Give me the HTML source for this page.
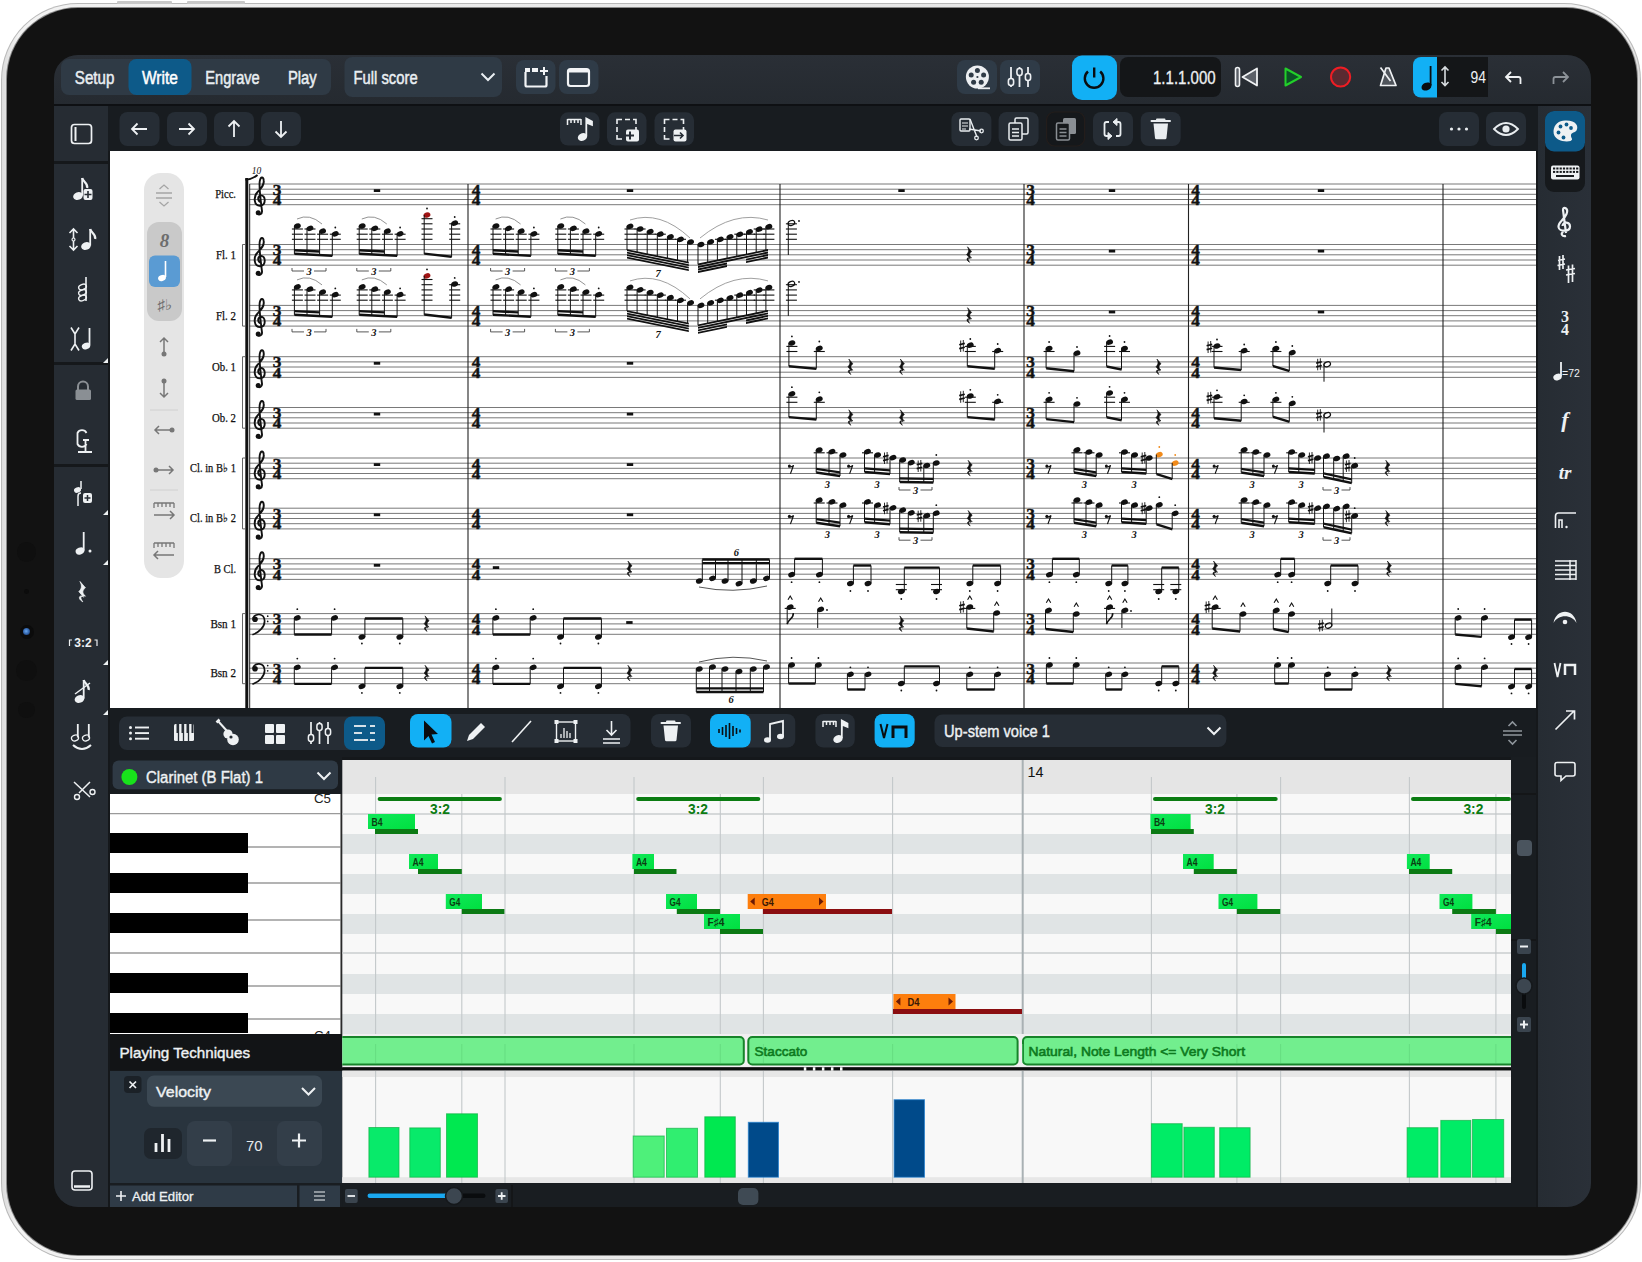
<!DOCTYPE html>
<html><head><meta charset="utf-8">
<style>
*{margin:0;padding:0;box-sizing:border-box}
html,body{width:1642px;height:1262px;overflow:hidden;background:#fff;font-family:"Liberation Sans",sans-serif}
.a{position:absolute}

.frame{left:1px;top:3px;width:1640px;height:1257px;border-radius:77px;background:#b9b9b9;}
.frame2{left:2px;top:4px;width:1638px;height:1255px;border-radius:76px;background:linear-gradient(90deg,#dcdcdc,#f2f2f2 1%,#e6e6e6 50%,#f2f2f2 99%,#dcdcdc);}
.bezel{left:7px;top:8px;width:1630px;height:1247px;border-radius:71px;background:#121212;box-shadow:0 0 0 1px #8a8a8a;}
.screen{left:54px;top:55px;width:1537px;height:1152px;border-radius:24px;background:#15181b;overflow:hidden}
.t{position:absolute;color:#e9eef2;font-family:"Liberation Sans",sans-serif;white-space:nowrap}
.b{position:absolute;border-radius:8px}


</style></head><body>
<div class="a frame"></div><div class="a frame2"></div><div class="a bezel"></div>
<div class="a" style="left:16.7px;top:542.2px;width:19.6px;height:19.6px;background:#0f0f0f;border-radius:10px;"></div>
<div class="a" style="left:24.3px;top:589.2px;width:4.4px;height:4.4px;background:#0c0c0c;border-radius:3px;"></div>
<div class="a" style="left:19.5px;top:624.8px;width:14px;height:14px;background:#0b0b0b;border-radius:7px;"></div>
<div class="a" style="left:23px;top:628.3px;width:7px;height:7px;background:radial-gradient(circle at 45% 45%,#6aa8f0,#2a5aa0 60%,#10203a);border-radius:4px;"></div>
<div class="a" style="left:16px;top:660.2px;width:21px;height:21px;background:#0f0f0f;border-radius:11px;"></div>
<div class="a" style="left:18.2px;top:701.7px;width:16.6px;height:16.6px;background:#0f0f0f;border-radius:9px;"></div>
<div class="a" style="left:117px;top:1px;width:55px;height:3px;background:#c8c8c8;border-radius:1px;"></div>
<div class="a" style="left:187px;top:1px;width:58px;height:3px;background:#c8c8c8;border-radius:1px;"></div>
<div class="a screen">
<div class="a" style="left:0px;top:0px;width:1537px;height:49px;background:linear-gradient(#2a2f36,#252a30);border-radius:0px;"></div>
<div class="a" style="left:0px;top:49px;width:1537px;height:2px;background:#0e1013;border-radius:0px;"></div>
<div class="a" style="left:0px;top:51px;width:1537px;height:45px;background:#181c20;border-radius:0px;"></div>
<div class="a" style="left:0px;top:51px;width:54px;height:55px;background:#262c33;border-radius:0px;"></div>
<div class="a" style="left:0px;top:109px;width:54px;height:198px;background:#262c33;border-radius:0px;"></div>
<div class="a" style="left:0px;top:310px;width:54px;height:99px;background:#262c33;border-radius:0px;"></div>
<div class="a" style="left:0px;top:412px;width:54px;height:740px;background:#262c33;border-radius:0px;"></div>
<div class="a" style="left:1484px;top:51px;width:53px;height:1101px;background:linear-gradient(90deg,#262c33,#2a3038);border-radius:0px;"></div>
<div class="a" style="left:56px;top:653px;width:1426px;height:49px;background:#181c20;border-radius:0px;"></div>
<div class="a" style="left:56px;top:702px;width:232px;height:37px;background:#181c20;border-radius:0px;"></div>
<div class="a" style="left:56px;top:979px;width:232px;height:36px;background:#121416;border-radius:0px;"></div>
<div class="a" style="left:56px;top:1016px;width:232px;height:113px;background:#29343e;border-radius:0px;"></div>
<div class="a" style="left:56px;top:1128px;width:1426px;height:24px;background:#181c20;border-radius:0px;"></div>
<div class="a" style="left:1457px;top:702px;width:25px;height:426px;background:#191d21;border-radius:0px;"></div>
</div>
<svg class="a" style="left:110px;top:151px" width="1426" height="557" viewBox="110 151 1426 557">
<rect x="110" y="151" width="1426" height="557" fill="#fff"/>
<rect x="144" y="173" width="40" height="405" rx="17" fill="#e5e5e5"/>
<rect x="147" y="222" width="35" height="99" rx="12" fill="#c9c9c9"/>
<rect x="149" y="255.5" width="31" height="31.5" rx="6" fill="#5a9bd3"/>
<path d="M156 193 H172 M156 198 H172 M159.5 189 L164 185 L168.5 189 M159.5 202 L164 206 L168.5 202" stroke="#a5a5a5" stroke-width="1.3" fill="none"/>
<text x="164.5" y="247" font-size="19" text-anchor="middle" font-style="italic" font-weight="bold" fill="#6d6d6d" style="font-family:Liberation Serif">8</text>
<ellipse cx="162" cy="278" rx="4" ry="3" transform="rotate(-22 162 278)" fill="#fff"/><path d="M165.5 277 V261" stroke="#fff" stroke-width="1.6"/>
<text x="164.5" y="310" font-size="15" text-anchor="middle" fill="#6d6d6d" style="font-family:Liberation Sans">♯♭</text>
<path d="M164 355 V338 M160 342 L164 338 L168 342" stroke="#777" stroke-width="1.5" fill="none"/><circle cx="164" cy="354" r="2.5" fill="#777"/>
<path d="M164 380 V397 M160 393 L164 397 L168 393" stroke="#777" stroke-width="1.5" fill="none"/><circle cx="164" cy="381" r="2.5" fill="#777"/>
<path d="M150 410 H178" stroke="#d0d0d0" stroke-width="1"/>
<path d="M172 430 H155 M159 426 L155 430 L159 434" stroke="#777" stroke-width="1.5" fill="none"/><circle cx="172" cy="430" r="2.5" fill="#777"/>
<path d="M156 470 H173 M169 466 L173 470 L169 474" stroke="#777" stroke-width="1.5" fill="none"/><circle cx="156" cy="470" r="2.5" fill="#777"/>
<path d="M150 490 H178" stroke="#d0d0d0" stroke-width="1"/>
<path d="M154 503 H174 M154 503 V508 M158 503 V507 M162 503 V507 M166 503 V507 M170 503 V507 M174 503 V508" stroke="#777" stroke-width="1.3" fill="none"/>
<path d="M154 515 H174 M170 511 L174 515 L170 519" stroke="#777" stroke-width="1.5" fill="none"/>
<path d="M154 543 H174 M154 543 V548 M158 543 V547 M162 543 V547 M166 543 V547 M170 543 V547 M174 543 V548" stroke="#777" stroke-width="1.3" fill="none"/>
<path d="M174 555 H154 M158 551 L154 555 L158 559" stroke="#777" stroke-width="1.5" fill="none"/>
<text x="215.2" y="198.1" font-size="12" textLength="20.8" lengthAdjust="spacingAndGlyphs" fill="#111" stroke="#111" stroke-width="0.25" style="font-family:Liberation Serif">Picc.</text>
<text x="216.0" y="258.6" font-size="12" textLength="20" lengthAdjust="spacingAndGlyphs" fill="#111" stroke="#111" stroke-width="0.25" style="font-family:Liberation Serif">Fl. 1</text>
<text x="216.0" y="319.5" font-size="12" textLength="20" lengthAdjust="spacingAndGlyphs" fill="#111" stroke="#111" stroke-width="0.25" style="font-family:Liberation Serif">Fl. 2</text>
<text x="212.0" y="370.8" font-size="12" textLength="24" lengthAdjust="spacingAndGlyphs" fill="#111" stroke="#111" stroke-width="0.25" style="font-family:Liberation Serif">Ob. 1</text>
<text x="212.0" y="421.6" font-size="12" textLength="24" lengthAdjust="spacingAndGlyphs" fill="#111" stroke="#111" stroke-width="0.25" style="font-family:Liberation Serif">Ob. 2</text>
<text x="190.0" y="472.1" font-size="12" textLength="46" lengthAdjust="spacingAndGlyphs" fill="#111" stroke="#111" stroke-width="0.25" style="font-family:Liberation Serif">Cl. in B♭ 1</text>
<text x="190.0" y="522.3" font-size="12" textLength="46" lengthAdjust="spacingAndGlyphs" fill="#111" stroke="#111" stroke-width="0.25" style="font-family:Liberation Serif">Cl. in B♭ 2</text>
<text x="214.0" y="572.8" font-size="12" textLength="22" lengthAdjust="spacingAndGlyphs" fill="#111" stroke="#111" stroke-width="0.25" style="font-family:Liberation Serif">B Cl.</text>
<text x="210.4" y="627.7" font-size="12" textLength="25.6" lengthAdjust="spacingAndGlyphs" fill="#111" stroke="#111" stroke-width="0.25" style="font-family:Liberation Serif">Bsn 1</text>
<text x="210.4" y="677.1" font-size="12" textLength="25.6" lengthAdjust="spacingAndGlyphs" fill="#111" stroke="#111" stroke-width="0.25" style="font-family:Liberation Serif">Bsn 2</text>
<path d="M249.5 184.0 H1536" stroke="#6a6a6a" stroke-width="0.9"/>
<path d="M249.5 189.2 H1536" stroke="#6a6a6a" stroke-width="0.9"/>
<path d="M249.5 194.3 H1536" stroke="#6a6a6a" stroke-width="0.9"/>
<path d="M249.5 199.5 H1536" stroke="#6a6a6a" stroke-width="0.9"/>
<path d="M249.5 204.7 H1536" stroke="#6a6a6a" stroke-width="0.9"/>
<path d="M249.5 244.5 H1536" stroke="#6a6a6a" stroke-width="0.9"/>
<path d="M249.5 249.7 H1536" stroke="#6a6a6a" stroke-width="0.9"/>
<path d="M249.5 254.8 H1536" stroke="#6a6a6a" stroke-width="0.9"/>
<path d="M249.5 260.0 H1536" stroke="#6a6a6a" stroke-width="0.9"/>
<path d="M249.5 265.2 H1536" stroke="#6a6a6a" stroke-width="0.9"/>
<path d="M249.5 305.4 H1536" stroke="#6a6a6a" stroke-width="0.9"/>
<path d="M249.5 310.6 H1536" stroke="#6a6a6a" stroke-width="0.9"/>
<path d="M249.5 315.7 H1536" stroke="#6a6a6a" stroke-width="0.9"/>
<path d="M249.5 320.9 H1536" stroke="#6a6a6a" stroke-width="0.9"/>
<path d="M249.5 326.1 H1536" stroke="#6a6a6a" stroke-width="0.9"/>
<path d="M249.5 356.7 H1536" stroke="#6a6a6a" stroke-width="0.9"/>
<path d="M249.5 361.9 H1536" stroke="#6a6a6a" stroke-width="0.9"/>
<path d="M249.5 367.0 H1536" stroke="#6a6a6a" stroke-width="0.9"/>
<path d="M249.5 372.2 H1536" stroke="#6a6a6a" stroke-width="0.9"/>
<path d="M249.5 377.4 H1536" stroke="#6a6a6a" stroke-width="0.9"/>
<path d="M249.5 407.5 H1536" stroke="#6a6a6a" stroke-width="0.9"/>
<path d="M249.5 412.7 H1536" stroke="#6a6a6a" stroke-width="0.9"/>
<path d="M249.5 417.8 H1536" stroke="#6a6a6a" stroke-width="0.9"/>
<path d="M249.5 423.0 H1536" stroke="#6a6a6a" stroke-width="0.9"/>
<path d="M249.5 428.2 H1536" stroke="#6a6a6a" stroke-width="0.9"/>
<path d="M249.5 458.0 H1536" stroke="#6a6a6a" stroke-width="0.9"/>
<path d="M249.5 463.2 H1536" stroke="#6a6a6a" stroke-width="0.9"/>
<path d="M249.5 468.3 H1536" stroke="#6a6a6a" stroke-width="0.9"/>
<path d="M249.5 473.5 H1536" stroke="#6a6a6a" stroke-width="0.9"/>
<path d="M249.5 478.7 H1536" stroke="#6a6a6a" stroke-width="0.9"/>
<path d="M249.5 508.2 H1536" stroke="#6a6a6a" stroke-width="0.9"/>
<path d="M249.5 513.4 H1536" stroke="#6a6a6a" stroke-width="0.9"/>
<path d="M249.5 518.5 H1536" stroke="#6a6a6a" stroke-width="0.9"/>
<path d="M249.5 523.7 H1536" stroke="#6a6a6a" stroke-width="0.9"/>
<path d="M249.5 528.9 H1536" stroke="#6a6a6a" stroke-width="0.9"/>
<path d="M249.5 558.7 H1536" stroke="#6a6a6a" stroke-width="0.9"/>
<path d="M249.5 563.9 H1536" stroke="#6a6a6a" stroke-width="0.9"/>
<path d="M249.5 569.0 H1536" stroke="#6a6a6a" stroke-width="0.9"/>
<path d="M249.5 574.2 H1536" stroke="#6a6a6a" stroke-width="0.9"/>
<path d="M249.5 579.4 H1536" stroke="#6a6a6a" stroke-width="0.9"/>
<path d="M249.5 613.6 H1536" stroke="#6a6a6a" stroke-width="0.9"/>
<path d="M249.5 618.8 H1536" stroke="#6a6a6a" stroke-width="0.9"/>
<path d="M249.5 623.9 H1536" stroke="#6a6a6a" stroke-width="0.9"/>
<path d="M249.5 629.1 H1536" stroke="#6a6a6a" stroke-width="0.9"/>
<path d="M249.5 634.3 H1536" stroke="#6a6a6a" stroke-width="0.9"/>
<path d="M249.5 663.0 H1536" stroke="#6a6a6a" stroke-width="0.9"/>
<path d="M249.5 668.2 H1536" stroke="#6a6a6a" stroke-width="0.9"/>
<path d="M249.5 673.3 H1536" stroke="#6a6a6a" stroke-width="0.9"/>
<path d="M249.5 678.5 H1536" stroke="#6a6a6a" stroke-width="0.9"/>
<path d="M249.5 683.7 H1536" stroke="#6a6a6a" stroke-width="0.9"/>
<path d="M246.8 178 V708" stroke="#111" stroke-width="3"/>
<path d="M245.3 179.5 Q252 179.5 257.5 175" stroke="#111" stroke-width="2" fill="none"/>
<path d="M249.7 184 V708" stroke="#222" stroke-width="1"/>
<text x="256.5" y="173.5" font-size="9.5" text-anchor="middle" font-style="italic" fill="#111" style="font-family:Liberation Serif">10</text>
<path d="M245 244.5 H242.5 V326.1 H245" stroke="#555" stroke-width="0.9" fill="none"/>
<path d="M245 356.7 H242.5 V428.2 H245" stroke="#555" stroke-width="0.9" fill="none"/>
<path d="M245 458.0 H242.5 V528.9 H245" stroke="#555" stroke-width="0.9" fill="none"/>
<path d="M245 613.6 H242.5 V683.7 H245" stroke="#555" stroke-width="0.9" fill="none"/>
<path d="M468 184 V708" stroke="#222" stroke-width="1.1"/>
<path d="M780 184 V708" stroke="#222" stroke-width="1.1"/>
<path d="M1024 184 V708" stroke="#222" stroke-width="1.1"/>
<path d="M1188.5 184 V708" stroke="#222" stroke-width="1.1"/>
<path d="M1443 184 V708" stroke="#222" stroke-width="1.1"/>
<path d="M261.3 201.8 C257.8 202.4 256.9 196.4 260.7 195.4 C265.7 194.6 266.6 205.2 260.2 205.7 C253.8 206.0 253.0 196.4 257.8 191.8 C261.3 188.1 264.4 185.0 263.7 180.4 C263.3 176.5 260.7 176.5 259.8 180.9 C258.7 186.6 260.7 200.5 262.0 210.9 C262.4 214.0 259.1 215.5 257.4 213.5" stroke="#111" stroke-width="1.9" fill="none"/>
<circle cx="258.2" cy="212.7" r="2.5" fill="#111"/>
<text x="277.0" y="194.5" font-size="15.5" text-anchor="middle" font-weight="bold" fill="#111" stroke="#111" stroke-width="0.45" style="font-family:Liberation Serif" textLength="8.6" lengthAdjust="spacingAndGlyphs">3</text>
<text x="277.0" y="204.9" font-size="15.5" text-anchor="middle" font-weight="bold" fill="#111" stroke="#111" stroke-width="0.45" style="font-family:Liberation Serif" textLength="8.6" lengthAdjust="spacingAndGlyphs">4</text>
<text x="476.0" y="194.5" font-size="15.5" text-anchor="middle" font-weight="bold" fill="#111" stroke="#111" stroke-width="0.45" style="font-family:Liberation Serif" textLength="8.6" lengthAdjust="spacingAndGlyphs">4</text>
<text x="476.0" y="204.9" font-size="15.5" text-anchor="middle" font-weight="bold" fill="#111" stroke="#111" stroke-width="0.45" style="font-family:Liberation Serif" textLength="8.6" lengthAdjust="spacingAndGlyphs">4</text>
<text x="1030.5" y="194.5" font-size="15.5" text-anchor="middle" font-weight="bold" fill="#111" stroke="#111" stroke-width="0.45" style="font-family:Liberation Serif" textLength="8.6" lengthAdjust="spacingAndGlyphs">3</text>
<text x="1030.5" y="204.9" font-size="15.5" text-anchor="middle" font-weight="bold" fill="#111" stroke="#111" stroke-width="0.45" style="font-family:Liberation Serif" textLength="8.6" lengthAdjust="spacingAndGlyphs">4</text>
<text x="1195.5" y="194.5" font-size="15.5" text-anchor="middle" font-weight="bold" fill="#111" stroke="#111" stroke-width="0.45" style="font-family:Liberation Serif" textLength="8.6" lengthAdjust="spacingAndGlyphs">4</text>
<text x="1195.5" y="204.9" font-size="15.5" text-anchor="middle" font-weight="bold" fill="#111" stroke="#111" stroke-width="0.45" style="font-family:Liberation Serif" textLength="8.6" lengthAdjust="spacingAndGlyphs">4</text>
<path d="M261.3 262.3 C257.8 262.9 256.9 256.9 260.7 255.9 C265.7 255.1 266.6 265.7 260.2 266.2 C253.8 266.5 253.0 256.9 257.8 252.3 C261.3 248.6 264.4 245.5 263.7 240.9 C263.3 237.0 260.7 237.0 259.8 241.4 C258.7 247.1 260.7 261.0 262.0 271.4 C262.4 274.5 259.1 276.0 257.4 274.0" stroke="#111" stroke-width="1.9" fill="none"/>
<circle cx="258.2" cy="273.2" r="2.5" fill="#111"/>
<text x="277.0" y="255.0" font-size="15.5" text-anchor="middle" font-weight="bold" fill="#111" stroke="#111" stroke-width="0.45" style="font-family:Liberation Serif" textLength="8.6" lengthAdjust="spacingAndGlyphs">3</text>
<text x="277.0" y="265.4" font-size="15.5" text-anchor="middle" font-weight="bold" fill="#111" stroke="#111" stroke-width="0.45" style="font-family:Liberation Serif" textLength="8.6" lengthAdjust="spacingAndGlyphs">4</text>
<text x="476.0" y="255.0" font-size="15.5" text-anchor="middle" font-weight="bold" fill="#111" stroke="#111" stroke-width="0.45" style="font-family:Liberation Serif" textLength="8.6" lengthAdjust="spacingAndGlyphs">4</text>
<text x="476.0" y="265.4" font-size="15.5" text-anchor="middle" font-weight="bold" fill="#111" stroke="#111" stroke-width="0.45" style="font-family:Liberation Serif" textLength="8.6" lengthAdjust="spacingAndGlyphs">4</text>
<text x="1030.5" y="255.0" font-size="15.5" text-anchor="middle" font-weight="bold" fill="#111" stroke="#111" stroke-width="0.45" style="font-family:Liberation Serif" textLength="8.6" lengthAdjust="spacingAndGlyphs">3</text>
<text x="1030.5" y="265.4" font-size="15.5" text-anchor="middle" font-weight="bold" fill="#111" stroke="#111" stroke-width="0.45" style="font-family:Liberation Serif" textLength="8.6" lengthAdjust="spacingAndGlyphs">4</text>
<text x="1195.5" y="255.0" font-size="15.5" text-anchor="middle" font-weight="bold" fill="#111" stroke="#111" stroke-width="0.45" style="font-family:Liberation Serif" textLength="8.6" lengthAdjust="spacingAndGlyphs">4</text>
<text x="1195.5" y="265.4" font-size="15.5" text-anchor="middle" font-weight="bold" fill="#111" stroke="#111" stroke-width="0.45" style="font-family:Liberation Serif" textLength="8.6" lengthAdjust="spacingAndGlyphs">4</text>
<path d="M261.3 323.2 C257.8 323.8 256.9 317.8 260.7 316.8 C265.7 316.0 266.6 326.6 260.2 327.1 C253.8 327.4 253.0 317.8 257.8 313.2 C261.3 309.5 264.4 306.4 263.7 301.8 C263.3 297.9 260.7 297.9 259.8 302.3 C258.7 308.0 260.7 321.9 262.0 332.3 C262.4 335.4 259.1 336.9 257.4 334.9" stroke="#111" stroke-width="1.9" fill="none"/>
<circle cx="258.2" cy="334.1" r="2.5" fill="#111"/>
<text x="277.0" y="315.9" font-size="15.5" text-anchor="middle" font-weight="bold" fill="#111" stroke="#111" stroke-width="0.45" style="font-family:Liberation Serif" textLength="8.6" lengthAdjust="spacingAndGlyphs">3</text>
<text x="277.0" y="326.3" font-size="15.5" text-anchor="middle" font-weight="bold" fill="#111" stroke="#111" stroke-width="0.45" style="font-family:Liberation Serif" textLength="8.6" lengthAdjust="spacingAndGlyphs">4</text>
<text x="476.0" y="315.9" font-size="15.5" text-anchor="middle" font-weight="bold" fill="#111" stroke="#111" stroke-width="0.45" style="font-family:Liberation Serif" textLength="8.6" lengthAdjust="spacingAndGlyphs">4</text>
<text x="476.0" y="326.3" font-size="15.5" text-anchor="middle" font-weight="bold" fill="#111" stroke="#111" stroke-width="0.45" style="font-family:Liberation Serif" textLength="8.6" lengthAdjust="spacingAndGlyphs">4</text>
<text x="1030.5" y="315.9" font-size="15.5" text-anchor="middle" font-weight="bold" fill="#111" stroke="#111" stroke-width="0.45" style="font-family:Liberation Serif" textLength="8.6" lengthAdjust="spacingAndGlyphs">3</text>
<text x="1030.5" y="326.3" font-size="15.5" text-anchor="middle" font-weight="bold" fill="#111" stroke="#111" stroke-width="0.45" style="font-family:Liberation Serif" textLength="8.6" lengthAdjust="spacingAndGlyphs">4</text>
<text x="1195.5" y="315.9" font-size="15.5" text-anchor="middle" font-weight="bold" fill="#111" stroke="#111" stroke-width="0.45" style="font-family:Liberation Serif" textLength="8.6" lengthAdjust="spacingAndGlyphs">4</text>
<text x="1195.5" y="326.3" font-size="15.5" text-anchor="middle" font-weight="bold" fill="#111" stroke="#111" stroke-width="0.45" style="font-family:Liberation Serif" textLength="8.6" lengthAdjust="spacingAndGlyphs">4</text>
<path d="M261.3 374.5 C257.8 375.1 256.9 369.1 260.7 368.1 C265.7 367.3 266.6 377.9 260.2 378.4 C253.8 378.7 253.0 369.1 257.8 364.5 C261.3 360.8 264.4 357.7 263.7 353.1 C263.3 349.2 260.7 349.2 259.8 353.6 C258.7 359.3 260.7 373.2 262.0 383.6 C262.4 386.7 259.1 388.2 257.4 386.2" stroke="#111" stroke-width="1.9" fill="none"/>
<circle cx="258.2" cy="385.4" r="2.5" fill="#111"/>
<text x="277.0" y="367.2" font-size="15.5" text-anchor="middle" font-weight="bold" fill="#111" stroke="#111" stroke-width="0.45" style="font-family:Liberation Serif" textLength="8.6" lengthAdjust="spacingAndGlyphs">3</text>
<text x="277.0" y="377.6" font-size="15.5" text-anchor="middle" font-weight="bold" fill="#111" stroke="#111" stroke-width="0.45" style="font-family:Liberation Serif" textLength="8.6" lengthAdjust="spacingAndGlyphs">4</text>
<text x="476.0" y="367.2" font-size="15.5" text-anchor="middle" font-weight="bold" fill="#111" stroke="#111" stroke-width="0.45" style="font-family:Liberation Serif" textLength="8.6" lengthAdjust="spacingAndGlyphs">4</text>
<text x="476.0" y="377.6" font-size="15.5" text-anchor="middle" font-weight="bold" fill="#111" stroke="#111" stroke-width="0.45" style="font-family:Liberation Serif" textLength="8.6" lengthAdjust="spacingAndGlyphs">4</text>
<text x="1030.5" y="367.2" font-size="15.5" text-anchor="middle" font-weight="bold" fill="#111" stroke="#111" stroke-width="0.45" style="font-family:Liberation Serif" textLength="8.6" lengthAdjust="spacingAndGlyphs">3</text>
<text x="1030.5" y="377.6" font-size="15.5" text-anchor="middle" font-weight="bold" fill="#111" stroke="#111" stroke-width="0.45" style="font-family:Liberation Serif" textLength="8.6" lengthAdjust="spacingAndGlyphs">4</text>
<text x="1195.5" y="367.2" font-size="15.5" text-anchor="middle" font-weight="bold" fill="#111" stroke="#111" stroke-width="0.45" style="font-family:Liberation Serif" textLength="8.6" lengthAdjust="spacingAndGlyphs">4</text>
<text x="1195.5" y="377.6" font-size="15.5" text-anchor="middle" font-weight="bold" fill="#111" stroke="#111" stroke-width="0.45" style="font-family:Liberation Serif" textLength="8.6" lengthAdjust="spacingAndGlyphs">4</text>
<path d="M261.3 425.3 C257.8 425.9 256.9 419.9 260.7 418.9 C265.7 418.1 266.6 428.7 260.2 429.2 C253.8 429.5 253.0 419.9 257.8 415.3 C261.3 411.6 264.4 408.5 263.7 403.9 C263.3 400.0 260.7 400.0 259.8 404.4 C258.7 410.1 260.7 424.0 262.0 434.4 C262.4 437.5 259.1 439.0 257.4 437.0" stroke="#111" stroke-width="1.9" fill="none"/>
<circle cx="258.2" cy="436.2" r="2.5" fill="#111"/>
<text x="277.0" y="418.0" font-size="15.5" text-anchor="middle" font-weight="bold" fill="#111" stroke="#111" stroke-width="0.45" style="font-family:Liberation Serif" textLength="8.6" lengthAdjust="spacingAndGlyphs">3</text>
<text x="277.0" y="428.4" font-size="15.5" text-anchor="middle" font-weight="bold" fill="#111" stroke="#111" stroke-width="0.45" style="font-family:Liberation Serif" textLength="8.6" lengthAdjust="spacingAndGlyphs">4</text>
<text x="476.0" y="418.0" font-size="15.5" text-anchor="middle" font-weight="bold" fill="#111" stroke="#111" stroke-width="0.45" style="font-family:Liberation Serif" textLength="8.6" lengthAdjust="spacingAndGlyphs">4</text>
<text x="476.0" y="428.4" font-size="15.5" text-anchor="middle" font-weight="bold" fill="#111" stroke="#111" stroke-width="0.45" style="font-family:Liberation Serif" textLength="8.6" lengthAdjust="spacingAndGlyphs">4</text>
<text x="1030.5" y="418.0" font-size="15.5" text-anchor="middle" font-weight="bold" fill="#111" stroke="#111" stroke-width="0.45" style="font-family:Liberation Serif" textLength="8.6" lengthAdjust="spacingAndGlyphs">3</text>
<text x="1030.5" y="428.4" font-size="15.5" text-anchor="middle" font-weight="bold" fill="#111" stroke="#111" stroke-width="0.45" style="font-family:Liberation Serif" textLength="8.6" lengthAdjust="spacingAndGlyphs">4</text>
<text x="1195.5" y="418.0" font-size="15.5" text-anchor="middle" font-weight="bold" fill="#111" stroke="#111" stroke-width="0.45" style="font-family:Liberation Serif" textLength="8.6" lengthAdjust="spacingAndGlyphs">4</text>
<text x="1195.5" y="428.4" font-size="15.5" text-anchor="middle" font-weight="bold" fill="#111" stroke="#111" stroke-width="0.45" style="font-family:Liberation Serif" textLength="8.6" lengthAdjust="spacingAndGlyphs">4</text>
<path d="M261.3 475.8 C257.8 476.4 256.9 470.4 260.7 469.4 C265.7 468.6 266.6 479.2 260.2 479.7 C253.8 480.0 253.0 470.4 257.8 465.8 C261.3 462.1 264.4 459.0 263.7 454.4 C263.3 450.5 260.7 450.5 259.8 454.9 C258.7 460.6 260.7 474.5 262.0 484.9 C262.4 488.0 259.1 489.5 257.4 487.5" stroke="#111" stroke-width="1.9" fill="none"/>
<circle cx="258.2" cy="486.7" r="2.5" fill="#111"/>
<text x="277.0" y="468.5" font-size="15.5" text-anchor="middle" font-weight="bold" fill="#111" stroke="#111" stroke-width="0.45" style="font-family:Liberation Serif" textLength="8.6" lengthAdjust="spacingAndGlyphs">3</text>
<text x="277.0" y="478.9" font-size="15.5" text-anchor="middle" font-weight="bold" fill="#111" stroke="#111" stroke-width="0.45" style="font-family:Liberation Serif" textLength="8.6" lengthAdjust="spacingAndGlyphs">4</text>
<text x="476.0" y="468.5" font-size="15.5" text-anchor="middle" font-weight="bold" fill="#111" stroke="#111" stroke-width="0.45" style="font-family:Liberation Serif" textLength="8.6" lengthAdjust="spacingAndGlyphs">4</text>
<text x="476.0" y="478.9" font-size="15.5" text-anchor="middle" font-weight="bold" fill="#111" stroke="#111" stroke-width="0.45" style="font-family:Liberation Serif" textLength="8.6" lengthAdjust="spacingAndGlyphs">4</text>
<text x="1030.5" y="468.5" font-size="15.5" text-anchor="middle" font-weight="bold" fill="#111" stroke="#111" stroke-width="0.45" style="font-family:Liberation Serif" textLength="8.6" lengthAdjust="spacingAndGlyphs">3</text>
<text x="1030.5" y="478.9" font-size="15.5" text-anchor="middle" font-weight="bold" fill="#111" stroke="#111" stroke-width="0.45" style="font-family:Liberation Serif" textLength="8.6" lengthAdjust="spacingAndGlyphs">4</text>
<text x="1195.5" y="468.5" font-size="15.5" text-anchor="middle" font-weight="bold" fill="#111" stroke="#111" stroke-width="0.45" style="font-family:Liberation Serif" textLength="8.6" lengthAdjust="spacingAndGlyphs">4</text>
<text x="1195.5" y="478.9" font-size="15.5" text-anchor="middle" font-weight="bold" fill="#111" stroke="#111" stroke-width="0.45" style="font-family:Liberation Serif" textLength="8.6" lengthAdjust="spacingAndGlyphs">4</text>
<path d="M261.3 526.0 C257.8 526.6 256.9 520.6 260.7 519.6 C265.7 518.8 266.6 529.4 260.2 529.9 C253.8 530.2 253.0 520.6 257.8 516.0 C261.3 512.3 264.4 509.2 263.7 504.6 C263.3 500.7 260.7 500.7 259.8 505.1 C258.7 510.8 260.7 524.7 262.0 535.1 C262.4 538.2 259.1 539.7 257.4 537.7" stroke="#111" stroke-width="1.9" fill="none"/>
<circle cx="258.2" cy="536.9" r="2.5" fill="#111"/>
<text x="277.0" y="518.7" font-size="15.5" text-anchor="middle" font-weight="bold" fill="#111" stroke="#111" stroke-width="0.45" style="font-family:Liberation Serif" textLength="8.6" lengthAdjust="spacingAndGlyphs">3</text>
<text x="277.0" y="529.1" font-size="15.5" text-anchor="middle" font-weight="bold" fill="#111" stroke="#111" stroke-width="0.45" style="font-family:Liberation Serif" textLength="8.6" lengthAdjust="spacingAndGlyphs">4</text>
<text x="476.0" y="518.7" font-size="15.5" text-anchor="middle" font-weight="bold" fill="#111" stroke="#111" stroke-width="0.45" style="font-family:Liberation Serif" textLength="8.6" lengthAdjust="spacingAndGlyphs">4</text>
<text x="476.0" y="529.1" font-size="15.5" text-anchor="middle" font-weight="bold" fill="#111" stroke="#111" stroke-width="0.45" style="font-family:Liberation Serif" textLength="8.6" lengthAdjust="spacingAndGlyphs">4</text>
<text x="1030.5" y="518.7" font-size="15.5" text-anchor="middle" font-weight="bold" fill="#111" stroke="#111" stroke-width="0.45" style="font-family:Liberation Serif" textLength="8.6" lengthAdjust="spacingAndGlyphs">3</text>
<text x="1030.5" y="529.1" font-size="15.5" text-anchor="middle" font-weight="bold" fill="#111" stroke="#111" stroke-width="0.45" style="font-family:Liberation Serif" textLength="8.6" lengthAdjust="spacingAndGlyphs">4</text>
<text x="1195.5" y="518.7" font-size="15.5" text-anchor="middle" font-weight="bold" fill="#111" stroke="#111" stroke-width="0.45" style="font-family:Liberation Serif" textLength="8.6" lengthAdjust="spacingAndGlyphs">4</text>
<text x="1195.5" y="529.1" font-size="15.5" text-anchor="middle" font-weight="bold" fill="#111" stroke="#111" stroke-width="0.45" style="font-family:Liberation Serif" textLength="8.6" lengthAdjust="spacingAndGlyphs">4</text>
<path d="M261.3 576.5 C257.8 577.1 256.9 571.1 260.7 570.1 C265.7 569.3 266.6 579.9 260.2 580.4 C253.8 580.7 253.0 571.1 257.8 566.5 C261.3 562.8 264.4 559.7 263.7 555.1 C263.3 551.2 260.7 551.2 259.8 555.6 C258.7 561.3 260.7 575.2 262.0 585.6 C262.4 588.7 259.1 590.2 257.4 588.2" stroke="#111" stroke-width="1.9" fill="none"/>
<circle cx="258.2" cy="587.4" r="2.5" fill="#111"/>
<text x="277.0" y="569.2" font-size="15.5" text-anchor="middle" font-weight="bold" fill="#111" stroke="#111" stroke-width="0.45" style="font-family:Liberation Serif" textLength="8.6" lengthAdjust="spacingAndGlyphs">3</text>
<text x="277.0" y="579.6" font-size="15.5" text-anchor="middle" font-weight="bold" fill="#111" stroke="#111" stroke-width="0.45" style="font-family:Liberation Serif" textLength="8.6" lengthAdjust="spacingAndGlyphs">4</text>
<text x="476.0" y="569.2" font-size="15.5" text-anchor="middle" font-weight="bold" fill="#111" stroke="#111" stroke-width="0.45" style="font-family:Liberation Serif" textLength="8.6" lengthAdjust="spacingAndGlyphs">4</text>
<text x="476.0" y="579.6" font-size="15.5" text-anchor="middle" font-weight="bold" fill="#111" stroke="#111" stroke-width="0.45" style="font-family:Liberation Serif" textLength="8.6" lengthAdjust="spacingAndGlyphs">4</text>
<text x="1030.5" y="569.2" font-size="15.5" text-anchor="middle" font-weight="bold" fill="#111" stroke="#111" stroke-width="0.45" style="font-family:Liberation Serif" textLength="8.6" lengthAdjust="spacingAndGlyphs">3</text>
<text x="1030.5" y="579.6" font-size="15.5" text-anchor="middle" font-weight="bold" fill="#111" stroke="#111" stroke-width="0.45" style="font-family:Liberation Serif" textLength="8.6" lengthAdjust="spacingAndGlyphs">4</text>
<text x="1195.5" y="569.2" font-size="15.5" text-anchor="middle" font-weight="bold" fill="#111" stroke="#111" stroke-width="0.45" style="font-family:Liberation Serif" textLength="8.6" lengthAdjust="spacingAndGlyphs">4</text>
<text x="1195.5" y="579.6" font-size="15.5" text-anchor="middle" font-weight="bold" fill="#111" stroke="#111" stroke-width="0.45" style="font-family:Liberation Serif" textLength="8.6" lengthAdjust="spacingAndGlyphs">4</text>
<circle cx="255.0" cy="619.3" r="2.8" fill="#111"/>
<path d="M252.9 618.3 C255.0 613.1 264.1 612.6 264.6 620.8 C264.8 627.0 259.2 632.2 252.4 634.8" stroke="#111" stroke-width="1.7" fill="none"/>
<circle cx="267.7" cy="616.2" r="0.85" fill="#111"/>
<circle cx="267.7" cy="621.4" r="0.85" fill="#111"/>
<text x="277.0" y="624.1" font-size="15.5" text-anchor="middle" font-weight="bold" fill="#111" stroke="#111" stroke-width="0.45" style="font-family:Liberation Serif" textLength="8.6" lengthAdjust="spacingAndGlyphs">3</text>
<text x="277.0" y="634.5" font-size="15.5" text-anchor="middle" font-weight="bold" fill="#111" stroke="#111" stroke-width="0.45" style="font-family:Liberation Serif" textLength="8.6" lengthAdjust="spacingAndGlyphs">4</text>
<text x="476.0" y="624.1" font-size="15.5" text-anchor="middle" font-weight="bold" fill="#111" stroke="#111" stroke-width="0.45" style="font-family:Liberation Serif" textLength="8.6" lengthAdjust="spacingAndGlyphs">4</text>
<text x="476.0" y="634.5" font-size="15.5" text-anchor="middle" font-weight="bold" fill="#111" stroke="#111" stroke-width="0.45" style="font-family:Liberation Serif" textLength="8.6" lengthAdjust="spacingAndGlyphs">4</text>
<text x="1030.5" y="624.1" font-size="15.5" text-anchor="middle" font-weight="bold" fill="#111" stroke="#111" stroke-width="0.45" style="font-family:Liberation Serif" textLength="8.6" lengthAdjust="spacingAndGlyphs">3</text>
<text x="1030.5" y="634.5" font-size="15.5" text-anchor="middle" font-weight="bold" fill="#111" stroke="#111" stroke-width="0.45" style="font-family:Liberation Serif" textLength="8.6" lengthAdjust="spacingAndGlyphs">4</text>
<text x="1195.5" y="624.1" font-size="15.5" text-anchor="middle" font-weight="bold" fill="#111" stroke="#111" stroke-width="0.45" style="font-family:Liberation Serif" textLength="8.6" lengthAdjust="spacingAndGlyphs">4</text>
<text x="1195.5" y="634.5" font-size="15.5" text-anchor="middle" font-weight="bold" fill="#111" stroke="#111" stroke-width="0.45" style="font-family:Liberation Serif" textLength="8.6" lengthAdjust="spacingAndGlyphs">4</text>
<circle cx="255.0" cy="668.7" r="2.8" fill="#111"/>
<path d="M252.9 667.7 C255.0 662.5 264.1 662.0 264.6 670.2 C264.8 676.4 259.2 681.6 252.4 684.2" stroke="#111" stroke-width="1.7" fill="none"/>
<circle cx="267.7" cy="665.6" r="0.85" fill="#111"/>
<circle cx="267.7" cy="670.8" r="0.85" fill="#111"/>
<text x="277.0" y="673.5" font-size="15.5" text-anchor="middle" font-weight="bold" fill="#111" stroke="#111" stroke-width="0.45" style="font-family:Liberation Serif" textLength="8.6" lengthAdjust="spacingAndGlyphs">3</text>
<text x="277.0" y="683.9" font-size="15.5" text-anchor="middle" font-weight="bold" fill="#111" stroke="#111" stroke-width="0.45" style="font-family:Liberation Serif" textLength="8.6" lengthAdjust="spacingAndGlyphs">4</text>
<text x="476.0" y="673.5" font-size="15.5" text-anchor="middle" font-weight="bold" fill="#111" stroke="#111" stroke-width="0.45" style="font-family:Liberation Serif" textLength="8.6" lengthAdjust="spacingAndGlyphs">4</text>
<text x="476.0" y="683.9" font-size="15.5" text-anchor="middle" font-weight="bold" fill="#111" stroke="#111" stroke-width="0.45" style="font-family:Liberation Serif" textLength="8.6" lengthAdjust="spacingAndGlyphs">4</text>
<text x="1030.5" y="673.5" font-size="15.5" text-anchor="middle" font-weight="bold" fill="#111" stroke="#111" stroke-width="0.45" style="font-family:Liberation Serif" textLength="8.6" lengthAdjust="spacingAndGlyphs">3</text>
<text x="1030.5" y="683.9" font-size="15.5" text-anchor="middle" font-weight="bold" fill="#111" stroke="#111" stroke-width="0.45" style="font-family:Liberation Serif" textLength="8.6" lengthAdjust="spacingAndGlyphs">4</text>
<text x="1195.5" y="673.5" font-size="15.5" text-anchor="middle" font-weight="bold" fill="#111" stroke="#111" stroke-width="0.45" style="font-family:Liberation Serif" textLength="8.6" lengthAdjust="spacingAndGlyphs">4</text>
<text x="1195.5" y="683.9" font-size="15.5" text-anchor="middle" font-weight="bold" fill="#111" stroke="#111" stroke-width="0.45" style="font-family:Liberation Serif" textLength="8.6" lengthAdjust="spacingAndGlyphs">4</text>
<rect x="373.8" y="189.2" width="6.4" height="2.8" fill="#111"/>
<rect x="626.8" y="189.2" width="6.4" height="2.8" fill="#111"/>
<rect x="898.3" y="189.2" width="6.4" height="2.8" fill="#111"/>
<rect x="1108.8" y="189.2" width="6.4" height="2.8" fill="#111"/>
<rect x="1317.8" y="189.2" width="6.4" height="2.8" fill="#111"/>
<path d="M291.9 239.3 H302.9" stroke="#111" stroke-width="1.1"/>
<path d="M291.9 234.2 H302.9" stroke="#111" stroke-width="1.1"/>
<path d="M291.9 229.0 H302.9" stroke="#111" stroke-width="1.1"/>
<path d="M304.5 239.3 H315.5" stroke="#111" stroke-width="1.1"/>
<path d="M304.5 234.2 H315.5" stroke="#111" stroke-width="1.1"/>
<path d="M304.5 229.0 H315.5" stroke="#111" stroke-width="1.1"/>
<path d="M317.1 239.3 H328.1" stroke="#111" stroke-width="1.1"/>
<path d="M317.1 234.2 H328.1" stroke="#111" stroke-width="1.1"/>
<path d="M329.8 239.3 H340.8" stroke="#111" stroke-width="1.1"/>
<path d="M329.8 234.2 H340.8" stroke="#111" stroke-width="1.1"/>
<ellipse cx="297.4" cy="226.0" rx="3.5" ry="2.6" transform="rotate(-22 297.4 226.0)" fill="#111"/>
<ellipse cx="310.0" cy="228.3" rx="3.5" ry="2.6" transform="rotate(-22 310.0 228.3)" fill="#111"/>
<ellipse cx="322.6" cy="231.2" rx="3.5" ry="2.6" transform="rotate(-22 322.6 231.2)" fill="#111"/>
<ellipse cx="335.3" cy="233.8" rx="3.5" ry="2.6" transform="rotate(-22 335.3 233.8)" fill="#111"/>
<path d="M294.4 226.0 V254.0" stroke="#111" stroke-width="1"/>
<path d="M307.0 228.3 V254.6" stroke="#111" stroke-width="1"/>
<path d="M319.6 231.2 V255.3" stroke="#111" stroke-width="1"/>
<path d="M332.3 233.8 V255.9" stroke="#111" stroke-width="1"/>
<path d="M294.4 252.6 L332.3 254.6 L332.3 257.0 L294.4 255.0 Z" fill="#111"/>
<path d="M294.4 249.0 L319.6 250.3 L319.6 252.7 L294.4 251.4 Z" fill="#111"/>
<circle cx="335.3" cy="227.5" r="0.9" fill="#111"/>
<path d="M297.0 219.0 Q309.5 213.0 322.0 224.0" stroke="#777" stroke-width="0.8" fill="none"/>
<path d="M292.0 268.0 V271.0 H304.0 M314.0 271.0 H326.0 V268.0" stroke="#444" stroke-width="0.9" fill="none"/>
<text x="309.0" y="275.0" font-size="10.5" text-anchor="middle" font-weight="bold" font-style="italic" fill="#111" style="font-family:Liberation Serif">3</text>
<path d="M356.7 239.3 H367.7" stroke="#111" stroke-width="1.1"/>
<path d="M356.7 234.2 H367.7" stroke="#111" stroke-width="1.1"/>
<path d="M356.7 229.0 H367.7" stroke="#111" stroke-width="1.1"/>
<path d="M369.3 239.3 H380.3" stroke="#111" stroke-width="1.1"/>
<path d="M369.3 234.2 H380.3" stroke="#111" stroke-width="1.1"/>
<path d="M369.3 229.0 H380.3" stroke="#111" stroke-width="1.1"/>
<path d="M381.9 239.3 H392.9" stroke="#111" stroke-width="1.1"/>
<path d="M381.9 234.2 H392.9" stroke="#111" stroke-width="1.1"/>
<path d="M394.6 239.3 H405.6" stroke="#111" stroke-width="1.1"/>
<path d="M394.6 234.2 H405.6" stroke="#111" stroke-width="1.1"/>
<ellipse cx="362.2" cy="226.0" rx="3.5" ry="2.6" transform="rotate(-22 362.2 226.0)" fill="#111"/>
<ellipse cx="374.8" cy="228.3" rx="3.5" ry="2.6" transform="rotate(-22 374.8 228.3)" fill="#111"/>
<ellipse cx="387.4" cy="231.2" rx="3.5" ry="2.6" transform="rotate(-22 387.4 231.2)" fill="#111"/>
<ellipse cx="400.1" cy="233.8" rx="3.5" ry="2.6" transform="rotate(-22 400.1 233.8)" fill="#111"/>
<path d="M359.2 226.0 V254.0" stroke="#111" stroke-width="1"/>
<path d="M371.8 228.3 V254.6" stroke="#111" stroke-width="1"/>
<path d="M384.4 231.2 V255.3" stroke="#111" stroke-width="1"/>
<path d="M397.1 233.8 V255.9" stroke="#111" stroke-width="1"/>
<path d="M359.2 252.6 L397.1 254.6 L397.1 257.0 L359.2 255.0 Z" fill="#111"/>
<path d="M359.2 249.0 L384.4 250.3 L384.4 252.7 L359.2 251.4 Z" fill="#111"/>
<circle cx="400.1" cy="227.5" r="0.9" fill="#111"/>
<path d="M361.8 219.0 Q374.3 213.0 386.8 224.0" stroke="#777" stroke-width="0.8" fill="none"/>
<path d="M356.8 268.0 V271.0 H368.8 M378.8 271.0 H390.8 V268.0" stroke="#444" stroke-width="0.9" fill="none"/>
<text x="373.8" y="275.0" font-size="10.5" text-anchor="middle" font-weight="bold" font-style="italic" fill="#111" style="font-family:Liberation Serif">3</text>
<path d="M490.5 239.3 H501.5" stroke="#111" stroke-width="1.1"/>
<path d="M490.5 234.2 H501.5" stroke="#111" stroke-width="1.1"/>
<path d="M490.5 229.0 H501.5" stroke="#111" stroke-width="1.1"/>
<path d="M503.1 239.3 H514.1" stroke="#111" stroke-width="1.1"/>
<path d="M503.1 234.2 H514.1" stroke="#111" stroke-width="1.1"/>
<path d="M503.1 229.0 H514.1" stroke="#111" stroke-width="1.1"/>
<path d="M515.7 239.3 H526.7" stroke="#111" stroke-width="1.1"/>
<path d="M515.7 234.2 H526.7" stroke="#111" stroke-width="1.1"/>
<path d="M528.4 239.3 H539.4" stroke="#111" stroke-width="1.1"/>
<path d="M528.4 234.2 H539.4" stroke="#111" stroke-width="1.1"/>
<ellipse cx="496.0" cy="226.0" rx="3.5" ry="2.6" transform="rotate(-22 496.0 226.0)" fill="#111"/>
<ellipse cx="508.6" cy="228.3" rx="3.5" ry="2.6" transform="rotate(-22 508.6 228.3)" fill="#111"/>
<ellipse cx="521.2" cy="231.2" rx="3.5" ry="2.6" transform="rotate(-22 521.2 231.2)" fill="#111"/>
<ellipse cx="533.9" cy="233.8" rx="3.5" ry="2.6" transform="rotate(-22 533.9 233.8)" fill="#111"/>
<path d="M493.0 226.0 V254.0" stroke="#111" stroke-width="1"/>
<path d="M505.6 228.3 V254.6" stroke="#111" stroke-width="1"/>
<path d="M518.2 231.2 V255.3" stroke="#111" stroke-width="1"/>
<path d="M530.9 233.8 V255.9" stroke="#111" stroke-width="1"/>
<path d="M493.0 252.6 L530.9 254.6 L530.9 257.0 L493.0 255.0 Z" fill="#111"/>
<path d="M493.0 249.0 L518.2 250.3 L518.2 252.7 L493.0 251.4 Z" fill="#111"/>
<circle cx="533.9" cy="227.5" r="0.9" fill="#111"/>
<path d="M495.6 219.0 Q508.1 213.0 520.6 224.0" stroke="#777" stroke-width="0.8" fill="none"/>
<path d="M490.6 268.0 V271.0 H502.6 M512.6 271.0 H524.6 V268.0" stroke="#444" stroke-width="0.9" fill="none"/>
<text x="507.6" y="275.0" font-size="10.5" text-anchor="middle" font-weight="bold" font-style="italic" fill="#111" style="font-family:Liberation Serif">3</text>
<path d="M555.3 239.3 H566.3" stroke="#111" stroke-width="1.1"/>
<path d="M555.3 234.2 H566.3" stroke="#111" stroke-width="1.1"/>
<path d="M555.3 229.0 H566.3" stroke="#111" stroke-width="1.1"/>
<path d="M567.9 239.3 H578.9" stroke="#111" stroke-width="1.1"/>
<path d="M567.9 234.2 H578.9" stroke="#111" stroke-width="1.1"/>
<path d="M567.9 229.0 H578.9" stroke="#111" stroke-width="1.1"/>
<path d="M580.5 239.3 H591.5" stroke="#111" stroke-width="1.1"/>
<path d="M580.5 234.2 H591.5" stroke="#111" stroke-width="1.1"/>
<path d="M593.2 239.3 H604.2" stroke="#111" stroke-width="1.1"/>
<path d="M593.2 234.2 H604.2" stroke="#111" stroke-width="1.1"/>
<ellipse cx="560.8" cy="226.0" rx="3.5" ry="2.6" transform="rotate(-22 560.8 226.0)" fill="#111"/>
<ellipse cx="573.4" cy="228.3" rx="3.5" ry="2.6" transform="rotate(-22 573.4 228.3)" fill="#111"/>
<ellipse cx="586.0" cy="231.2" rx="3.5" ry="2.6" transform="rotate(-22 586.0 231.2)" fill="#111"/>
<ellipse cx="598.7" cy="233.8" rx="3.5" ry="2.6" transform="rotate(-22 598.7 233.8)" fill="#111"/>
<path d="M557.8 226.0 V254.0" stroke="#111" stroke-width="1"/>
<path d="M570.4 228.3 V254.6" stroke="#111" stroke-width="1"/>
<path d="M583.0 231.2 V255.3" stroke="#111" stroke-width="1"/>
<path d="M595.7 233.8 V255.9" stroke="#111" stroke-width="1"/>
<path d="M557.8 252.6 L595.7 254.6 L595.7 257.0 L557.8 255.0 Z" fill="#111"/>
<path d="M557.8 249.0 L583.0 250.3 L583.0 252.7 L557.8 251.4 Z" fill="#111"/>
<circle cx="598.7" cy="227.5" r="0.9" fill="#111"/>
<path d="M560.4 219.0 Q572.9 213.0 585.4 224.0" stroke="#777" stroke-width="0.8" fill="none"/>
<path d="M555.4 268.0 V271.0 H567.4 M577.4 271.0 H589.4 V268.0" stroke="#444" stroke-width="0.9" fill="none"/>
<text x="572.4" y="275.0" font-size="10.5" text-anchor="middle" font-weight="bold" font-style="italic" fill="#111" style="font-family:Liberation Serif">3</text>
<path d="M421.5 239.3 H432.5" stroke="#111" stroke-width="1.1"/>
<path d="M421.5 234.2 H432.5" stroke="#111" stroke-width="1.1"/>
<path d="M421.5 229.0 H432.5" stroke="#111" stroke-width="1.1"/>
<path d="M421.5 223.8 H432.5" stroke="#111" stroke-width="1.1"/>
<path d="M421.5 218.7 H432.5" stroke="#111" stroke-width="1.1"/>
<path d="M449.2 239.3 H460.2" stroke="#111" stroke-width="1.1"/>
<path d="M449.2 234.2 H460.2" stroke="#111" stroke-width="1.1"/>
<path d="M449.2 229.0 H460.2" stroke="#111" stroke-width="1.1"/>
<path d="M449.2 223.8 H460.2" stroke="#111" stroke-width="1.1"/>
<ellipse cx="427.0" cy="215.0" rx="3.5" ry="2.6" transform="rotate(-22 427.0 215.0)" fill="#a01414"/>
<ellipse cx="454.7" cy="223.1" rx="3.5" ry="2.6" transform="rotate(-22 454.7 223.1)" fill="#111"/>
<path d="M424.2 215.0 V254.0" stroke="#111" stroke-width="1"/>
<path d="M451.6 223.0 V257.0" stroke="#111" stroke-width="1"/>
<path d="M424.2 252.4 L451.6 255.6 L451.6 258.0 L424.2 254.8 Z" fill="#111"/>
<circle cx="427.0" cy="208.5" r="0.9" fill="#111"/>
<circle cx="454.7" cy="217.0" r="0.9" fill="#111"/>
<path d="M624.5 239.3 H635.5" stroke="#111" stroke-width="1.1"/>
<path d="M624.5 234.2 H635.5" stroke="#111" stroke-width="1.1"/>
<path d="M624.5 229.0 H635.5" stroke="#111" stroke-width="1.1"/>
<path d="M634.6 239.3 H645.6" stroke="#111" stroke-width="1.1"/>
<path d="M634.6 234.2 H645.6" stroke="#111" stroke-width="1.1"/>
<path d="M634.6 229.0 H645.6" stroke="#111" stroke-width="1.1"/>
<path d="M644.7 239.3 H655.7" stroke="#111" stroke-width="1.1"/>
<path d="M644.7 234.2 H655.7" stroke="#111" stroke-width="1.1"/>
<path d="M654.8 239.3 H665.8" stroke="#111" stroke-width="1.1"/>
<path d="M654.8 234.2 H665.8" stroke="#111" stroke-width="1.1"/>
<path d="M664.9 239.3 H675.9" stroke="#111" stroke-width="1.1"/>
<path d="M675.0 239.3 H686.0" stroke="#111" stroke-width="1.1"/>
<ellipse cx="630.0" cy="226.4" rx="3.5" ry="2.6" transform="rotate(-22 630.0 226.4)" fill="#111"/>
<ellipse cx="640.1" cy="229.0" rx="3.5" ry="2.6" transform="rotate(-22 640.1 229.0)" fill="#111"/>
<ellipse cx="650.2" cy="231.6" rx="3.5" ry="2.6" transform="rotate(-22 650.2 231.6)" fill="#111"/>
<ellipse cx="660.3" cy="234.2" rx="3.5" ry="2.6" transform="rotate(-22 660.3 234.2)" fill="#111"/>
<ellipse cx="670.4" cy="236.8" rx="3.5" ry="2.6" transform="rotate(-22 670.4 236.8)" fill="#111"/>
<ellipse cx="680.5" cy="239.4" rx="3.5" ry="2.6" transform="rotate(-22 680.5 239.4)" fill="#111"/>
<ellipse cx="690.6" cy="242.0" rx="3.5" ry="2.6" transform="rotate(-22 690.6 242.0)" fill="#111"/>
<path d="M627.0 226.4 V250.0" stroke="#111" stroke-width="1"/>
<path d="M637.1 229.0 V252.0" stroke="#111" stroke-width="1"/>
<path d="M647.2 231.6 V254.1" stroke="#111" stroke-width="1"/>
<path d="M657.3 234.2 V256.1" stroke="#111" stroke-width="1"/>
<path d="M667.4 236.8 V258.2" stroke="#111" stroke-width="1"/>
<path d="M677.5 239.4 V260.2" stroke="#111" stroke-width="1"/>
<path d="M687.6 242.0 V262.3" stroke="#111" stroke-width="1"/>
<path d="M627.0 249.3 L688.8 261.8 L688.8 263.6 L627.0 251.1 Z" fill="#111"/>
<path d="M627.0 251.8 L688.8 264.3 L688.8 266.1 L627.0 253.6 Z" fill="#111"/>
<path d="M627.0 254.3 L688.8 266.8 L688.8 268.6 L627.0 256.1 Z" fill="#111"/>
<path d="M627.0 256.8 L688.8 269.3 L688.8 271.1 L627.0 258.6 Z" fill="#111"/>
<text x="658.0" y="277.0" font-size="10.5" text-anchor="middle" font-weight="bold" font-style="italic" fill="#111" style="font-family:Liberation Serif">7</text>
<path d="M630.0 220.0 Q660.0 210.0 690.0 238.0" stroke="#888" stroke-width="0.8" fill="none"/>
<path d="M714.9 239.3 H725.9" stroke="#111" stroke-width="1.1"/>
<path d="M724.6 239.3 H735.6" stroke="#111" stroke-width="1.1"/>
<path d="M734.3 239.3 H745.3" stroke="#111" stroke-width="1.1"/>
<path d="M734.3 234.2 H745.3" stroke="#111" stroke-width="1.1"/>
<path d="M744.0 239.3 H755.0" stroke="#111" stroke-width="1.1"/>
<path d="M744.0 234.2 H755.0" stroke="#111" stroke-width="1.1"/>
<path d="M753.7 239.3 H764.7" stroke="#111" stroke-width="1.1"/>
<path d="M753.7 234.2 H764.7" stroke="#111" stroke-width="1.1"/>
<path d="M753.7 229.0 H764.7" stroke="#111" stroke-width="1.1"/>
<path d="M763.4 239.3 H774.4" stroke="#111" stroke-width="1.1"/>
<path d="M763.4 234.2 H774.4" stroke="#111" stroke-width="1.1"/>
<path d="M763.4 229.0 H774.4" stroke="#111" stroke-width="1.1"/>
<ellipse cx="701.0" cy="244.5" rx="3.5" ry="2.6" transform="rotate(-22 701.0 244.5)" fill="#111"/>
<ellipse cx="710.7" cy="241.9" rx="3.5" ry="2.6" transform="rotate(-22 710.7 241.9)" fill="#111"/>
<ellipse cx="720.4" cy="239.4" rx="3.5" ry="2.6" transform="rotate(-22 720.4 239.4)" fill="#111"/>
<ellipse cx="730.1" cy="236.8" rx="3.5" ry="2.6" transform="rotate(-22 730.1 236.8)" fill="#111"/>
<ellipse cx="739.8" cy="234.3" rx="3.5" ry="2.6" transform="rotate(-22 739.8 234.3)" fill="#111"/>
<ellipse cx="749.5" cy="231.8" rx="3.5" ry="2.6" transform="rotate(-22 749.5 231.8)" fill="#111"/>
<ellipse cx="759.2" cy="229.2" rx="3.5" ry="2.6" transform="rotate(-22 759.2 229.2)" fill="#111"/>
<ellipse cx="768.9" cy="226.7" rx="3.5" ry="2.6" transform="rotate(-22 768.9 226.7)" fill="#111"/>
<path d="M698.0 244.5 V264.5" stroke="#111" stroke-width="1"/>
<path d="M707.7 241.9 V262.5" stroke="#111" stroke-width="1"/>
<path d="M717.4 239.4 V260.5" stroke="#111" stroke-width="1"/>
<path d="M727.1 236.8 V258.5" stroke="#111" stroke-width="1"/>
<path d="M736.8 234.3 V256.5" stroke="#111" stroke-width="1"/>
<path d="M746.5 231.8 V254.5" stroke="#111" stroke-width="1"/>
<path d="M756.2 229.2 V252.4" stroke="#111" stroke-width="1"/>
<path d="M765.9 226.7 V250.4" stroke="#111" stroke-width="1"/>
<path d="M698.0 263.6 L768.0 249.1 L768.0 250.9 L698.0 265.4 Z" fill="#111"/>
<path d="M698.0 266.1 L768.0 251.6 L768.0 253.4 L698.0 267.9 Z" fill="#111"/>
<path d="M698.0 268.6 L727.0 262.6 L727.0 264.4 L698.0 270.4 Z" fill="#111"/>
<path d="M746.0 258.7 L768.0 254.1 L768.0 255.9 L746.0 260.5 Z" fill="#111"/>
<path d="M698.0 271.1 L727.0 265.1 L727.0 266.9 L698.0 272.9 Z" fill="#111"/>
<path d="M746.0 261.2 L768.0 256.6 L768.0 258.4 L746.0 263.0 Z" fill="#111"/>
<path d="M700.0 238.0 Q734.0 210.0 768.0 220.0" stroke="#888" stroke-width="0.8" fill="none"/>
<path d="M785.9 239.3 H796.9" stroke="#111" stroke-width="1.1"/>
<path d="M785.9 234.2 H796.9" stroke="#111" stroke-width="1.1"/>
<path d="M785.9 229.0 H796.9" stroke="#111" stroke-width="1.1"/>
<path d="M785.9 223.8 H796.9" stroke="#111" stroke-width="1.1"/>
<ellipse cx="791.4" cy="223.0" rx="3.4" ry="2.4" transform="rotate(-22 791.4 223.0)" fill="none" stroke="#111" stroke-width="1.2"/>
<path d="M788.3 223.0 V255.0" stroke="#111" stroke-width="1"/>
<circle cx="799.0" cy="221.0" r="0.9" fill="#111"/>
<path d="M967.5 246.8 L971.6 251.6 C969.5 253.3 968.5 255.3 971.6 258.0 C969.5 257.3 966.2 258.0 969.6 262.3 C964.5 259.3 968.0 256.3 970.2 258.8 L966.6 254.5 C968.7 252.3 969.3 250.3 967.5 246.8 Z" fill="#111" stroke="#111" stroke-width="0.6"/>
<rect x="1108.8" y="249.7" width="6.4" height="2.8" fill="#111"/>
<rect x="1317.8" y="249.7" width="6.4" height="2.8" fill="#111"/>
<path d="M291.9 300.2 H302.9" stroke="#111" stroke-width="1.1"/>
<path d="M291.9 295.1 H302.9" stroke="#111" stroke-width="1.1"/>
<path d="M291.9 289.9 H302.9" stroke="#111" stroke-width="1.1"/>
<path d="M304.5 300.2 H315.5" stroke="#111" stroke-width="1.1"/>
<path d="M304.5 295.1 H315.5" stroke="#111" stroke-width="1.1"/>
<path d="M304.5 289.9 H315.5" stroke="#111" stroke-width="1.1"/>
<path d="M317.1 300.2 H328.1" stroke="#111" stroke-width="1.1"/>
<path d="M317.1 295.1 H328.1" stroke="#111" stroke-width="1.1"/>
<path d="M329.8 300.2 H340.8" stroke="#111" stroke-width="1.1"/>
<path d="M329.8 295.1 H340.8" stroke="#111" stroke-width="1.1"/>
<ellipse cx="297.4" cy="286.9" rx="3.5" ry="2.6" transform="rotate(-22 297.4 286.9)" fill="#111"/>
<ellipse cx="310.0" cy="289.2" rx="3.5" ry="2.6" transform="rotate(-22 310.0 289.2)" fill="#111"/>
<ellipse cx="322.6" cy="292.1" rx="3.5" ry="2.6" transform="rotate(-22 322.6 292.1)" fill="#111"/>
<ellipse cx="335.3" cy="294.7" rx="3.5" ry="2.6" transform="rotate(-22 335.3 294.7)" fill="#111"/>
<path d="M294.4 286.9 V314.9" stroke="#111" stroke-width="1"/>
<path d="M307.0 289.2 V315.5" stroke="#111" stroke-width="1"/>
<path d="M319.6 292.1 V316.2" stroke="#111" stroke-width="1"/>
<path d="M332.3 294.7 V316.8" stroke="#111" stroke-width="1"/>
<path d="M294.4 313.5 L332.3 315.5 L332.3 317.9 L294.4 315.9 Z" fill="#111"/>
<path d="M294.4 309.9 L319.6 311.2 L319.6 313.6 L294.4 312.3 Z" fill="#111"/>
<circle cx="335.3" cy="288.4" r="0.9" fill="#111"/>
<path d="M297.0 279.9 Q309.5 273.9 322.0 284.9" stroke="#777" stroke-width="0.8" fill="none"/>
<path d="M292.0 328.9 V331.9 H304.0 M314.0 331.9 H326.0 V328.9" stroke="#444" stroke-width="0.9" fill="none"/>
<text x="309.0" y="335.9" font-size="10.5" text-anchor="middle" font-weight="bold" font-style="italic" fill="#111" style="font-family:Liberation Serif">3</text>
<path d="M356.7 300.2 H367.7" stroke="#111" stroke-width="1.1"/>
<path d="M356.7 295.1 H367.7" stroke="#111" stroke-width="1.1"/>
<path d="M356.7 289.9 H367.7" stroke="#111" stroke-width="1.1"/>
<path d="M369.3 300.2 H380.3" stroke="#111" stroke-width="1.1"/>
<path d="M369.3 295.1 H380.3" stroke="#111" stroke-width="1.1"/>
<path d="M369.3 289.9 H380.3" stroke="#111" stroke-width="1.1"/>
<path d="M381.9 300.2 H392.9" stroke="#111" stroke-width="1.1"/>
<path d="M381.9 295.1 H392.9" stroke="#111" stroke-width="1.1"/>
<path d="M394.6 300.2 H405.6" stroke="#111" stroke-width="1.1"/>
<path d="M394.6 295.1 H405.6" stroke="#111" stroke-width="1.1"/>
<ellipse cx="362.2" cy="286.9" rx="3.5" ry="2.6" transform="rotate(-22 362.2 286.9)" fill="#111"/>
<ellipse cx="374.8" cy="289.2" rx="3.5" ry="2.6" transform="rotate(-22 374.8 289.2)" fill="#111"/>
<ellipse cx="387.4" cy="292.1" rx="3.5" ry="2.6" transform="rotate(-22 387.4 292.1)" fill="#111"/>
<ellipse cx="400.1" cy="294.7" rx="3.5" ry="2.6" transform="rotate(-22 400.1 294.7)" fill="#111"/>
<path d="M359.2 286.9 V314.9" stroke="#111" stroke-width="1"/>
<path d="M371.8 289.2 V315.5" stroke="#111" stroke-width="1"/>
<path d="M384.4 292.1 V316.2" stroke="#111" stroke-width="1"/>
<path d="M397.1 294.7 V316.8" stroke="#111" stroke-width="1"/>
<path d="M359.2 313.5 L397.1 315.5 L397.1 317.9 L359.2 315.9 Z" fill="#111"/>
<path d="M359.2 309.9 L384.4 311.2 L384.4 313.6 L359.2 312.3 Z" fill="#111"/>
<circle cx="400.1" cy="288.4" r="0.9" fill="#111"/>
<path d="M361.8 279.9 Q374.3 273.9 386.8 284.9" stroke="#777" stroke-width="0.8" fill="none"/>
<path d="M356.8 328.9 V331.9 H368.8 M378.8 331.9 H390.8 V328.9" stroke="#444" stroke-width="0.9" fill="none"/>
<text x="373.8" y="335.9" font-size="10.5" text-anchor="middle" font-weight="bold" font-style="italic" fill="#111" style="font-family:Liberation Serif">3</text>
<path d="M490.5 300.2 H501.5" stroke="#111" stroke-width="1.1"/>
<path d="M490.5 295.1 H501.5" stroke="#111" stroke-width="1.1"/>
<path d="M490.5 289.9 H501.5" stroke="#111" stroke-width="1.1"/>
<path d="M503.1 300.2 H514.1" stroke="#111" stroke-width="1.1"/>
<path d="M503.1 295.1 H514.1" stroke="#111" stroke-width="1.1"/>
<path d="M503.1 289.9 H514.1" stroke="#111" stroke-width="1.1"/>
<path d="M515.7 300.2 H526.7" stroke="#111" stroke-width="1.1"/>
<path d="M515.7 295.1 H526.7" stroke="#111" stroke-width="1.1"/>
<path d="M528.4 300.2 H539.4" stroke="#111" stroke-width="1.1"/>
<path d="M528.4 295.1 H539.4" stroke="#111" stroke-width="1.1"/>
<ellipse cx="496.0" cy="286.9" rx="3.5" ry="2.6" transform="rotate(-22 496.0 286.9)" fill="#111"/>
<ellipse cx="508.6" cy="289.2" rx="3.5" ry="2.6" transform="rotate(-22 508.6 289.2)" fill="#111"/>
<ellipse cx="521.2" cy="292.1" rx="3.5" ry="2.6" transform="rotate(-22 521.2 292.1)" fill="#111"/>
<ellipse cx="533.9" cy="294.7" rx="3.5" ry="2.6" transform="rotate(-22 533.9 294.7)" fill="#111"/>
<path d="M493.0 286.9 V314.9" stroke="#111" stroke-width="1"/>
<path d="M505.6 289.2 V315.5" stroke="#111" stroke-width="1"/>
<path d="M518.2 292.1 V316.2" stroke="#111" stroke-width="1"/>
<path d="M530.9 294.7 V316.8" stroke="#111" stroke-width="1"/>
<path d="M493.0 313.5 L530.9 315.5 L530.9 317.9 L493.0 315.9 Z" fill="#111"/>
<path d="M493.0 309.9 L518.2 311.2 L518.2 313.6 L493.0 312.3 Z" fill="#111"/>
<circle cx="533.9" cy="288.4" r="0.9" fill="#111"/>
<path d="M495.6 279.9 Q508.1 273.9 520.6 284.9" stroke="#777" stroke-width="0.8" fill="none"/>
<path d="M490.6 328.9 V331.9 H502.6 M512.6 331.9 H524.6 V328.9" stroke="#444" stroke-width="0.9" fill="none"/>
<text x="507.6" y="335.9" font-size="10.5" text-anchor="middle" font-weight="bold" font-style="italic" fill="#111" style="font-family:Liberation Serif">3</text>
<path d="M555.3 300.2 H566.3" stroke="#111" stroke-width="1.1"/>
<path d="M555.3 295.1 H566.3" stroke="#111" stroke-width="1.1"/>
<path d="M555.3 289.9 H566.3" stroke="#111" stroke-width="1.1"/>
<path d="M567.9 300.2 H578.9" stroke="#111" stroke-width="1.1"/>
<path d="M567.9 295.1 H578.9" stroke="#111" stroke-width="1.1"/>
<path d="M567.9 289.9 H578.9" stroke="#111" stroke-width="1.1"/>
<path d="M580.5 300.2 H591.5" stroke="#111" stroke-width="1.1"/>
<path d="M580.5 295.1 H591.5" stroke="#111" stroke-width="1.1"/>
<path d="M593.2 300.2 H604.2" stroke="#111" stroke-width="1.1"/>
<path d="M593.2 295.1 H604.2" stroke="#111" stroke-width="1.1"/>
<ellipse cx="560.8" cy="286.9" rx="3.5" ry="2.6" transform="rotate(-22 560.8 286.9)" fill="#111"/>
<ellipse cx="573.4" cy="289.2" rx="3.5" ry="2.6" transform="rotate(-22 573.4 289.2)" fill="#111"/>
<ellipse cx="586.0" cy="292.1" rx="3.5" ry="2.6" transform="rotate(-22 586.0 292.1)" fill="#111"/>
<ellipse cx="598.7" cy="294.7" rx="3.5" ry="2.6" transform="rotate(-22 598.7 294.7)" fill="#111"/>
<path d="M557.8 286.9 V314.9" stroke="#111" stroke-width="1"/>
<path d="M570.4 289.2 V315.5" stroke="#111" stroke-width="1"/>
<path d="M583.0 292.1 V316.2" stroke="#111" stroke-width="1"/>
<path d="M595.7 294.7 V316.8" stroke="#111" stroke-width="1"/>
<path d="M557.8 313.5 L595.7 315.5 L595.7 317.9 L557.8 315.9 Z" fill="#111"/>
<path d="M557.8 309.9 L583.0 311.2 L583.0 313.6 L557.8 312.3 Z" fill="#111"/>
<circle cx="598.7" cy="288.4" r="0.9" fill="#111"/>
<path d="M560.4 279.9 Q572.9 273.9 585.4 284.9" stroke="#777" stroke-width="0.8" fill="none"/>
<path d="M555.4 328.9 V331.9 H567.4 M577.4 331.9 H589.4 V328.9" stroke="#444" stroke-width="0.9" fill="none"/>
<text x="572.4" y="335.9" font-size="10.5" text-anchor="middle" font-weight="bold" font-style="italic" fill="#111" style="font-family:Liberation Serif">3</text>
<path d="M421.5 300.2 H432.5" stroke="#111" stroke-width="1.1"/>
<path d="M421.5 295.1 H432.5" stroke="#111" stroke-width="1.1"/>
<path d="M421.5 289.9 H432.5" stroke="#111" stroke-width="1.1"/>
<path d="M421.5 284.7 H432.5" stroke="#111" stroke-width="1.1"/>
<path d="M421.5 279.5 H432.5" stroke="#111" stroke-width="1.1"/>
<path d="M449.2 300.2 H460.2" stroke="#111" stroke-width="1.1"/>
<path d="M449.2 295.1 H460.2" stroke="#111" stroke-width="1.1"/>
<path d="M449.2 289.9 H460.2" stroke="#111" stroke-width="1.1"/>
<path d="M449.2 284.7 H460.2" stroke="#111" stroke-width="1.1"/>
<ellipse cx="427.0" cy="275.9" rx="3.5" ry="2.6" transform="rotate(-22 427.0 275.9)" fill="#a01414"/>
<ellipse cx="454.7" cy="284.0" rx="3.5" ry="2.6" transform="rotate(-22 454.7 284.0)" fill="#111"/>
<path d="M424.2 275.9 V314.9" stroke="#111" stroke-width="1"/>
<path d="M451.6 283.9 V317.9" stroke="#111" stroke-width="1"/>
<path d="M424.2 313.3 L451.6 316.5 L451.6 318.9 L424.2 315.7 Z" fill="#111"/>
<circle cx="427.0" cy="269.4" r="0.9" fill="#111"/>
<circle cx="454.7" cy="277.9" r="0.9" fill="#111"/>
<path d="M624.5 300.2 H635.5" stroke="#111" stroke-width="1.1"/>
<path d="M624.5 295.1 H635.5" stroke="#111" stroke-width="1.1"/>
<path d="M624.5 289.9 H635.5" stroke="#111" stroke-width="1.1"/>
<path d="M634.6 300.2 H645.6" stroke="#111" stroke-width="1.1"/>
<path d="M634.6 295.1 H645.6" stroke="#111" stroke-width="1.1"/>
<path d="M634.6 289.9 H645.6" stroke="#111" stroke-width="1.1"/>
<path d="M644.7 300.2 H655.7" stroke="#111" stroke-width="1.1"/>
<path d="M644.7 295.1 H655.7" stroke="#111" stroke-width="1.1"/>
<path d="M654.8 300.2 H665.8" stroke="#111" stroke-width="1.1"/>
<path d="M654.8 295.1 H665.8" stroke="#111" stroke-width="1.1"/>
<path d="M664.9 300.2 H675.9" stroke="#111" stroke-width="1.1"/>
<path d="M675.0 300.2 H686.0" stroke="#111" stroke-width="1.1"/>
<ellipse cx="630.0" cy="287.3" rx="3.5" ry="2.6" transform="rotate(-22 630.0 287.3)" fill="#111"/>
<ellipse cx="640.1" cy="289.9" rx="3.5" ry="2.6" transform="rotate(-22 640.1 289.9)" fill="#111"/>
<ellipse cx="650.2" cy="292.5" rx="3.5" ry="2.6" transform="rotate(-22 650.2 292.5)" fill="#111"/>
<ellipse cx="660.3" cy="295.1" rx="3.5" ry="2.6" transform="rotate(-22 660.3 295.1)" fill="#111"/>
<ellipse cx="670.4" cy="297.7" rx="3.5" ry="2.6" transform="rotate(-22 670.4 297.7)" fill="#111"/>
<ellipse cx="680.5" cy="300.3" rx="3.5" ry="2.6" transform="rotate(-22 680.5 300.3)" fill="#111"/>
<ellipse cx="690.6" cy="302.9" rx="3.5" ry="2.6" transform="rotate(-22 690.6 302.9)" fill="#111"/>
<path d="M627.0 287.3 V310.9" stroke="#111" stroke-width="1"/>
<path d="M637.1 289.9 V312.9" stroke="#111" stroke-width="1"/>
<path d="M647.2 292.5 V315.0" stroke="#111" stroke-width="1"/>
<path d="M657.3 295.1 V317.0" stroke="#111" stroke-width="1"/>
<path d="M667.4 297.7 V319.1" stroke="#111" stroke-width="1"/>
<path d="M677.5 300.3 V321.1" stroke="#111" stroke-width="1"/>
<path d="M687.6 302.9 V323.2" stroke="#111" stroke-width="1"/>
<path d="M627.0 310.2 L688.8 322.7 L688.8 324.5 L627.0 312.0 Z" fill="#111"/>
<path d="M627.0 312.7 L688.8 325.2 L688.8 327.0 L627.0 314.5 Z" fill="#111"/>
<path d="M627.0 315.2 L688.8 327.7 L688.8 329.5 L627.0 317.0 Z" fill="#111"/>
<path d="M627.0 317.7 L688.8 330.2 L688.8 332.0 L627.0 319.5 Z" fill="#111"/>
<text x="658.0" y="337.9" font-size="10.5" text-anchor="middle" font-weight="bold" font-style="italic" fill="#111" style="font-family:Liberation Serif">7</text>
<path d="M630.0 280.9 Q660.0 270.9 690.0 298.9" stroke="#888" stroke-width="0.8" fill="none"/>
<path d="M714.9 300.2 H725.9" stroke="#111" stroke-width="1.1"/>
<path d="M724.6 300.2 H735.6" stroke="#111" stroke-width="1.1"/>
<path d="M734.3 300.2 H745.3" stroke="#111" stroke-width="1.1"/>
<path d="M734.3 295.1 H745.3" stroke="#111" stroke-width="1.1"/>
<path d="M744.0 300.2 H755.0" stroke="#111" stroke-width="1.1"/>
<path d="M744.0 295.1 H755.0" stroke="#111" stroke-width="1.1"/>
<path d="M753.7 300.2 H764.7" stroke="#111" stroke-width="1.1"/>
<path d="M753.7 295.1 H764.7" stroke="#111" stroke-width="1.1"/>
<path d="M753.7 289.9 H764.7" stroke="#111" stroke-width="1.1"/>
<path d="M763.4 300.2 H774.4" stroke="#111" stroke-width="1.1"/>
<path d="M763.4 295.1 H774.4" stroke="#111" stroke-width="1.1"/>
<path d="M763.4 289.9 H774.4" stroke="#111" stroke-width="1.1"/>
<ellipse cx="701.0" cy="305.4" rx="3.5" ry="2.6" transform="rotate(-22 701.0 305.4)" fill="#111"/>
<ellipse cx="710.7" cy="302.8" rx="3.5" ry="2.6" transform="rotate(-22 710.7 302.8)" fill="#111"/>
<ellipse cx="720.4" cy="300.3" rx="3.5" ry="2.6" transform="rotate(-22 720.4 300.3)" fill="#111"/>
<ellipse cx="730.1" cy="297.8" rx="3.5" ry="2.6" transform="rotate(-22 730.1 297.8)" fill="#111"/>
<ellipse cx="739.8" cy="295.2" rx="3.5" ry="2.6" transform="rotate(-22 739.8 295.2)" fill="#111"/>
<ellipse cx="749.5" cy="292.6" rx="3.5" ry="2.6" transform="rotate(-22 749.5 292.6)" fill="#111"/>
<ellipse cx="759.2" cy="290.1" rx="3.5" ry="2.6" transform="rotate(-22 759.2 290.1)" fill="#111"/>
<ellipse cx="768.9" cy="287.5" rx="3.5" ry="2.6" transform="rotate(-22 768.9 287.5)" fill="#111"/>
<path d="M698.0 305.4 V325.4" stroke="#111" stroke-width="1"/>
<path d="M707.7 302.8 V323.4" stroke="#111" stroke-width="1"/>
<path d="M717.4 300.3 V321.4" stroke="#111" stroke-width="1"/>
<path d="M727.1 297.8 V319.4" stroke="#111" stroke-width="1"/>
<path d="M736.8 295.2 V317.4" stroke="#111" stroke-width="1"/>
<path d="M746.5 292.6 V315.4" stroke="#111" stroke-width="1"/>
<path d="M756.2 290.1 V313.3" stroke="#111" stroke-width="1"/>
<path d="M765.9 287.5 V311.3" stroke="#111" stroke-width="1"/>
<path d="M698.0 324.5 L768.0 310.0 L768.0 311.8 L698.0 326.3 Z" fill="#111"/>
<path d="M698.0 327.0 L768.0 312.5 L768.0 314.3 L698.0 328.8 Z" fill="#111"/>
<path d="M698.0 329.5 L727.0 323.5 L727.0 325.3 L698.0 331.3 Z" fill="#111"/>
<path d="M746.0 319.6 L768.0 315.0 L768.0 316.8 L746.0 321.4 Z" fill="#111"/>
<path d="M698.0 332.0 L727.0 326.0 L727.0 327.8 L698.0 333.8 Z" fill="#111"/>
<path d="M746.0 322.1 L768.0 317.5 L768.0 319.3 L746.0 323.9 Z" fill="#111"/>
<path d="M700.0 298.9 Q734.0 270.9 768.0 280.9" stroke="#888" stroke-width="0.8" fill="none"/>
<path d="M785.9 300.2 H796.9" stroke="#111" stroke-width="1.1"/>
<path d="M785.9 295.1 H796.9" stroke="#111" stroke-width="1.1"/>
<path d="M785.9 289.9 H796.9" stroke="#111" stroke-width="1.1"/>
<path d="M785.9 284.7 H796.9" stroke="#111" stroke-width="1.1"/>
<ellipse cx="791.4" cy="283.9" rx="3.4" ry="2.4" transform="rotate(-22 791.4 283.9)" fill="none" stroke="#111" stroke-width="1.2"/>
<path d="M788.3 283.9 V315.9" stroke="#111" stroke-width="1"/>
<circle cx="799.0" cy="281.9" r="0.9" fill="#111"/>
<path d="M967.5 307.7 L971.6 312.5 C969.5 314.2 968.5 316.2 971.6 318.9 C969.5 318.2 966.2 318.9 969.6 323.2 C964.5 320.2 968.0 317.2 970.2 319.7 L966.6 315.4 C968.7 313.2 969.3 311.2 967.5 307.7 Z" fill="#111" stroke="#111" stroke-width="0.6"/>
<rect x="1108.8" y="310.6" width="6.4" height="2.8" fill="#111"/>
<rect x="1317.8" y="310.6" width="6.4" height="2.8" fill="#111"/>
<rect x="373.8" y="361.9" width="6.4" height="2.8" fill="#111"/>
<rect x="626.8" y="361.9" width="6.4" height="2.8" fill="#111"/>
<path d="M786.4 351.5 H797.4" stroke="#111" stroke-width="1.1"/>
<path d="M786.4 346.4 H797.4" stroke="#111" stroke-width="1.1"/>
<ellipse cx="791.9" cy="343.0" rx="3.5" ry="2.6" transform="rotate(-22 791.9 343.0)" fill="#111"/>
<path d="M788.9 343.0 V366.3" stroke="#111" stroke-width="1"/>
<path d="M813.8 351.5 H824.8" stroke="#111" stroke-width="1.1"/>
<ellipse cx="819.3" cy="348.3" rx="3.5" ry="2.6" transform="rotate(-22 819.3 348.3)" fill="#111"/>
<path d="M816.3 348.3 V368.7" stroke="#111" stroke-width="1"/>
<path d="M788.9 365.1 L816.3 367.5 L816.3 369.9 L788.9 367.5 Z" fill="#111"/>
<circle cx="791.9" cy="336.4" r="0.9" fill="#111"/>
<circle cx="819.3" cy="341.5" r="0.9" fill="#111"/>
<path d="M848.8 359.0 L852.9 363.8 C850.8 365.5 849.8 367.5 852.9 370.2 C850.8 369.5 847.5 370.2 850.9 374.5 C845.8 371.5 849.3 368.5 851.5 371.0 L847.9 366.7 C850.0 364.5 850.6 362.5 848.8 359.0 Z" fill="#111" stroke="#111" stroke-width="0.6"/>
<path d="M900.3 359.0 L904.4 363.8 C902.3 365.5 901.3 367.5 904.4 370.2 C902.3 369.5 899.0 370.2 902.4 374.5 C897.3 371.5 900.8 368.5 903.0 371.0 L899.4 366.7 C901.5 364.5 902.1 362.5 900.3 359.0 Z" fill="#111" stroke="#111" stroke-width="0.6"/>
<path d="M964.8 351.5 H975.8" stroke="#111" stroke-width="1.1"/>
<path d="M964.8 346.4 H975.8" stroke="#111" stroke-width="1.1"/>
<ellipse cx="970.3" cy="345.2" rx="3.5" ry="2.6" transform="rotate(-22 970.3 345.2)" fill="#111"/>
<path d="M967.3 345.2 V366.3" stroke="#111" stroke-width="1"/>
<path d="M992.2 351.5 H1003.2" stroke="#111" stroke-width="1.1"/>
<ellipse cx="997.7" cy="350.6" rx="3.5" ry="2.6" transform="rotate(-22 997.7 350.6)" fill="#111"/>
<path d="M994.7 350.6 V368.7" stroke="#111" stroke-width="1"/>
<path d="M967.3 365.1 L994.7 367.5 L994.7 369.9 L967.3 367.5 Z" fill="#111"/>
<path d="M960.7 340.5 V352.0 M963.3 340.0 V351.5" stroke="#111" stroke-width="0.9"/>
<path d="M959.2 344.8 L964.8 343.4 M959.2 348.6 L964.8 347.2" stroke="#111" stroke-width="1.6"/>
<circle cx="970.3" cy="339.0" r="0.9" fill="#111"/>
<circle cx="997.7" cy="344.0" r="0.9" fill="#111"/>
<path d="M1043.6 351.5 H1054.6" stroke="#111" stroke-width="1.1"/>
<ellipse cx="1049.1" cy="348.5" rx="3.5" ry="2.6" transform="rotate(-22 1049.1 348.5)" fill="#111"/>
<path d="M1046.1 348.5 V368.3" stroke="#111" stroke-width="1"/>
<ellipse cx="1077.0" cy="353.2" rx="3.5" ry="2.6" transform="rotate(-22 1077.0 353.2)" fill="#111"/>
<path d="M1074.0 353.2 V371.3" stroke="#111" stroke-width="1"/>
<path d="M1046.1 367.1 L1074.0 370.1 L1074.0 372.5 L1046.1 369.5 Z" fill="#111"/>
<circle cx="1049.1" cy="342.0" r="0.9" fill="#111"/>
<circle cx="1077.0" cy="347.0" r="0.9" fill="#111"/>
<path d="M1104.1 351.5 H1115.1" stroke="#111" stroke-width="1.1"/>
<path d="M1104.1 346.4 H1115.1" stroke="#111" stroke-width="1.1"/>
<ellipse cx="1109.6" cy="342.2" rx="3.5" ry="2.6" transform="rotate(-22 1109.6 342.2)" fill="#111"/>
<path d="M1106.6 342.2 V366.5" stroke="#111" stroke-width="1"/>
<path d="M1119.0 351.5 H1130.0" stroke="#111" stroke-width="1.1"/>
<ellipse cx="1124.5" cy="348.5" rx="3.5" ry="2.6" transform="rotate(-22 1124.5 348.5)" fill="#111"/>
<path d="M1121.5 348.5 V369.5" stroke="#111" stroke-width="1"/>
<path d="M1106.6 365.3 L1121.5 368.3 L1121.5 370.7 L1106.6 367.7 Z" fill="#111"/>
<circle cx="1109.6" cy="336.0" r="0.9" fill="#111"/>
<circle cx="1124.5" cy="342.0" r="0.9" fill="#111"/>
<path d="M1156.9 359.0 L1161.0 363.8 C1158.9 365.5 1157.9 367.5 1161.0 370.2 C1158.9 369.5 1155.6 370.2 1159.0 374.5 C1153.9 371.5 1157.4 368.5 1159.6 371.0 L1156.0 366.7 C1158.1 364.5 1158.7 362.5 1156.9 359.0 Z" fill="#111" stroke="#111" stroke-width="0.6"/>
<path d="M1211.5 351.5 H1222.5" stroke="#111" stroke-width="1.1"/>
<path d="M1211.5 346.4 H1222.5" stroke="#111" stroke-width="1.1"/>
<ellipse cx="1217.0" cy="346.0" rx="3.5" ry="2.6" transform="rotate(-22 1217.0 346.0)" fill="#111"/>
<path d="M1214.0 346.0 V367.5" stroke="#111" stroke-width="1"/>
<path d="M1238.7 351.5 H1249.7" stroke="#111" stroke-width="1.1"/>
<ellipse cx="1244.2" cy="350.7" rx="3.5" ry="2.6" transform="rotate(-22 1244.2 350.7)" fill="#111"/>
<path d="M1241.2 350.7 V370.0" stroke="#111" stroke-width="1"/>
<path d="M1214.0 366.3 L1241.2 368.8 L1241.2 371.2 L1214.0 368.7 Z" fill="#111"/>
<path d="M1208.1 341.5 V353.0 M1210.7 341.0 V352.5" stroke="#111" stroke-width="0.9"/>
<path d="M1206.6 345.8 L1212.2 344.4 M1206.6 349.6 L1212.2 348.2" stroke="#111" stroke-width="1.6"/>
<circle cx="1217.0" cy="339.5" r="0.9" fill="#111"/>
<circle cx="1244.2" cy="344.5" r="0.9" fill="#111"/>
<path d="M1270.4 351.5 H1281.4" stroke="#111" stroke-width="1.1"/>
<ellipse cx="1275.9" cy="348.5" rx="3.5" ry="2.6" transform="rotate(-22 1275.9 348.5)" fill="#111"/>
<path d="M1272.9 348.5 V366.0" stroke="#111" stroke-width="1"/>
<ellipse cx="1292.3" cy="352.6" rx="3.5" ry="2.6" transform="rotate(-22 1292.3 352.6)" fill="#111"/>
<path d="M1289.3 352.6 V371.0" stroke="#111" stroke-width="1"/>
<path d="M1272.9 364.8 L1289.3 369.8 L1289.3 372.2 L1272.9 367.2 Z" fill="#111"/>
<circle cx="1275.9" cy="342.0" r="0.9" fill="#111"/>
<circle cx="1292.3" cy="346.0" r="0.9" fill="#111"/>
<ellipse cx="1327.2" cy="364.3" rx="3.4" ry="2.4" transform="rotate(-22 1327.2 364.3)" fill="none" stroke="#111" stroke-width="1.2"/>
<path d="M1324.0 364.3 V381.7" stroke="#111" stroke-width="1"/>
<path d="M1317.7 358.8 V370.3 M1320.3 358.3 V369.8" stroke="#111" stroke-width="0.9"/>
<path d="M1316.2 363.1 L1321.8 361.7 M1316.2 366.9 L1321.8 365.5" stroke="#111" stroke-width="1.6"/>
<rect x="373.8" y="412.7" width="6.4" height="2.8" fill="#111"/>
<rect x="626.8" y="412.7" width="6.4" height="2.8" fill="#111"/>
<path d="M786.4 402.3 H797.4" stroke="#111" stroke-width="1.1"/>
<path d="M786.4 397.2 H797.4" stroke="#111" stroke-width="1.1"/>
<ellipse cx="791.9" cy="393.8" rx="3.5" ry="2.6" transform="rotate(-22 791.9 393.8)" fill="#111"/>
<path d="M788.9 393.8 V417.1" stroke="#111" stroke-width="1"/>
<path d="M813.8 402.3 H824.8" stroke="#111" stroke-width="1.1"/>
<ellipse cx="819.3" cy="399.1" rx="3.5" ry="2.6" transform="rotate(-22 819.3 399.1)" fill="#111"/>
<path d="M816.3 399.1 V419.5" stroke="#111" stroke-width="1"/>
<path d="M788.9 415.9 L816.3 418.3 L816.3 420.7 L788.9 418.3 Z" fill="#111"/>
<circle cx="791.9" cy="387.2" r="0.9" fill="#111"/>
<circle cx="819.3" cy="392.3" r="0.9" fill="#111"/>
<path d="M848.8 409.8 L852.9 414.6 C850.8 416.3 849.8 418.3 852.9 421.0 C850.8 420.3 847.5 421.0 850.9 425.3 C845.8 422.3 849.3 419.3 851.5 421.8 L847.9 417.5 C850.0 415.3 850.6 413.3 848.8 409.8 Z" fill="#111" stroke="#111" stroke-width="0.6"/>
<path d="M900.3 409.8 L904.4 414.6 C902.3 416.3 901.3 418.3 904.4 421.0 C902.3 420.3 899.0 421.0 902.4 425.3 C897.3 422.3 900.8 419.3 903.0 421.8 L899.4 417.5 C901.5 415.3 902.1 413.3 900.3 409.8 Z" fill="#111" stroke="#111" stroke-width="0.6"/>
<path d="M964.8 402.3 H975.8" stroke="#111" stroke-width="1.1"/>
<path d="M964.8 397.2 H975.8" stroke="#111" stroke-width="1.1"/>
<ellipse cx="970.3" cy="396.0" rx="3.5" ry="2.6" transform="rotate(-22 970.3 396.0)" fill="#111"/>
<path d="M967.3 396.0 V417.1" stroke="#111" stroke-width="1"/>
<path d="M992.2 402.3 H1003.2" stroke="#111" stroke-width="1.1"/>
<ellipse cx="997.7" cy="401.4" rx="3.5" ry="2.6" transform="rotate(-22 997.7 401.4)" fill="#111"/>
<path d="M994.7 401.4 V419.5" stroke="#111" stroke-width="1"/>
<path d="M967.3 415.9 L994.7 418.3 L994.7 420.7 L967.3 418.3 Z" fill="#111"/>
<path d="M960.7 391.3 V402.8 M963.3 390.8 V402.3" stroke="#111" stroke-width="0.9"/>
<path d="M959.2 395.6 L964.8 394.2 M959.2 399.4 L964.8 398.0" stroke="#111" stroke-width="1.6"/>
<circle cx="970.3" cy="389.8" r="0.9" fill="#111"/>
<circle cx="997.7" cy="394.8" r="0.9" fill="#111"/>
<path d="M1043.6 402.3 H1054.6" stroke="#111" stroke-width="1.1"/>
<ellipse cx="1049.1" cy="399.3" rx="3.5" ry="2.6" transform="rotate(-22 1049.1 399.3)" fill="#111"/>
<path d="M1046.1 399.3 V419.1" stroke="#111" stroke-width="1"/>
<ellipse cx="1077.0" cy="404.0" rx="3.5" ry="2.6" transform="rotate(-22 1077.0 404.0)" fill="#111"/>
<path d="M1074.0 404.0 V422.1" stroke="#111" stroke-width="1"/>
<path d="M1046.1 417.9 L1074.0 420.9 L1074.0 423.3 L1046.1 420.3 Z" fill="#111"/>
<circle cx="1049.1" cy="392.8" r="0.9" fill="#111"/>
<circle cx="1077.0" cy="397.8" r="0.9" fill="#111"/>
<path d="M1104.1 402.3 H1115.1" stroke="#111" stroke-width="1.1"/>
<path d="M1104.1 397.2 H1115.1" stroke="#111" stroke-width="1.1"/>
<ellipse cx="1109.6" cy="393.0" rx="3.5" ry="2.6" transform="rotate(-22 1109.6 393.0)" fill="#111"/>
<path d="M1106.6 393.0 V417.3" stroke="#111" stroke-width="1"/>
<path d="M1119.0 402.3 H1130.0" stroke="#111" stroke-width="1.1"/>
<ellipse cx="1124.5" cy="399.3" rx="3.5" ry="2.6" transform="rotate(-22 1124.5 399.3)" fill="#111"/>
<path d="M1121.5 399.3 V420.3" stroke="#111" stroke-width="1"/>
<path d="M1106.6 416.1 L1121.5 419.1 L1121.5 421.5 L1106.6 418.5 Z" fill="#111"/>
<circle cx="1109.6" cy="386.8" r="0.9" fill="#111"/>
<circle cx="1124.5" cy="392.8" r="0.9" fill="#111"/>
<path d="M1156.9 409.8 L1161.0 414.6 C1158.9 416.3 1157.9 418.3 1161.0 421.0 C1158.9 420.3 1155.6 421.0 1159.0 425.3 C1153.9 422.3 1157.4 419.3 1159.6 421.8 L1156.0 417.5 C1158.1 415.3 1158.7 413.3 1156.9 409.8 Z" fill="#111" stroke="#111" stroke-width="0.6"/>
<path d="M1211.5 402.3 H1222.5" stroke="#111" stroke-width="1.1"/>
<path d="M1211.5 397.2 H1222.5" stroke="#111" stroke-width="1.1"/>
<ellipse cx="1217.0" cy="396.8" rx="3.5" ry="2.6" transform="rotate(-22 1217.0 396.8)" fill="#111"/>
<path d="M1214.0 396.8 V418.3" stroke="#111" stroke-width="1"/>
<path d="M1238.7 402.3 H1249.7" stroke="#111" stroke-width="1.1"/>
<ellipse cx="1244.2" cy="401.5" rx="3.5" ry="2.6" transform="rotate(-22 1244.2 401.5)" fill="#111"/>
<path d="M1241.2 401.5 V420.8" stroke="#111" stroke-width="1"/>
<path d="M1214.0 417.1 L1241.2 419.6 L1241.2 422.0 L1214.0 419.5 Z" fill="#111"/>
<path d="M1208.1 392.3 V403.8 M1210.7 391.8 V403.3" stroke="#111" stroke-width="0.9"/>
<path d="M1206.6 396.6 L1212.2 395.2 M1206.6 400.4 L1212.2 399.0" stroke="#111" stroke-width="1.6"/>
<circle cx="1217.0" cy="390.3" r="0.9" fill="#111"/>
<circle cx="1244.2" cy="395.3" r="0.9" fill="#111"/>
<path d="M1270.4 402.3 H1281.4" stroke="#111" stroke-width="1.1"/>
<ellipse cx="1275.9" cy="399.3" rx="3.5" ry="2.6" transform="rotate(-22 1275.9 399.3)" fill="#111"/>
<path d="M1272.9 399.3 V416.8" stroke="#111" stroke-width="1"/>
<ellipse cx="1292.3" cy="403.4" rx="3.5" ry="2.6" transform="rotate(-22 1292.3 403.4)" fill="#111"/>
<path d="M1289.3 403.4 V421.8" stroke="#111" stroke-width="1"/>
<path d="M1272.9 415.6 L1289.3 420.6 L1289.3 423.0 L1272.9 418.0 Z" fill="#111"/>
<circle cx="1275.9" cy="392.8" r="0.9" fill="#111"/>
<circle cx="1292.3" cy="396.8" r="0.9" fill="#111"/>
<ellipse cx="1327.2" cy="415.1" rx="3.4" ry="2.4" transform="rotate(-22 1327.2 415.1)" fill="none" stroke="#111" stroke-width="1.2"/>
<path d="M1324.0 415.1 V432.5" stroke="#111" stroke-width="1"/>
<path d="M1317.7 409.6 V421.1 M1320.3 409.1 V420.6" stroke="#111" stroke-width="0.9"/>
<path d="M1316.2 413.9 L1321.8 412.5 M1316.2 417.7 L1321.8 416.3" stroke="#111" stroke-width="1.6"/>
<rect x="373.8" y="463.2" width="6.4" height="2.8" fill="#111"/>
<rect x="626.8" y="463.2" width="6.4" height="2.8" fill="#111"/>
<circle cx="789.4" cy="466.1" r="1.5" fill="#111"/><path d="M788.2 466.8 Q791.5 467.5 793.6 465.3 L790.4 473.8" stroke="#111" stroke-width="1.1" fill="none"/>
<path d="M813.7 452.8 H824.7" stroke="#111" stroke-width="1.1"/>
<ellipse cx="819.2" cy="450.0" rx="3.5" ry="2.6" transform="rotate(-22 819.2 450.0)" fill="#111"/>
<path d="M816.2 450.0 V472.5" stroke="#111" stroke-width="1"/>
<path d="M826.5 452.8 H837.5" stroke="#111" stroke-width="1.1"/>
<ellipse cx="832.0" cy="451.6" rx="3.5" ry="2.6" transform="rotate(-22 832.0 451.6)" fill="#111"/>
<path d="M829.0 451.6 V474.4" stroke="#111" stroke-width="1"/>
<ellipse cx="843.0" cy="455.0" rx="3.5" ry="2.6" transform="rotate(-22 843.0 455.0)" fill="#111"/>
<path d="M840.0 455.0 V476.0" stroke="#111" stroke-width="1"/>
<path d="M816.2 471.3 L840.0 474.8 L840.0 477.2 L816.2 473.7 Z" fill="#111"/>
<path d="M816.2 467.7 L840.0 471.2 L840.0 473.6 L816.2 470.1 Z" fill="#111"/>
<text x="827.4" y="488.0" font-size="10.5" text-anchor="middle" font-weight="bold" font-style="italic" fill="#111" style="font-family:Liberation Serif">3</text>
<circle cx="848.6" cy="466.1" r="1.5" fill="#111"/><path d="M847.4 466.8 Q850.7 467.5 852.8 465.3 L849.6 473.8" stroke="#111" stroke-width="1.1" fill="none"/>
<path d="M862.0 452.8 H873.0" stroke="#111" stroke-width="1.1"/>
<ellipse cx="867.5" cy="451.6" rx="3.5" ry="2.6" transform="rotate(-22 867.5 451.6)" fill="#111"/>
<path d="M864.5 451.6 V472.0" stroke="#111" stroke-width="1"/>
<ellipse cx="877.6" cy="455.0" rx="3.5" ry="2.6" transform="rotate(-22 877.6 455.0)" fill="#111"/>
<path d="M874.6 455.0 V472.8" stroke="#111" stroke-width="1"/>
<ellipse cx="893.0" cy="457.6" rx="3.5" ry="2.6" transform="rotate(-22 893.0 457.6)" fill="#111"/>
<path d="M890.0 457.6 V474.0" stroke="#111" stroke-width="1"/>
<path d="M864.5 470.8 L890.0 472.8 L890.0 475.2 L864.5 473.2 Z" fill="#111"/>
<path d="M864.5 467.2 L890.0 469.2 L890.0 471.6 L864.5 469.6 Z" fill="#111"/>
<path d="M884.5 452.5 V464.0 M887.1 452.0 V463.5" stroke="#111" stroke-width="0.9"/>
<path d="M883.0 456.8 L888.6 455.4 M883.0 460.6 L888.6 459.2" stroke="#111" stroke-width="1.6"/>
<text x="877.0" y="488.0" font-size="10.5" text-anchor="middle" font-weight="bold" font-style="italic" fill="#111" style="font-family:Liberation Serif">3</text>
<ellipse cx="902.7" cy="460.0" rx="3.5" ry="2.6" transform="rotate(-22 902.7 460.0)" fill="#111"/>
<path d="M899.7 460.0 V482.0" stroke="#111" stroke-width="1"/>
<ellipse cx="911.3" cy="462.6" rx="3.5" ry="2.6" transform="rotate(-22 911.3 462.6)" fill="#111"/>
<path d="M908.3 462.6 V482.1" stroke="#111" stroke-width="1"/>
<ellipse cx="926.8" cy="465.5" rx="3.5" ry="2.6" transform="rotate(-22 926.8 465.5)" fill="#111"/>
<path d="M923.8 465.5 V482.4" stroke="#111" stroke-width="1"/>
<ellipse cx="936.3" cy="463.0" rx="3.5" ry="2.6" transform="rotate(-22 936.3 463.0)" fill="#111"/>
<path d="M933.3 463.0 V482.5" stroke="#111" stroke-width="1"/>
<path d="M899.7 480.8 L933.3 481.3 L933.3 483.7 L899.7 483.2 Z" fill="#111"/>
<path d="M899.7 477.2 L933.3 477.7 L933.3 480.1 L899.7 479.6 Z" fill="#111"/>
<path d="M918.2 460.5 V472.0 M920.8 460.0 V471.5" stroke="#111" stroke-width="0.9"/>
<path d="M916.7 464.8 L922.3 463.4 M916.7 468.6 L922.3 467.2" stroke="#111" stroke-width="1.6"/>
<circle cx="936.3" cy="455.0" r="0.9" fill="#111"/>
<path d="M899.0 487.0 V490.0 H910.5 M920.5 490.0 H932.0 V487.0" stroke="#444" stroke-width="0.9" fill="none"/>
<text x="915.5" y="494.0" font-size="10.5" text-anchor="middle" font-weight="bold" font-style="italic" fill="#111" style="font-family:Liberation Serif">3</text>
<path d="M968.1 460.3 L972.2 465.1 C970.1 466.8 969.1 468.8 972.2 471.5 C970.1 470.8 966.8 471.5 970.2 475.8 C965.1 472.8 968.6 469.8 970.8 472.3 L967.2 468.0 C969.3 465.8 969.9 463.8 968.1 460.3 Z" fill="#111" stroke="#111" stroke-width="0.6"/>
<circle cx="1046.9" cy="466.1" r="1.5" fill="#111"/><path d="M1045.7 466.8 Q1049.0 467.5 1051.1 465.3 L1047.9 473.8" stroke="#111" stroke-width="1.1" fill="none"/>
<path d="M1071.5 452.8 H1082.5" stroke="#111" stroke-width="1.1"/>
<ellipse cx="1077.0" cy="449.8" rx="3.5" ry="2.6" transform="rotate(-22 1077.0 449.8)" fill="#111"/>
<path d="M1074.0 449.8 V472.5" stroke="#111" stroke-width="1"/>
<path d="M1083.5 452.8 H1094.5" stroke="#111" stroke-width="1.1"/>
<ellipse cx="1089.0" cy="452.0" rx="3.5" ry="2.6" transform="rotate(-22 1089.0 452.0)" fill="#111"/>
<path d="M1086.0 452.0 V474.4" stroke="#111" stroke-width="1"/>
<ellipse cx="1099.2" cy="455.0" rx="3.5" ry="2.6" transform="rotate(-22 1099.2 455.0)" fill="#111"/>
<path d="M1096.2 455.0 V476.0" stroke="#111" stroke-width="1"/>
<path d="M1074.0 471.3 L1096.2 474.8 L1096.2 477.2 L1074.0 473.7 Z" fill="#111"/>
<path d="M1074.0 467.7 L1096.2 471.2 L1096.2 473.6 L1074.0 470.1 Z" fill="#111"/>
<text x="1084.3" y="488.0" font-size="10.5" text-anchor="middle" font-weight="bold" font-style="italic" fill="#111" style="font-family:Liberation Serif">3</text>
<circle cx="1106.4" cy="466.1" r="1.5" fill="#111"/><path d="M1105.2 466.8 Q1108.5 467.5 1110.6 465.3 L1107.4 473.8" stroke="#111" stroke-width="1.1" fill="none"/>
<path d="M1119.0 452.8 H1130.0" stroke="#111" stroke-width="1.1"/>
<ellipse cx="1124.5" cy="452.0" rx="3.5" ry="2.6" transform="rotate(-22 1124.5 452.0)" fill="#111"/>
<path d="M1121.5 452.0 V472.0" stroke="#111" stroke-width="1"/>
<ellipse cx="1134.6" cy="455.0" rx="3.5" ry="2.6" transform="rotate(-22 1134.6 455.0)" fill="#111"/>
<path d="M1131.6 455.0 V472.6" stroke="#111" stroke-width="1"/>
<ellipse cx="1149.2" cy="458.0" rx="3.5" ry="2.6" transform="rotate(-22 1149.2 458.0)" fill="#111"/>
<path d="M1146.2 458.0 V473.5" stroke="#111" stroke-width="1"/>
<path d="M1121.5 470.8 L1146.2 472.3 L1146.2 474.7 L1121.5 473.2 Z" fill="#111"/>
<path d="M1121.5 467.2 L1146.2 468.7 L1146.2 471.1 L1121.5 469.6 Z" fill="#111"/>
<path d="M1142.2 452.5 V464.0 M1144.8 452.0 V463.5" stroke="#111" stroke-width="0.9"/>
<path d="M1140.7 456.8 L1146.3 455.4 M1140.7 460.6 L1146.3 459.2" stroke="#111" stroke-width="1.6"/>
<text x="1134.0" y="488.0" font-size="10.5" text-anchor="middle" font-weight="bold" font-style="italic" fill="#111" style="font-family:Liberation Serif">3</text>
<ellipse cx="1159.3" cy="454.6" rx="3.5" ry="2.6" transform="rotate(-22 1159.3 454.6)" fill="#f08a1a"/>
<path d="M1156.3 454.6 V474.0" stroke="#111" stroke-width="1"/>
<ellipse cx="1175.2" cy="463.1" rx="3.5" ry="2.6" transform="rotate(-22 1175.2 463.1)" fill="#f08a1a"/>
<path d="M1172.2 463.1 V479.0" stroke="#111" stroke-width="1"/>
<path d="M1156.3 472.8 L1172.2 477.8 L1172.2 480.2 L1156.3 475.2 Z" fill="#111"/>
<circle cx="1159.3" cy="447.0" r="0.9" fill="#f08a1a"/>
<circle cx="1175.2" cy="455.0" r="0.9" fill="#f08a1a"/>
<circle cx="1214.1" cy="466.1" r="1.5" fill="#111"/><path d="M1212.9 466.8 Q1216.2 467.5 1218.3 465.3 L1215.1 473.8" stroke="#111" stroke-width="1.1" fill="none"/>
<path d="M1238.7 452.8 H1249.7" stroke="#111" stroke-width="1.1"/>
<ellipse cx="1244.2" cy="449.8" rx="3.5" ry="2.6" transform="rotate(-22 1244.2 449.8)" fill="#111"/>
<path d="M1241.2 449.8 V472.5" stroke="#111" stroke-width="1"/>
<path d="M1250.4 452.8 H1261.4" stroke="#111" stroke-width="1.1"/>
<ellipse cx="1255.9" cy="452.0" rx="3.5" ry="2.6" transform="rotate(-22 1255.9 452.0)" fill="#111"/>
<path d="M1252.9 452.0 V474.3" stroke="#111" stroke-width="1"/>
<ellipse cx="1267.0" cy="455.0" rx="3.5" ry="2.6" transform="rotate(-22 1267.0 455.0)" fill="#111"/>
<path d="M1264.0 455.0 V476.0" stroke="#111" stroke-width="1"/>
<path d="M1241.2 471.3 L1264.0 474.8 L1264.0 477.2 L1241.2 473.7 Z" fill="#111"/>
<path d="M1241.2 467.7 L1264.0 471.2 L1264.0 473.6 L1241.2 470.1 Z" fill="#111"/>
<text x="1252.0" y="488.0" font-size="10.5" text-anchor="middle" font-weight="bold" font-style="italic" fill="#111" style="font-family:Liberation Serif">3</text>
<circle cx="1273.4" cy="466.1" r="1.5" fill="#111"/><path d="M1272.2 466.8 Q1275.5 467.5 1277.6 465.3 L1274.4 473.8" stroke="#111" stroke-width="1.1" fill="none"/>
<path d="M1286.2 452.8 H1297.2" stroke="#111" stroke-width="1.1"/>
<ellipse cx="1291.7" cy="452.0" rx="3.5" ry="2.6" transform="rotate(-22 1291.7 452.0)" fill="#111"/>
<path d="M1288.7 452.0 V472.0" stroke="#111" stroke-width="1"/>
<ellipse cx="1301.8" cy="455.0" rx="3.5" ry="2.6" transform="rotate(-22 1301.8 455.0)" fill="#111"/>
<path d="M1298.8 455.0 V472.6" stroke="#111" stroke-width="1"/>
<ellipse cx="1317.7" cy="458.0" rx="3.5" ry="2.6" transform="rotate(-22 1317.7 458.0)" fill="#111"/>
<path d="M1314.7 458.0 V473.5" stroke="#111" stroke-width="1"/>
<path d="M1288.7 470.8 L1314.7 472.3 L1314.7 474.7 L1288.7 473.2 Z" fill="#111"/>
<path d="M1288.7 467.2 L1314.7 468.7 L1314.7 471.1 L1288.7 469.6 Z" fill="#111"/>
<path d="M1309.4 452.5 V464.0 M1312.0 452.0 V463.5" stroke="#111" stroke-width="0.9"/>
<path d="M1307.9 456.8 L1313.5 455.4 M1307.9 460.6 L1313.5 459.2" stroke="#111" stroke-width="1.6"/>
<text x="1301.0" y="488.0" font-size="10.5" text-anchor="middle" font-weight="bold" font-style="italic" fill="#111" style="font-family:Liberation Serif">3</text>
<ellipse cx="1326.5" cy="456.2" rx="3.5" ry="2.6" transform="rotate(-22 1326.5 456.2)" fill="#111"/>
<path d="M1323.5 456.2 V477.0" stroke="#111" stroke-width="1"/>
<ellipse cx="1336.7" cy="458.5" rx="3.5" ry="2.6" transform="rotate(-22 1336.7 458.5)" fill="#111"/>
<path d="M1333.7 458.5 V479.2" stroke="#111" stroke-width="1"/>
<ellipse cx="1346.2" cy="456.2" rx="3.5" ry="2.6" transform="rotate(-22 1346.2 456.2)" fill="#111"/>
<path d="M1343.2 456.2 V481.2" stroke="#111" stroke-width="1"/>
<ellipse cx="1354.7" cy="465.7" rx="3.5" ry="2.6" transform="rotate(-22 1354.7 465.7)" fill="#111"/>
<path d="M1351.7 465.7 V483.0" stroke="#111" stroke-width="1"/>
<path d="M1323.5 475.8 L1351.7 481.8 L1351.7 484.2 L1323.5 478.2 Z" fill="#111"/>
<path d="M1323.5 472.2 L1351.7 478.2 L1351.7 480.6 L1323.5 474.6 Z" fill="#111"/>
<path d="M1346.4 460.5 V472.0 M1349.0 460.0 V471.5" stroke="#111" stroke-width="0.9"/>
<path d="M1344.9 464.8 L1350.5 463.4 M1344.9 468.6 L1350.5 467.2" stroke="#111" stroke-width="1.6"/>
<circle cx="1354.7" cy="458.0" r="0.9" fill="#111"/>
<path d="M1323.0 487.0 V490.0 H1331.5 M1341.5 490.0 H1350.0 V487.0" stroke="#444" stroke-width="0.9" fill="none"/>
<text x="1336.5" y="494.0" font-size="10.5" text-anchor="middle" font-weight="bold" font-style="italic" fill="#111" style="font-family:Liberation Serif">3</text>
<path d="M1385.8 460.3 L1389.9 465.1 C1387.8 466.8 1386.8 468.8 1389.9 471.5 C1387.8 470.8 1384.5 471.5 1387.9 475.8 C1382.8 472.8 1386.3 469.8 1388.5 472.3 L1384.9 468.0 C1387.0 465.8 1387.6 463.8 1385.8 460.3 Z" fill="#111" stroke="#111" stroke-width="0.6"/>
<rect x="373.8" y="513.4" width="6.4" height="2.8" fill="#111"/>
<rect x="626.8" y="513.4" width="6.4" height="2.8" fill="#111"/>
<circle cx="789.4" cy="516.3" r="1.5" fill="#111"/><path d="M788.2 517.0 Q791.5 517.7 793.6 515.5 L790.4 524.0" stroke="#111" stroke-width="1.1" fill="none"/>
<path d="M813.7 503.0 H824.7" stroke="#111" stroke-width="1.1"/>
<ellipse cx="819.2" cy="500.2" rx="3.5" ry="2.6" transform="rotate(-22 819.2 500.2)" fill="#111"/>
<path d="M816.2 500.2 V522.7" stroke="#111" stroke-width="1"/>
<path d="M826.5 503.0 H837.5" stroke="#111" stroke-width="1.1"/>
<ellipse cx="832.0" cy="501.8" rx="3.5" ry="2.6" transform="rotate(-22 832.0 501.8)" fill="#111"/>
<path d="M829.0 501.8 V524.6" stroke="#111" stroke-width="1"/>
<ellipse cx="843.0" cy="505.2" rx="3.5" ry="2.6" transform="rotate(-22 843.0 505.2)" fill="#111"/>
<path d="M840.0 505.2 V526.2" stroke="#111" stroke-width="1"/>
<path d="M816.2 521.5 L840.0 525.0 L840.0 527.4 L816.2 523.9 Z" fill="#111"/>
<path d="M816.2 517.9 L840.0 521.4 L840.0 523.8 L816.2 520.3 Z" fill="#111"/>
<text x="827.4" y="538.2" font-size="10.5" text-anchor="middle" font-weight="bold" font-style="italic" fill="#111" style="font-family:Liberation Serif">3</text>
<circle cx="848.6" cy="516.3" r="1.5" fill="#111"/><path d="M847.4 517.0 Q850.7 517.7 852.8 515.5 L849.6 524.0" stroke="#111" stroke-width="1.1" fill="none"/>
<path d="M862.0 503.0 H873.0" stroke="#111" stroke-width="1.1"/>
<ellipse cx="867.5" cy="501.8" rx="3.5" ry="2.6" transform="rotate(-22 867.5 501.8)" fill="#111"/>
<path d="M864.5 501.8 V522.2" stroke="#111" stroke-width="1"/>
<ellipse cx="877.6" cy="505.2" rx="3.5" ry="2.6" transform="rotate(-22 877.6 505.2)" fill="#111"/>
<path d="M874.6 505.2 V523.0" stroke="#111" stroke-width="1"/>
<ellipse cx="893.0" cy="507.8" rx="3.5" ry="2.6" transform="rotate(-22 893.0 507.8)" fill="#111"/>
<path d="M890.0 507.8 V524.2" stroke="#111" stroke-width="1"/>
<path d="M864.5 521.0 L890.0 523.0 L890.0 525.4 L864.5 523.4 Z" fill="#111"/>
<path d="M864.5 517.4 L890.0 519.4 L890.0 521.8 L864.5 519.8 Z" fill="#111"/>
<path d="M884.5 502.7 V514.2 M887.1 502.2 V513.7" stroke="#111" stroke-width="0.9"/>
<path d="M883.0 507.0 L888.6 505.6 M883.0 510.8 L888.6 509.4" stroke="#111" stroke-width="1.6"/>
<text x="877.0" y="538.2" font-size="10.5" text-anchor="middle" font-weight="bold" font-style="italic" fill="#111" style="font-family:Liberation Serif">3</text>
<ellipse cx="902.7" cy="510.2" rx="3.5" ry="2.6" transform="rotate(-22 902.7 510.2)" fill="#111"/>
<path d="M899.7 510.2 V532.2" stroke="#111" stroke-width="1"/>
<ellipse cx="911.3" cy="512.8" rx="3.5" ry="2.6" transform="rotate(-22 911.3 512.8)" fill="#111"/>
<path d="M908.3 512.8 V532.3" stroke="#111" stroke-width="1"/>
<ellipse cx="926.8" cy="515.7" rx="3.5" ry="2.6" transform="rotate(-22 926.8 515.7)" fill="#111"/>
<path d="M923.8 515.7 V532.6" stroke="#111" stroke-width="1"/>
<ellipse cx="936.3" cy="513.2" rx="3.5" ry="2.6" transform="rotate(-22 936.3 513.2)" fill="#111"/>
<path d="M933.3 513.2 V532.7" stroke="#111" stroke-width="1"/>
<path d="M899.7 531.0 L933.3 531.5 L933.3 533.9 L899.7 533.4 Z" fill="#111"/>
<path d="M899.7 527.4 L933.3 527.9 L933.3 530.3 L899.7 529.8 Z" fill="#111"/>
<path d="M918.2 510.7 V522.2 M920.8 510.2 V521.7" stroke="#111" stroke-width="0.9"/>
<path d="M916.7 515.0 L922.3 513.6 M916.7 518.8 L922.3 517.4" stroke="#111" stroke-width="1.6"/>
<circle cx="936.3" cy="505.2" r="0.9" fill="#111"/>
<path d="M899.0 537.2 V540.2 H910.5 M920.5 540.2 H932.0 V537.2" stroke="#444" stroke-width="0.9" fill="none"/>
<text x="915.5" y="544.2" font-size="10.5" text-anchor="middle" font-weight="bold" font-style="italic" fill="#111" style="font-family:Liberation Serif">3</text>
<path d="M968.1 510.5 L972.2 515.3 C970.1 517.0 969.1 519.0 972.2 521.7 C970.1 521.0 966.8 521.7 970.2 526.0 C965.1 523.0 968.6 520.0 970.8 522.5 L967.2 518.2 C969.3 516.0 969.9 514.0 968.1 510.5 Z" fill="#111" stroke="#111" stroke-width="0.6"/>
<circle cx="1046.9" cy="516.3" r="1.5" fill="#111"/><path d="M1045.7 517.0 Q1049.0 517.7 1051.1 515.5 L1047.9 524.0" stroke="#111" stroke-width="1.1" fill="none"/>
<path d="M1071.5 503.0 H1082.5" stroke="#111" stroke-width="1.1"/>
<ellipse cx="1077.0" cy="500.0" rx="3.5" ry="2.6" transform="rotate(-22 1077.0 500.0)" fill="#111"/>
<path d="M1074.0 500.0 V522.7" stroke="#111" stroke-width="1"/>
<path d="M1083.5 503.0 H1094.5" stroke="#111" stroke-width="1.1"/>
<ellipse cx="1089.0" cy="502.2" rx="3.5" ry="2.6" transform="rotate(-22 1089.0 502.2)" fill="#111"/>
<path d="M1086.0 502.2 V524.6" stroke="#111" stroke-width="1"/>
<ellipse cx="1099.2" cy="505.2" rx="3.5" ry="2.6" transform="rotate(-22 1099.2 505.2)" fill="#111"/>
<path d="M1096.2 505.2 V526.2" stroke="#111" stroke-width="1"/>
<path d="M1074.0 521.5 L1096.2 525.0 L1096.2 527.4 L1074.0 523.9 Z" fill="#111"/>
<path d="M1074.0 517.9 L1096.2 521.4 L1096.2 523.8 L1074.0 520.3 Z" fill="#111"/>
<text x="1084.3" y="538.2" font-size="10.5" text-anchor="middle" font-weight="bold" font-style="italic" fill="#111" style="font-family:Liberation Serif">3</text>
<circle cx="1106.4" cy="516.3" r="1.5" fill="#111"/><path d="M1105.2 517.0 Q1108.5 517.7 1110.6 515.5 L1107.4 524.0" stroke="#111" stroke-width="1.1" fill="none"/>
<path d="M1119.0 503.0 H1130.0" stroke="#111" stroke-width="1.1"/>
<ellipse cx="1124.5" cy="502.2" rx="3.5" ry="2.6" transform="rotate(-22 1124.5 502.2)" fill="#111"/>
<path d="M1121.5 502.2 V522.2" stroke="#111" stroke-width="1"/>
<ellipse cx="1134.6" cy="505.2" rx="3.5" ry="2.6" transform="rotate(-22 1134.6 505.2)" fill="#111"/>
<path d="M1131.6 505.2 V522.8" stroke="#111" stroke-width="1"/>
<ellipse cx="1149.2" cy="508.2" rx="3.5" ry="2.6" transform="rotate(-22 1149.2 508.2)" fill="#111"/>
<path d="M1146.2 508.2 V523.7" stroke="#111" stroke-width="1"/>
<path d="M1121.5 521.0 L1146.2 522.5 L1146.2 524.9 L1121.5 523.4 Z" fill="#111"/>
<path d="M1121.5 517.4 L1146.2 518.9 L1146.2 521.3 L1121.5 519.8 Z" fill="#111"/>
<path d="M1142.2 502.7 V514.2 M1144.8 502.2 V513.7" stroke="#111" stroke-width="0.9"/>
<path d="M1140.7 507.0 L1146.3 505.6 M1140.7 510.8 L1146.3 509.4" stroke="#111" stroke-width="1.6"/>
<text x="1134.0" y="538.2" font-size="10.5" text-anchor="middle" font-weight="bold" font-style="italic" fill="#111" style="font-family:Liberation Serif">3</text>
<ellipse cx="1159.3" cy="504.8" rx="3.5" ry="2.6" transform="rotate(-22 1159.3 504.8)" fill="#111"/>
<path d="M1156.3 504.8 V524.2" stroke="#111" stroke-width="1"/>
<ellipse cx="1175.2" cy="513.3" rx="3.5" ry="2.6" transform="rotate(-22 1175.2 513.3)" fill="#111"/>
<path d="M1172.2 513.3 V529.2" stroke="#111" stroke-width="1"/>
<path d="M1156.3 523.0 L1172.2 528.0 L1172.2 530.4 L1156.3 525.4 Z" fill="#111"/>
<circle cx="1159.3" cy="497.2" r="0.9" fill="#111"/>
<circle cx="1175.2" cy="505.2" r="0.9" fill="#111"/>
<circle cx="1214.1" cy="516.3" r="1.5" fill="#111"/><path d="M1212.9 517.0 Q1216.2 517.7 1218.3 515.5 L1215.1 524.0" stroke="#111" stroke-width="1.1" fill="none"/>
<path d="M1238.7 503.0 H1249.7" stroke="#111" stroke-width="1.1"/>
<ellipse cx="1244.2" cy="500.0" rx="3.5" ry="2.6" transform="rotate(-22 1244.2 500.0)" fill="#111"/>
<path d="M1241.2 500.0 V522.7" stroke="#111" stroke-width="1"/>
<path d="M1250.4 503.0 H1261.4" stroke="#111" stroke-width="1.1"/>
<ellipse cx="1255.9" cy="502.2" rx="3.5" ry="2.6" transform="rotate(-22 1255.9 502.2)" fill="#111"/>
<path d="M1252.9 502.2 V524.5" stroke="#111" stroke-width="1"/>
<ellipse cx="1267.0" cy="505.2" rx="3.5" ry="2.6" transform="rotate(-22 1267.0 505.2)" fill="#111"/>
<path d="M1264.0 505.2 V526.2" stroke="#111" stroke-width="1"/>
<path d="M1241.2 521.5 L1264.0 525.0 L1264.0 527.4 L1241.2 523.9 Z" fill="#111"/>
<path d="M1241.2 517.9 L1264.0 521.4 L1264.0 523.8 L1241.2 520.3 Z" fill="#111"/>
<text x="1252.0" y="538.2" font-size="10.5" text-anchor="middle" font-weight="bold" font-style="italic" fill="#111" style="font-family:Liberation Serif">3</text>
<circle cx="1273.4" cy="516.3" r="1.5" fill="#111"/><path d="M1272.2 517.0 Q1275.5 517.7 1277.6 515.5 L1274.4 524.0" stroke="#111" stroke-width="1.1" fill="none"/>
<path d="M1286.2 503.0 H1297.2" stroke="#111" stroke-width="1.1"/>
<ellipse cx="1291.7" cy="502.2" rx="3.5" ry="2.6" transform="rotate(-22 1291.7 502.2)" fill="#111"/>
<path d="M1288.7 502.2 V522.2" stroke="#111" stroke-width="1"/>
<ellipse cx="1301.8" cy="505.2" rx="3.5" ry="2.6" transform="rotate(-22 1301.8 505.2)" fill="#111"/>
<path d="M1298.8 505.2 V522.8" stroke="#111" stroke-width="1"/>
<ellipse cx="1317.7" cy="508.2" rx="3.5" ry="2.6" transform="rotate(-22 1317.7 508.2)" fill="#111"/>
<path d="M1314.7 508.2 V523.7" stroke="#111" stroke-width="1"/>
<path d="M1288.7 521.0 L1314.7 522.5 L1314.7 524.9 L1288.7 523.4 Z" fill="#111"/>
<path d="M1288.7 517.4 L1314.7 518.9 L1314.7 521.3 L1288.7 519.8 Z" fill="#111"/>
<path d="M1309.4 502.7 V514.2 M1312.0 502.2 V513.7" stroke="#111" stroke-width="0.9"/>
<path d="M1307.9 507.0 L1313.5 505.6 M1307.9 510.8 L1313.5 509.4" stroke="#111" stroke-width="1.6"/>
<text x="1301.0" y="538.2" font-size="10.5" text-anchor="middle" font-weight="bold" font-style="italic" fill="#111" style="font-family:Liberation Serif">3</text>
<ellipse cx="1326.5" cy="506.4" rx="3.5" ry="2.6" transform="rotate(-22 1326.5 506.4)" fill="#111"/>
<path d="M1323.5 506.4 V527.2" stroke="#111" stroke-width="1"/>
<ellipse cx="1336.7" cy="508.7" rx="3.5" ry="2.6" transform="rotate(-22 1336.7 508.7)" fill="#111"/>
<path d="M1333.7 508.7 V529.4" stroke="#111" stroke-width="1"/>
<ellipse cx="1346.2" cy="506.4" rx="3.5" ry="2.6" transform="rotate(-22 1346.2 506.4)" fill="#111"/>
<path d="M1343.2 506.4 V531.4" stroke="#111" stroke-width="1"/>
<ellipse cx="1354.7" cy="515.9" rx="3.5" ry="2.6" transform="rotate(-22 1354.7 515.9)" fill="#111"/>
<path d="M1351.7 515.9 V533.2" stroke="#111" stroke-width="1"/>
<path d="M1323.5 526.0 L1351.7 532.0 L1351.7 534.4 L1323.5 528.4 Z" fill="#111"/>
<path d="M1323.5 522.4 L1351.7 528.4 L1351.7 530.8 L1323.5 524.8 Z" fill="#111"/>
<path d="M1346.4 510.7 V522.2 M1349.0 510.2 V521.7" stroke="#111" stroke-width="0.9"/>
<path d="M1344.9 515.0 L1350.5 513.6 M1344.9 518.8 L1350.5 517.4" stroke="#111" stroke-width="1.6"/>
<circle cx="1354.7" cy="508.2" r="0.9" fill="#111"/>
<path d="M1323.0 537.2 V540.2 H1331.5 M1341.5 540.2 H1350.0 V537.2" stroke="#444" stroke-width="0.9" fill="none"/>
<text x="1336.5" y="544.2" font-size="10.5" text-anchor="middle" font-weight="bold" font-style="italic" fill="#111" style="font-family:Liberation Serif">3</text>
<path d="M1385.8 510.5 L1389.9 515.3 C1387.8 517.0 1386.8 519.0 1389.9 521.7 C1387.8 521.0 1384.5 521.7 1387.9 526.0 C1382.8 523.0 1386.3 520.0 1388.5 522.5 L1384.9 518.2 C1387.0 516.0 1387.6 514.0 1385.8 510.5 Z" fill="#111" stroke="#111" stroke-width="0.6"/>
<rect x="373.8" y="563.9" width="6.4" height="2.8" fill="#111"/>
<rect x="492.8" y="566.2" width="6.4" height="2.8" fill="#111"/>
<path d="M627.9 561.0 L632.0 565.8 C629.9 567.5 628.9 569.5 632.0 572.2 C629.9 571.5 626.6 572.2 630.0 576.5 C624.9 573.5 628.4 570.5 630.6 573.0 L627.0 568.7 C629.1 566.5 629.7 564.5 627.9 561.0 Z" fill="#111" stroke="#111" stroke-width="0.6"/>
<ellipse cx="699.3" cy="581.0" rx="3.5" ry="2.6" transform="rotate(-22 699.3 581.0)" fill="#111"/>
<path d="M702.3 581.0 V559.5" stroke="#111" stroke-width="1"/>
<ellipse cx="712.5" cy="578.3" rx="3.5" ry="2.6" transform="rotate(-22 712.5 578.3)" fill="#111"/>
<path d="M715.5 578.3 V559.5" stroke="#111" stroke-width="1"/>
<ellipse cx="725.0" cy="581.0" rx="3.5" ry="2.6" transform="rotate(-22 725.0 581.0)" fill="#111"/>
<path d="M728.0 581.0 V559.5" stroke="#111" stroke-width="1"/>
<ellipse cx="739.0" cy="583.6" rx="3.5" ry="2.6" transform="rotate(-22 739.0 583.6)" fill="#111"/>
<path d="M742.0 583.6 V559.5" stroke="#111" stroke-width="1"/>
<ellipse cx="753.3" cy="581.0" rx="3.5" ry="2.6" transform="rotate(-22 753.3 581.0)" fill="#111"/>
<path d="M756.3 581.0 V559.5" stroke="#111" stroke-width="1"/>
<ellipse cx="766.5" cy="578.3" rx="3.5" ry="2.6" transform="rotate(-22 766.5 578.3)" fill="#111"/>
<path d="M769.5 578.3 V559.5" stroke="#111" stroke-width="1"/>
<path d="M702.3 558.3 L769.5 558.3 L769.5 560.7 L702.3 560.7 Z" fill="#111"/>
<path d="M702.3 561.9 L769.5 561.9 L769.5 564.3 L702.3 564.3 Z" fill="#111"/>
<text x="736.3" y="555.5" font-size="10.5" text-anchor="middle" font-weight="bold" font-style="italic" fill="#111" style="font-family:Liberation Serif">6</text>
<path d="M699.0 587.0 Q733.0 594.0 767.0 586.0" stroke="#444" stroke-width="0.9" fill="none"/>
<ellipse cx="791.6" cy="574.7" rx="3.5" ry="2.6" transform="rotate(-22 791.6 574.7)" fill="#111"/>
<path d="M794.6 574.7 V558.8" stroke="#111" stroke-width="1"/>
<ellipse cx="819.4" cy="574.7" rx="3.5" ry="2.6" transform="rotate(-22 819.4 574.7)" fill="#111"/>
<path d="M822.4 574.7 V558.8" stroke="#111" stroke-width="1"/>
<path d="M794.6 557.6 L822.4 557.6 L822.4 560.0 L794.6 560.0 Z" fill="#111"/>
<circle cx="791.6" cy="582.2" r="0.9" fill="#111"/>
<circle cx="819.4" cy="582.2" r="0.9" fill="#111"/>
<ellipse cx="850.4" cy="583.5" rx="3.5" ry="2.6" transform="rotate(-22 850.4 583.5)" fill="#111"/>
<path d="M853.4 583.5 V565.5" stroke="#111" stroke-width="1"/>
<ellipse cx="868.0" cy="583.5" rx="3.5" ry="2.6" transform="rotate(-22 868.0 583.5)" fill="#111"/>
<path d="M871.0 583.5 V565.5" stroke="#111" stroke-width="1"/>
<path d="M853.4 564.3 L871.0 564.3 L871.0 566.7 L853.4 566.7 Z" fill="#111"/>
<circle cx="850.4" cy="591.0" r="0.9" fill="#111"/>
<circle cx="868.0" cy="591.0" r="0.9" fill="#111"/>
<path d="M895.8 584.5 H906.8" stroke="#111" stroke-width="1.1"/>
<path d="M895.8 589.7 H906.8" stroke="#111" stroke-width="1.1"/>
<ellipse cx="901.3" cy="591.5" rx="3.5" ry="2.6" transform="rotate(-22 901.3 591.5)" fill="#111"/>
<path d="M904.3 591.5 V567.6" stroke="#111" stroke-width="1"/>
<path d="M931.0 584.5 H942.0" stroke="#111" stroke-width="1.1"/>
<path d="M931.0 589.7 H942.0" stroke="#111" stroke-width="1.1"/>
<ellipse cx="936.5" cy="591.5" rx="3.5" ry="2.6" transform="rotate(-22 936.5 591.5)" fill="#111"/>
<path d="M939.5 591.5 V567.6" stroke="#111" stroke-width="1"/>
<path d="M904.3 566.4 L939.5 566.4 L939.5 568.8 L904.3 568.8 Z" fill="#111"/>
<circle cx="901.3" cy="599.0" r="0.9" fill="#111"/>
<circle cx="936.5" cy="599.0" r="0.9" fill="#111"/>
<ellipse cx="969.8" cy="583.5" rx="3.5" ry="2.6" transform="rotate(-22 969.8 583.5)" fill="#111"/>
<path d="M972.8 583.5 V565.5" stroke="#111" stroke-width="1"/>
<ellipse cx="997.6" cy="583.5" rx="3.5" ry="2.6" transform="rotate(-22 997.6 583.5)" fill="#111"/>
<path d="M1000.6 583.5 V565.5" stroke="#111" stroke-width="1"/>
<path d="M972.8 564.3 L1000.6 564.3 L1000.6 566.7 L972.8 566.7 Z" fill="#111"/>
<circle cx="969.8" cy="591.0" r="0.9" fill="#111"/>
<circle cx="997.6" cy="591.0" r="0.9" fill="#111"/>
<ellipse cx="1049.4" cy="574.7" rx="3.5" ry="2.6" transform="rotate(-22 1049.4 574.7)" fill="#111"/>
<path d="M1052.4 574.7 V558.8" stroke="#111" stroke-width="1"/>
<ellipse cx="1076.3" cy="574.7" rx="3.5" ry="2.6" transform="rotate(-22 1076.3 574.7)" fill="#111"/>
<path d="M1079.3 574.7 V558.8" stroke="#111" stroke-width="1"/>
<path d="M1052.4 557.6 L1079.3 557.6 L1079.3 560.0 L1052.4 560.0 Z" fill="#111"/>
<circle cx="1049.4" cy="582.2" r="0.9" fill="#111"/>
<circle cx="1076.3" cy="582.2" r="0.9" fill="#111"/>
<ellipse cx="1108.7" cy="583.5" rx="3.5" ry="2.6" transform="rotate(-22 1108.7 583.5)" fill="#111"/>
<path d="M1111.7 583.5 V565.5" stroke="#111" stroke-width="1"/>
<ellipse cx="1124.9" cy="583.5" rx="3.5" ry="2.6" transform="rotate(-22 1124.9 583.5)" fill="#111"/>
<path d="M1127.9 583.5 V565.5" stroke="#111" stroke-width="1"/>
<path d="M1111.7 564.3 L1127.9 564.3 L1127.9 566.7 L1111.7 566.7 Z" fill="#111"/>
<circle cx="1108.7" cy="591.0" r="0.9" fill="#111"/>
<circle cx="1124.9" cy="591.0" r="0.9" fill="#111"/>
<path d="M1153.2 584.5 H1164.2" stroke="#111" stroke-width="1.1"/>
<path d="M1153.2 589.7 H1164.2" stroke="#111" stroke-width="1.1"/>
<ellipse cx="1158.7" cy="591.5" rx="3.5" ry="2.6" transform="rotate(-22 1158.7 591.5)" fill="#111"/>
<path d="M1161.7 591.5 V567.6" stroke="#111" stroke-width="1"/>
<path d="M1170.3 584.5 H1181.3" stroke="#111" stroke-width="1.1"/>
<path d="M1170.3 589.7 H1181.3" stroke="#111" stroke-width="1.1"/>
<ellipse cx="1175.8" cy="591.5" rx="3.5" ry="2.6" transform="rotate(-22 1175.8 591.5)" fill="#111"/>
<path d="M1178.8 591.5 V567.6" stroke="#111" stroke-width="1"/>
<path d="M1161.7 566.4 L1178.8 566.4 L1178.8 568.8 L1161.7 568.8 Z" fill="#111"/>
<circle cx="1158.7" cy="599.0" r="0.9" fill="#111"/>
<circle cx="1175.8" cy="599.0" r="0.9" fill="#111"/>
<ellipse cx="1277.7" cy="574.7" rx="3.5" ry="2.6" transform="rotate(-22 1277.7 574.7)" fill="#111"/>
<path d="M1280.7 574.7 V558.8" stroke="#111" stroke-width="1"/>
<ellipse cx="1291.6" cy="574.7" rx="3.5" ry="2.6" transform="rotate(-22 1291.6 574.7)" fill="#111"/>
<path d="M1294.6 574.7 V558.8" stroke="#111" stroke-width="1"/>
<path d="M1280.7 557.6 L1294.6 557.6 L1294.6 560.0 L1280.7 560.0 Z" fill="#111"/>
<circle cx="1277.7" cy="582.2" r="0.9" fill="#111"/>
<circle cx="1291.6" cy="582.2" r="0.9" fill="#111"/>
<ellipse cx="1327.7" cy="583.5" rx="3.5" ry="2.6" transform="rotate(-22 1327.7 583.5)" fill="#111"/>
<path d="M1330.7 583.5 V565.5" stroke="#111" stroke-width="1"/>
<ellipse cx="1355.0" cy="583.5" rx="3.5" ry="2.6" transform="rotate(-22 1355.0 583.5)" fill="#111"/>
<path d="M1358.0 583.5 V565.5" stroke="#111" stroke-width="1"/>
<path d="M1330.7 564.3 L1358.0 564.3 L1358.0 566.7 L1330.7 566.7 Z" fill="#111"/>
<circle cx="1327.7" cy="591.0" r="0.9" fill="#111"/>
<circle cx="1355.0" cy="591.0" r="0.9" fill="#111"/>
<path d="M1213.5 561.0 L1217.6 565.8 C1215.5 567.5 1214.5 569.5 1217.6 572.2 C1215.5 571.5 1212.2 572.2 1215.6 576.5 C1210.5 573.5 1214.0 570.5 1216.2 573.0 L1212.6 568.7 C1214.7 566.5 1215.3 564.5 1213.5 561.0 Z" fill="#111" stroke="#111" stroke-width="0.6"/>
<path d="M1387.3 561.0 L1391.4 565.8 C1389.3 567.5 1388.3 569.5 1391.4 572.2 C1389.3 571.5 1386.0 572.2 1389.4 576.5 C1384.3 573.5 1387.8 570.5 1390.0 573.0 L1386.4 568.7 C1388.5 566.5 1389.1 564.5 1387.3 561.0 Z" fill="#111" stroke="#111" stroke-width="0.6"/>
<ellipse cx="297.3" cy="617.9" rx="3.5" ry="2.6" transform="rotate(-22 297.3 617.9)" fill="#111"/>
<path d="M294.3 617.9 V634.5" stroke="#111" stroke-width="1"/>
<ellipse cx="334.6" cy="617.9" rx="3.5" ry="2.6" transform="rotate(-22 334.6 617.9)" fill="#111"/>
<path d="M331.6 617.9 V634.5" stroke="#111" stroke-width="1"/>
<path d="M294.3 633.3 L331.6 633.3 L331.6 635.7 L294.3 635.7 Z" fill="#111"/>
<circle cx="297.3" cy="609.2" r="0.9" fill="#111"/>
<circle cx="334.6" cy="609.2" r="0.9" fill="#111"/>
<ellipse cx="361.9" cy="637.0" rx="3.5" ry="2.6" transform="rotate(-22 361.9 637.0)" fill="#111"/>
<path d="M364.9 637.0 V618.5" stroke="#111" stroke-width="1"/>
<ellipse cx="399.8" cy="637.0" rx="3.5" ry="2.6" transform="rotate(-22 399.8 637.0)" fill="#111"/>
<path d="M402.8 637.0 V618.5" stroke="#111" stroke-width="1"/>
<path d="M364.9 617.3 L402.8 617.3 L402.8 619.7 L364.9 619.7 Z" fill="#111"/>
<circle cx="361.9" cy="643.5" r="0.9" fill="#111"/>
<circle cx="399.8" cy="643.5" r="0.9" fill="#111"/>
<ellipse cx="495.9" cy="617.9" rx="3.5" ry="2.6" transform="rotate(-22 495.9 617.9)" fill="#111"/>
<path d="M492.9 617.9 V634.5" stroke="#111" stroke-width="1"/>
<ellipse cx="533.2" cy="617.9" rx="3.5" ry="2.6" transform="rotate(-22 533.2 617.9)" fill="#111"/>
<path d="M530.2 617.9 V634.5" stroke="#111" stroke-width="1"/>
<path d="M492.9 633.3 L530.2 633.3 L530.2 635.7 L492.9 635.7 Z" fill="#111"/>
<circle cx="495.9" cy="609.2" r="0.9" fill="#111"/>
<circle cx="533.2" cy="609.2" r="0.9" fill="#111"/>
<ellipse cx="560.5" cy="637.0" rx="3.5" ry="2.6" transform="rotate(-22 560.5 637.0)" fill="#111"/>
<path d="M563.5 637.0 V618.5" stroke="#111" stroke-width="1"/>
<ellipse cx="598.4" cy="637.0" rx="3.5" ry="2.6" transform="rotate(-22 598.4 637.0)" fill="#111"/>
<path d="M601.4 637.0 V618.5" stroke="#111" stroke-width="1"/>
<path d="M563.5 617.3 L601.4 617.3 L601.4 619.7 L563.5 619.7 Z" fill="#111"/>
<circle cx="560.5" cy="643.5" r="0.9" fill="#111"/>
<circle cx="598.4" cy="643.5" r="0.9" fill="#111"/>
<path d="M425.0 615.9 L429.1 620.7 C427.0 622.4 426.0 624.4 429.1 627.1 C427.0 626.4 423.7 627.1 427.1 631.4 C422.0 628.4 425.5 625.4 427.7 627.9 L424.1 623.6 C426.2 621.4 426.8 619.4 425.0 615.9 Z" fill="#111" stroke="#111" stroke-width="0.6"/>
<ellipse cx="1458.2" cy="617.8" rx="3.5" ry="2.6" transform="rotate(-22 1458.2 617.8)" fill="#111"/>
<path d="M1455.2 617.8 V634.5" stroke="#111" stroke-width="1"/>
<ellipse cx="1484.6" cy="617.8" rx="3.5" ry="2.6" transform="rotate(-22 1484.6 617.8)" fill="#111"/>
<path d="M1481.6 617.8 V636.9" stroke="#111" stroke-width="1"/>
<path d="M1455.2 633.3 L1481.6 635.7 L1481.6 638.1 L1455.2 635.7 Z" fill="#111"/>
<circle cx="1458.2" cy="609.0" r="0.9" fill="#111"/>
<circle cx="1484.6" cy="609.0" r="0.9" fill="#111"/>
<ellipse cx="1511.5" cy="637.2" rx="3.5" ry="2.6" transform="rotate(-22 1511.5 637.2)" fill="#111"/>
<path d="M1514.5 637.2 V619.6" stroke="#111" stroke-width="1"/>
<ellipse cx="1528.6" cy="637.2" rx="3.5" ry="2.6" transform="rotate(-22 1528.6 637.2)" fill="#111"/>
<path d="M1531.6 637.2 V619.6" stroke="#111" stroke-width="1"/>
<path d="M1514.5 618.4 L1531.6 618.4 L1531.6 620.8 L1514.5 620.8 Z" fill="#111"/>
<circle cx="1511.5" cy="644.0" r="0.9" fill="#111"/>
<circle cx="1528.6" cy="644.0" r="0.9" fill="#111"/>
<ellipse cx="297.3" cy="667.3" rx="3.5" ry="2.6" transform="rotate(-22 297.3 667.3)" fill="#111"/>
<path d="M294.3 667.3 V683.9" stroke="#111" stroke-width="1"/>
<ellipse cx="334.6" cy="667.3" rx="3.5" ry="2.6" transform="rotate(-22 334.6 667.3)" fill="#111"/>
<path d="M331.6 667.3 V683.9" stroke="#111" stroke-width="1"/>
<path d="M294.3 682.7 L331.6 682.7 L331.6 685.1 L294.3 685.1 Z" fill="#111"/>
<circle cx="297.3" cy="658.6" r="0.9" fill="#111"/>
<circle cx="334.6" cy="658.6" r="0.9" fill="#111"/>
<ellipse cx="361.9" cy="686.4" rx="3.5" ry="2.6" transform="rotate(-22 361.9 686.4)" fill="#111"/>
<path d="M364.9 686.4 V667.9" stroke="#111" stroke-width="1"/>
<ellipse cx="399.8" cy="686.4" rx="3.5" ry="2.6" transform="rotate(-22 399.8 686.4)" fill="#111"/>
<path d="M402.8 686.4 V667.9" stroke="#111" stroke-width="1"/>
<path d="M364.9 666.7 L402.8 666.7 L402.8 669.1 L364.9 669.1 Z" fill="#111"/>
<circle cx="361.9" cy="692.9" r="0.9" fill="#111"/>
<circle cx="399.8" cy="692.9" r="0.9" fill="#111"/>
<ellipse cx="495.9" cy="667.3" rx="3.5" ry="2.6" transform="rotate(-22 495.9 667.3)" fill="#111"/>
<path d="M492.9 667.3 V683.9" stroke="#111" stroke-width="1"/>
<ellipse cx="533.2" cy="667.3" rx="3.5" ry="2.6" transform="rotate(-22 533.2 667.3)" fill="#111"/>
<path d="M530.2 667.3 V683.9" stroke="#111" stroke-width="1"/>
<path d="M492.9 682.7 L530.2 682.7 L530.2 685.1 L492.9 685.1 Z" fill="#111"/>
<circle cx="495.9" cy="658.6" r="0.9" fill="#111"/>
<circle cx="533.2" cy="658.6" r="0.9" fill="#111"/>
<ellipse cx="560.5" cy="686.4" rx="3.5" ry="2.6" transform="rotate(-22 560.5 686.4)" fill="#111"/>
<path d="M563.5 686.4 V667.9" stroke="#111" stroke-width="1"/>
<ellipse cx="598.4" cy="686.4" rx="3.5" ry="2.6" transform="rotate(-22 598.4 686.4)" fill="#111"/>
<path d="M601.4 686.4 V667.9" stroke="#111" stroke-width="1"/>
<path d="M563.5 666.7 L601.4 666.7 L601.4 669.1 L563.5 669.1 Z" fill="#111"/>
<circle cx="560.5" cy="692.9" r="0.9" fill="#111"/>
<circle cx="598.4" cy="692.9" r="0.9" fill="#111"/>
<path d="M425.0 665.3 L429.1 670.1 C427.0 671.8 426.0 673.8 429.1 676.5 C427.0 675.8 423.7 676.5 427.1 680.8 C422.0 677.8 425.5 674.8 427.7 677.3 L424.1 673.0 C426.2 670.8 426.8 668.8 425.0 665.3 Z" fill="#111" stroke="#111" stroke-width="0.6"/>
<ellipse cx="1458.2" cy="667.2" rx="3.5" ry="2.6" transform="rotate(-22 1458.2 667.2)" fill="#111"/>
<path d="M1455.2 667.2 V683.9" stroke="#111" stroke-width="1"/>
<ellipse cx="1484.6" cy="667.2" rx="3.5" ry="2.6" transform="rotate(-22 1484.6 667.2)" fill="#111"/>
<path d="M1481.6 667.2 V686.3" stroke="#111" stroke-width="1"/>
<path d="M1455.2 682.7 L1481.6 685.1 L1481.6 687.5 L1455.2 685.1 Z" fill="#111"/>
<circle cx="1458.2" cy="658.4" r="0.9" fill="#111"/>
<circle cx="1484.6" cy="658.4" r="0.9" fill="#111"/>
<ellipse cx="1511.5" cy="686.6" rx="3.5" ry="2.6" transform="rotate(-22 1511.5 686.6)" fill="#111"/>
<path d="M1514.5 686.6 V669.0" stroke="#111" stroke-width="1"/>
<ellipse cx="1528.6" cy="686.6" rx="3.5" ry="2.6" transform="rotate(-22 1528.6 686.6)" fill="#111"/>
<path d="M1531.6 686.6 V669.0" stroke="#111" stroke-width="1"/>
<path d="M1514.5 667.8 L1531.6 667.8 L1531.6 670.2 L1514.5 670.2 Z" fill="#111"/>
<circle cx="1511.5" cy="693.4" r="0.9" fill="#111"/>
<circle cx="1528.6" cy="693.4" r="0.9" fill="#111"/>
<rect x="626.2" y="621.1" width="6.4" height="2.8" fill="#111"/>
<ellipse cx="790.2" cy="607.1" rx="3.5" ry="2.6" transform="rotate(-22 790.2 607.1)" fill="#111"/>
<path d="M784.7 608.4 H795.7" stroke="#111" stroke-width="1.1"/>
<path d="M787.2 607.1 V624.1" stroke="#111" stroke-width="1"/>
<path d="M787.2 624.1 C788.2 619.1 794.2 618.1 793.2 613.1" stroke="#111" stroke-width="1.6" fill="none"/>
<path d="M788.0 599.8 L790.2 596.0 L792.4 599.8" stroke="#111" stroke-width="1.1" fill="none"/>
<ellipse cx="820.7" cy="609.4" rx="3.5" ry="2.6" transform="rotate(-22 820.7 609.4)" fill="#111"/>
<path d="M817.7 609.4 V628.0" stroke="#111" stroke-width="1"/>
<circle cx="827.0" cy="610.0" r="0.9" fill="#111"/>
<path d="M818.5 601.8 L820.7 598.0 L822.9 601.8" stroke="#111" stroke-width="1.1" fill="none"/>
<path d="M899.8 615.9 L903.9 620.7 C901.8 622.4 900.8 624.4 903.9 627.1 C901.8 626.4 898.5 627.1 901.9 631.4 C896.8 628.4 900.3 625.4 902.5 627.9 L898.9 623.6 C901.0 621.4 901.6 619.4 899.8 615.9 Z" fill="#111" stroke="#111" stroke-width="0.6"/>
<path d="M964.3 608.4 H975.3" stroke="#111" stroke-width="1.1"/>
<ellipse cx="969.8" cy="607.0" rx="3.5" ry="2.6" transform="rotate(-22 969.8 607.0)" fill="#111"/>
<path d="M966.8 607.0 V628.5" stroke="#111" stroke-width="1"/>
<ellipse cx="996.7" cy="613.0" rx="3.5" ry="2.6" transform="rotate(-22 996.7 613.0)" fill="#111"/>
<path d="M993.7 613.0 V631.5" stroke="#111" stroke-width="1"/>
<path d="M966.8 627.3 L993.7 630.3 L993.7 632.7 L966.8 629.7 Z" fill="#111"/>
<path d="M960.7 601.5 V613.0 M963.3 601.0 V612.5" stroke="#111" stroke-width="0.9"/>
<path d="M959.2 605.8 L964.8 604.4 M959.2 609.6 L964.8 608.2" stroke="#111" stroke-width="1.6"/>
<path d="M967.6 599.8 L969.8 596.0 L972.0 599.8" stroke="#111" stroke-width="1.1" fill="none"/>
<path d="M994.5 605.8 L996.7 602.0 L998.9 605.8" stroke="#111" stroke-width="1.1" fill="none"/>
<ellipse cx="1048.5" cy="610.4" rx="3.5" ry="2.6" transform="rotate(-22 1048.5 610.4)" fill="#111"/>
<path d="M1045.5 610.4 V629.0" stroke="#111" stroke-width="1"/>
<ellipse cx="1076.3" cy="614.0" rx="3.5" ry="2.6" transform="rotate(-22 1076.3 614.0)" fill="#111"/>
<path d="M1073.3 614.0 V632.0" stroke="#111" stroke-width="1"/>
<path d="M1045.5 627.8 L1073.3 630.8 L1073.3 633.2 L1045.5 630.2 Z" fill="#111"/>
<path d="M1046.3 602.8 L1048.5 599.0 L1050.7 602.8" stroke="#111" stroke-width="1.1" fill="none"/>
<path d="M1074.1 606.8 L1076.3 603.0 L1078.5 606.8" stroke="#111" stroke-width="1.1" fill="none"/>
<ellipse cx="1109.6" cy="607.1" rx="3.5" ry="2.6" transform="rotate(-22 1109.6 607.1)" fill="#111"/>
<path d="M1104.1 608.4 H1115.1" stroke="#111" stroke-width="1.1"/>
<path d="M1106.6 607.1 V624.1" stroke="#111" stroke-width="1"/>
<path d="M1106.6 624.1 C1107.6 619.1 1113.6 618.1 1112.6 613.1" stroke="#111" stroke-width="1.6" fill="none"/>
<path d="M1107.4 599.8 L1109.6 596.0 L1111.8 599.8" stroke="#111" stroke-width="1.1" fill="none"/>
<ellipse cx="1124.9" cy="610.4" rx="3.5" ry="2.6" transform="rotate(-22 1124.9 610.4)" fill="#111"/>
<path d="M1121.9 610.4 V628.0" stroke="#111" stroke-width="1"/>
<circle cx="1131.0" cy="611.0" r="0.9" fill="#111"/>
<path d="M1122.7 602.8 L1124.9 599.0 L1127.1 602.8" stroke="#111" stroke-width="1.1" fill="none"/>
<path d="M1209.7 608.4 H1220.7" stroke="#111" stroke-width="1.1"/>
<ellipse cx="1215.2" cy="607.1" rx="3.5" ry="2.6" transform="rotate(-22 1215.2 607.1)" fill="#111"/>
<path d="M1212.2 607.1 V628.5" stroke="#111" stroke-width="1"/>
<ellipse cx="1243.0" cy="614.0" rx="3.5" ry="2.6" transform="rotate(-22 1243.0 614.0)" fill="#111"/>
<path d="M1240.0 614.0 V631.5" stroke="#111" stroke-width="1"/>
<path d="M1212.2 627.3 L1240.0 630.3 L1240.0 632.7 L1212.2 629.7 Z" fill="#111"/>
<path d="M1206.2 601.5 V613.0 M1208.8 601.0 V612.5" stroke="#111" stroke-width="0.9"/>
<path d="M1204.7 605.8 L1210.3 604.4 M1204.7 609.6 L1210.3 608.2" stroke="#111" stroke-width="1.6"/>
<path d="M1213.0 599.8 L1215.2 596.0 L1217.4 599.8" stroke="#111" stroke-width="1.1" fill="none"/>
<path d="M1240.8 606.8 L1243.0 603.0 L1245.2 606.8" stroke="#111" stroke-width="1.1" fill="none"/>
<ellipse cx="1276.3" cy="610.4" rx="3.5" ry="2.6" transform="rotate(-22 1276.3 610.4)" fill="#111"/>
<path d="M1273.3 610.4 V629.0" stroke="#111" stroke-width="1"/>
<ellipse cx="1291.6" cy="614.0" rx="3.5" ry="2.6" transform="rotate(-22 1291.6 614.0)" fill="#111"/>
<path d="M1288.6 614.0 V632.0" stroke="#111" stroke-width="1"/>
<path d="M1273.3 627.8 L1288.6 630.8 L1288.6 633.2 L1273.3 630.2 Z" fill="#111"/>
<path d="M1274.1 602.8 L1276.3 599.0 L1278.5 602.8" stroke="#111" stroke-width="1.1" fill="none"/>
<path d="M1289.4 606.8 L1291.6 603.0 L1293.8 606.8" stroke="#111" stroke-width="1.1" fill="none"/>
<ellipse cx="1328.6" cy="625.6" rx="3.4" ry="2.4" transform="rotate(-22 1328.6 625.6)" fill="none" stroke="#111" stroke-width="1.2"/>
<path d="M1331.8 625.6 V608.5" stroke="#111" stroke-width="1"/>
<path d="M1319.7 620.1 V631.6 M1322.3 619.6 V631.1" stroke="#111" stroke-width="0.9"/>
<path d="M1318.2 624.4 L1323.8 623.0 M1318.2 628.2 L1323.8 626.8" stroke="#111" stroke-width="1.6"/>
<path d="M627.9 665.3 L632.0 670.1 C629.9 671.8 628.9 673.8 632.0 676.5 C629.9 675.8 626.6 676.5 630.0 680.8 C624.9 677.8 628.4 674.8 630.6 677.3 L627.0 673.0 C629.1 670.8 629.7 668.8 627.9 665.3 Z" fill="#111" stroke="#111" stroke-width="0.6"/>
<ellipse cx="699.3" cy="669.0" rx="3.5" ry="2.6" transform="rotate(-22 699.3 669.0)" fill="#111"/>
<path d="M696.3 669.0 V692.0" stroke="#111" stroke-width="1"/>
<ellipse cx="712.5" cy="667.0" rx="3.5" ry="2.6" transform="rotate(-22 712.5 667.0)" fill="#111"/>
<path d="M709.5 667.0 V692.0" stroke="#111" stroke-width="1"/>
<ellipse cx="725.0" cy="669.0" rx="3.5" ry="2.6" transform="rotate(-22 725.0 669.0)" fill="#111"/>
<path d="M722.0 669.0 V692.0" stroke="#111" stroke-width="1"/>
<ellipse cx="739.0" cy="671.5" rx="3.5" ry="2.6" transform="rotate(-22 739.0 671.5)" fill="#111"/>
<path d="M736.0 671.5 V692.0" stroke="#111" stroke-width="1"/>
<ellipse cx="753.3" cy="669.0" rx="3.5" ry="2.6" transform="rotate(-22 753.3 669.0)" fill="#111"/>
<path d="M750.3 669.0 V692.0" stroke="#111" stroke-width="1"/>
<ellipse cx="766.5" cy="667.0" rx="3.5" ry="2.6" transform="rotate(-22 766.5 667.0)" fill="#111"/>
<path d="M763.5 667.0 V692.0" stroke="#111" stroke-width="1"/>
<path d="M696.3 690.8 L763.5 690.8 L763.5 693.2 L696.3 693.2 Z" fill="#111"/>
<path d="M696.3 687.2 L763.5 687.2 L763.5 689.6 L696.3 689.6 Z" fill="#111"/>
<text x="731.0" y="703.0" font-size="10.5" text-anchor="middle" font-weight="bold" font-style="italic" fill="#111" style="font-family:Liberation Serif">6</text>
<path d="M699.0 662.0 Q733.0 653.0 767.0 661.0" stroke="#444" stroke-width="0.9" fill="none"/>
<ellipse cx="791.6" cy="665.0" rx="3.5" ry="2.6" transform="rotate(-22 791.6 665.0)" fill="#111"/>
<path d="M788.6 665.0 V683.5" stroke="#111" stroke-width="1"/>
<ellipse cx="818.4" cy="665.0" rx="3.5" ry="2.6" transform="rotate(-22 818.4 665.0)" fill="#111"/>
<path d="M815.4 665.0 V683.5" stroke="#111" stroke-width="1"/>
<path d="M788.6 682.3 L815.4 682.3 L815.4 684.7 L788.6 684.7 Z" fill="#111"/>
<circle cx="791.6" cy="658.0" r="0.9" fill="#111"/>
<circle cx="818.4" cy="658.0" r="0.9" fill="#111"/>
<ellipse cx="850.4" cy="674.3" rx="3.5" ry="2.6" transform="rotate(-22 850.4 674.3)" fill="#111"/>
<path d="M847.4 674.3 V689.5" stroke="#111" stroke-width="1"/>
<ellipse cx="868.0" cy="674.3" rx="3.5" ry="2.6" transform="rotate(-22 868.0 674.3)" fill="#111"/>
<path d="M865.0 674.3 V689.5" stroke="#111" stroke-width="1"/>
<path d="M847.4 688.3 L865.0 688.3 L865.0 690.7 L847.4 690.7 Z" fill="#111"/>
<circle cx="850.4" cy="667.3" r="0.9" fill="#111"/>
<circle cx="868.0" cy="667.3" r="0.9" fill="#111"/>
<ellipse cx="901.3" cy="683.5" rx="3.5" ry="2.6" transform="rotate(-22 901.3 683.5)" fill="#111"/>
<path d="M904.3 683.5 V666.4" stroke="#111" stroke-width="1"/>
<ellipse cx="936.5" cy="683.5" rx="3.5" ry="2.6" transform="rotate(-22 936.5 683.5)" fill="#111"/>
<path d="M939.5 683.5 V666.4" stroke="#111" stroke-width="1"/>
<path d="M904.3 665.2 L939.5 665.2 L939.5 667.6 L904.3 667.6 Z" fill="#111"/>
<circle cx="901.3" cy="690.5" r="0.9" fill="#111"/>
<circle cx="936.5" cy="690.5" r="0.9" fill="#111"/>
<ellipse cx="969.8" cy="674.3" rx="3.5" ry="2.6" transform="rotate(-22 969.8 674.3)" fill="#111"/>
<path d="M966.8 674.3 V689.5" stroke="#111" stroke-width="1"/>
<ellipse cx="997.6" cy="674.3" rx="3.5" ry="2.6" transform="rotate(-22 997.6 674.3)" fill="#111"/>
<path d="M994.6 674.3 V689.5" stroke="#111" stroke-width="1"/>
<path d="M966.8 688.3 L994.6 688.3 L994.6 690.7 L966.8 690.7 Z" fill="#111"/>
<circle cx="969.8" cy="667.3" r="0.9" fill="#111"/>
<circle cx="997.6" cy="667.3" r="0.9" fill="#111"/>
<ellipse cx="1049.4" cy="665.0" rx="3.5" ry="2.6" transform="rotate(-22 1049.4 665.0)" fill="#111"/>
<path d="M1046.4 665.0 V683.5" stroke="#111" stroke-width="1"/>
<ellipse cx="1076.3" cy="665.0" rx="3.5" ry="2.6" transform="rotate(-22 1076.3 665.0)" fill="#111"/>
<path d="M1073.3 665.0 V683.5" stroke="#111" stroke-width="1"/>
<path d="M1046.4 682.3 L1073.3 682.3 L1073.3 684.7 L1046.4 684.7 Z" fill="#111"/>
<circle cx="1049.4" cy="658.0" r="0.9" fill="#111"/>
<circle cx="1076.3" cy="658.0" r="0.9" fill="#111"/>
<ellipse cx="1108.7" cy="674.3" rx="3.5" ry="2.6" transform="rotate(-22 1108.7 674.3)" fill="#111"/>
<path d="M1105.7 674.3 V689.5" stroke="#111" stroke-width="1"/>
<ellipse cx="1124.9" cy="674.3" rx="3.5" ry="2.6" transform="rotate(-22 1124.9 674.3)" fill="#111"/>
<path d="M1121.9 674.3 V689.5" stroke="#111" stroke-width="1"/>
<path d="M1105.7 688.3 L1121.9 688.3 L1121.9 690.7 L1105.7 690.7 Z" fill="#111"/>
<circle cx="1108.7" cy="667.3" r="0.9" fill="#111"/>
<circle cx="1124.9" cy="667.3" r="0.9" fill="#111"/>
<ellipse cx="1158.7" cy="683.5" rx="3.5" ry="2.6" transform="rotate(-22 1158.7 683.5)" fill="#111"/>
<path d="M1161.7 683.5 V666.4" stroke="#111" stroke-width="1"/>
<ellipse cx="1175.8" cy="683.5" rx="3.5" ry="2.6" transform="rotate(-22 1175.8 683.5)" fill="#111"/>
<path d="M1178.8 683.5 V666.4" stroke="#111" stroke-width="1"/>
<path d="M1161.7 665.2 L1178.8 665.2 L1178.8 667.6 L1161.7 667.6 Z" fill="#111"/>
<circle cx="1158.7" cy="690.5" r="0.9" fill="#111"/>
<circle cx="1175.8" cy="690.5" r="0.9" fill="#111"/>
<ellipse cx="1277.7" cy="665.0" rx="3.5" ry="2.6" transform="rotate(-22 1277.7 665.0)" fill="#111"/>
<path d="M1274.7 665.0 V683.5" stroke="#111" stroke-width="1"/>
<ellipse cx="1291.6" cy="665.0" rx="3.5" ry="2.6" transform="rotate(-22 1291.6 665.0)" fill="#111"/>
<path d="M1288.6 665.0 V683.5" stroke="#111" stroke-width="1"/>
<path d="M1274.7 682.3 L1288.6 682.3 L1288.6 684.7 L1274.7 684.7 Z" fill="#111"/>
<circle cx="1277.7" cy="658.0" r="0.9" fill="#111"/>
<circle cx="1291.6" cy="658.0" r="0.9" fill="#111"/>
<ellipse cx="1327.7" cy="674.3" rx="3.5" ry="2.6" transform="rotate(-22 1327.7 674.3)" fill="#111"/>
<path d="M1324.7 674.3 V689.5" stroke="#111" stroke-width="1"/>
<ellipse cx="1355.0" cy="674.3" rx="3.5" ry="2.6" transform="rotate(-22 1355.0 674.3)" fill="#111"/>
<path d="M1352.0 674.3 V689.5" stroke="#111" stroke-width="1"/>
<path d="M1324.7 688.3 L1352.0 688.3 L1352.0 690.7 L1324.7 690.7 Z" fill="#111"/>
<circle cx="1327.7" cy="667.3" r="0.9" fill="#111"/>
<circle cx="1355.0" cy="667.3" r="0.9" fill="#111"/>
<path d="M1213.5 665.3 L1217.6 670.1 C1215.5 671.8 1214.5 673.8 1217.6 676.5 C1215.5 675.8 1212.2 676.5 1215.6 680.8 C1210.5 677.8 1214.0 674.8 1216.2 677.3 L1212.6 673.0 C1214.7 670.8 1215.3 668.8 1213.5 665.3 Z" fill="#111" stroke="#111" stroke-width="0.6"/>
<path d="M1387.3 665.3 L1391.4 670.1 C1389.3 671.8 1388.3 673.8 1391.4 676.5 C1389.3 675.8 1386.0 676.5 1389.4 680.8 C1384.3 677.8 1387.8 674.8 1390.0 677.3 L1386.4 673.0 C1388.5 670.8 1389.1 668.8 1387.3 665.3 Z" fill="#111" stroke="#111" stroke-width="0.6"/>
</svg>
<svg class="a" style="left:0;top:0" width="1642" height="1262" viewBox="0 0 1642 1262">
<defs><linearGradient id="ng" x1="0" y1="0" x2="1" y2="1"><stop offset="0" stop-color="#10e85a"/><stop offset="1" stop-color="#00e040"/></linearGradient></defs>
<rect x="119" y="716.4" width="266" height="33.60000000000002" rx="8" fill="#262d35" />
<rect x="344" y="716.4" width="41" height="33.60000000000002" rx="8" fill="#0d5a89" />
<circle cx="130.5" cy="727.5" r="1.5" fill="#eef1f3"/><path d="M135 727.5 H149" stroke="#eef1f3" stroke-width="1.9"/>
<circle cx="130.5" cy="733.1" r="1.5" fill="#eef1f3"/><path d="M135 733.1 H149" stroke="#eef1f3" stroke-width="1.9"/>
<circle cx="130.5" cy="738.7" r="1.5" fill="#eef1f3"/><path d="M135 738.7 H149" stroke="#eef1f3" stroke-width="1.9"/>
<rect x="174" y="724" width="20" height="17" rx="1.5" fill="#eef1f3" />
<path d="M178.5 724 V741" stroke="#262d35" stroke-width="1.3"/>
<path d="M183.5 724 V741" stroke="#262d35" stroke-width="1.3"/>
<path d="M188.5 724 V741" stroke="#262d35" stroke-width="1.3"/>
<rect x="176.5" y="724" width="2.0" height="9" rx="0" fill="#262d35" />
<rect x="181.5" y="724" width="2.0" height="9" rx="0" fill="#262d35" />
<rect x="186.5" y="724" width="2.0" height="9" rx="0" fill="#262d35" />
<rect x="191.5" y="724" width="2.0" height="9" rx="0" fill="#262d35" />
<path d="M218 721 L227 731" stroke="#eef1f3" stroke-width="2"/><path d="M216.5 722.5 L219.5 719.5" stroke="#eef1f3" stroke-width="2.5"/>
<circle cx="228" cy="734" r="4.6" fill="#eef1f3"/><circle cx="233" cy="739.5" r="5.8" fill="#eef1f3"/><circle cx="231" cy="737" r="1.6" fill="#262d35"/>
<rect x="265" y="724" width="9" height="9" rx="1" fill="#eef1f3" />
<rect x="265" y="735" width="9" height="9" rx="1" fill="#eef1f3" />
<rect x="276" y="724" width="9" height="9" rx="1" fill="#eef1f3" />
<rect x="276" y="735" width="9" height="9" rx="1" fill="#eef1f3" />
<path d="M311 722 V744" stroke="#eef1f3" stroke-width="1.7"/><rect x="308.4" y="734.5" width="5.2" height="7" rx="2.4" fill="#262d35" stroke="#eef1f3" stroke-width="1.5"/>
<path d="M319.5 722 V744" stroke="#eef1f3" stroke-width="1.7"/><rect x="316.9" y="723.5" width="5.2" height="7" rx="2.4" fill="#262d35" stroke="#eef1f3" stroke-width="1.5"/>
<path d="M328 722 V744" stroke="#eef1f3" stroke-width="1.7"/><rect x="325.4" y="728.5" width="5.2" height="7" rx="2.4" fill="#262d35" stroke="#eef1f3" stroke-width="1.5"/>
<path d="M354 726 H366" stroke="#eef1f3" stroke-width="1.8"/>
<path d="M354 733 H362" stroke="#eef1f3" stroke-width="1.8"/>
<path d="M354 740 H368" stroke="#eef1f3" stroke-width="1.8"/>
<path d="M370 726 H375" stroke="#eef1f3" stroke-width="1.8"/>
<path d="M370 733 H375" stroke="#eef1f3" stroke-width="1.8"/>
<path d="M370 740 H375" stroke="#eef1f3" stroke-width="1.8"/>
<rect x="410" y="714" width="220.5" height="33.5" rx="8" fill="#262d35" />
<rect x="410" y="714" width="41.5" height="33.5" rx="8" fill="#12b0f5" />
<path d="M424 720.5 L438 734 L431.5 734.5 L435 742 L432 743.5 L428.5 736 L424 740.5 Z" fill="#0a0d10"/>
<path d="M467 741 L469 735 L481 723 L485 727 L473 739 Z" fill="#eef1f3"/>
<path d="M512 742 L531 721" stroke="#eef1f3" stroke-width="1.6"/>
<rect x="556.5" y="722" width="19" height="19" fill="none" stroke="#eef1f3" stroke-width="1.4"/>
<rect x="554.5" y="720" width="4.0" height="4" rx="0" fill="#eef1f3" />
<rect x="573.5" y="720" width="4.0" height="4" rx="0" fill="#eef1f3" />
<rect x="554.5" y="739" width="4.0" height="4" rx="0" fill="#eef1f3" />
<rect x="573.5" y="739" width="4.0" height="4" rx="0" fill="#eef1f3" />
<path d="M561 738 V734 M564 738 V728 M567 738 V731 M570 738 V733" stroke="#eef1f3" stroke-width="1.3"/>
<path d="M611.5 721 V735 M606.5 730 L611.5 735 L616.5 730 M603 739 H620 M603 743 H620" stroke="#eef1f3" stroke-width="1.6" fill="none"/>
<rect x="651" y="714" width="40" height="33.5" rx="8" fill="#262d35" />
<path d="M661.5 723 H680 M667 721.5 H674.5" stroke="#eef1f3" stroke-width="2" stroke-linecap="round"/><path d="M663.5 725.5 H678 L676.5 740 a1.5 1.5 0 0 1 -1.5 1.3 H666.5 a1.5 1.5 0 0 1 -1.5 -1.3 Z" fill="#eef1f3"/>
<rect x="710" y="714" width="85.29999999999995" height="33.5" rx="8" fill="#262d35" />
<rect x="710" y="714" width="40.700000000000045" height="33.5" rx="8" fill="#12b0f5" />
<path d="M719.0 729.0 V733.0" stroke="#0a0d10" stroke-width="1.6"/>
<path d="M722.5 727.0 V735.0" stroke="#0a0d10" stroke-width="1.6"/>
<path d="M726.0 725.0 V737.0" stroke="#0a0d10" stroke-width="1.6"/>
<path d="M729.5 723.0 V739.0" stroke="#0a0d10" stroke-width="1.6"/>
<path d="M733.0 726.0 V736.0" stroke="#0a0d10" stroke-width="1.6"/>
<path d="M736.5 728.0 V734.0" stroke="#0a0d10" stroke-width="1.6"/>
<path d="M740.0 729.5 V732.5" stroke="#0a0d10" stroke-width="1.6"/>
<path d="M770 740 V724 L783 721 V736" stroke="#eef1f3" stroke-width="1.8" fill="none"/><ellipse cx="767.5" cy="740" rx="3.5" ry="2.8" fill="#eef1f3"/><ellipse cx="780.5" cy="736.5" rx="3.5" ry="2.8" fill="#eef1f3"/>
<rect x="815.4" y="714" width="39.39999999999998" height="33.5" rx="8" fill="#262d35" />
<path d="M823 721.5 H836 M823 721 V727 M826.5 721 V725 M830 721 V725 M833.5 721 V725 M836 721 V727" stroke="#eef1f3" stroke-width="1.5" fill="none"/>
<ellipse cx="838" cy="739" rx="4.8" ry="3.8" transform="rotate(-20 838 739)" fill="#eef1f3"/><path d="M841.8 738 V720.5 L847.5 723.5 V727 L842.5 725" stroke="#eef1f3" stroke-width="1.8" fill="#eef1f3"/>
<rect x="874.6" y="714" width="40.10000000000002" height="33.5" rx="8" fill="#12b0f5" />
<path d="M880.5 724 L884 738 L887.5 724" stroke="#0a0d10" stroke-width="2" fill="none"/><path d="M893 738 V727 H906 V738" stroke="#0a0d10" stroke-width="3" fill="none"/>
<rect x="934.5" y="714.5" width="291.9000000000001" height="32.5" rx="8" fill="#262d35" />
<text x="944.0" y="736.5" font-size="16.28" textLength="106.0" lengthAdjust="spacingAndGlyphs" fill="#eef1f3" stroke="#eef1f3" stroke-width="0.4" font-weight="normal" style="font-family:'Liberation Sans',sans-serif;">Up-stem voice 1</text>
<path d="M1207.5 727.5 L1214 734 L1220.5 727.5" stroke="#eef1f3" stroke-width="2" fill="none"/>
<path d="M1503 731 H1522 M1503 735 H1522 M1508.5 726 L1512.5 722 L1516.5 726 M1508.5 740 L1512.5 744 L1516.5 740" stroke="#8e959b" stroke-width="1.6" fill="none"/>
<rect x="112.6" y="760.4" width="225.4" height="28.899999999999977" rx="6" fill="#2f3a45" />
<circle cx="129.4" cy="777" r="8" fill="#18e21b"/>
<text x="146.0" y="782.5" font-size="16.42" textLength="117.0" lengthAdjust="spacingAndGlyphs" fill="#eef1f3" stroke="#eef1f3" stroke-width="0.4" font-weight="normal" style="font-family:'Liberation Sans',sans-serif;">Clarinet (B Flat) 1</text>
<path d="M317.5 772.5 L324 779 L330.5 772.5" stroke="#eef1f3" stroke-width="2" fill="none"/>
<rect x="110" y="794" width="230.7" height="240" rx="0" fill="#ffffff" />
<path d="M110 813.6 H340.7" stroke="#9a9a9a" stroke-width="1.3"/>
<path d="M248 847 H340.7" stroke="#9a9a9a" stroke-width="1.3"/>
<path d="M248 883 H340.7" stroke="#9a9a9a" stroke-width="1.3"/>
<path d="M248 920 H340.7" stroke="#9a9a9a" stroke-width="1.3"/>
<path d="M110 953 H340.7" stroke="#9a9a9a" stroke-width="1.3"/>
<path d="M248 986 H340.7" stroke="#9a9a9a" stroke-width="1.3"/>
<path d="M248 1019 H340.7" stroke="#9a9a9a" stroke-width="1.3"/>
<rect x="110" y="833" width="138" height="20" rx="0" fill="#000" />
<rect x="110" y="873" width="138" height="20" rx="0" fill="#000" />
<rect x="110" y="913" width="138" height="20" rx="0" fill="#000" />
<rect x="110" y="973" width="138" height="20" rx="0" fill="#000" />
<rect x="110" y="1013" width="138" height="20" rx="0" fill="#000" />
<text x="314.0" y="803.0" font-size="12.06" textLength="17.0" lengthAdjust="spacingAndGlyphs" fill="#222" stroke="#222" stroke-width="0.0" font-weight="normal" style="font-family:'Liberation Sans',sans-serif;">C5</text>
<clipPath id="kbc"><rect x="110" y="794" width="231" height="240"/></clipPath>
<g clip-path="url(#kbc)"><text x="314.0" y="1039.5" font-size="12.06" textLength="17.0" lengthAdjust="spacingAndGlyphs" fill="#222" stroke="#222" stroke-width="0.0" font-weight="normal" style="font-family:'Liberation Sans',sans-serif;">C4</text></g>
<rect x="340.7" y="794" width="1.6000000000000227" height="240" rx="0" fill="#2a2a2a" />
<rect x="342.3" y="760" width="1168.7" height="34" rx="0" fill="#e5e5e5" />
<rect x="342.3" y="794" width="1168.7" height="20" rx="0" fill="#f8f8f8" />
<rect x="342.3" y="814" width="1168.7" height="20" rx="0" fill="#f8f8f8" />
<rect x="342.3" y="834" width="1168.7" height="20" rx="0" fill="#e0e4e5" />
<rect x="342.3" y="854" width="1168.7" height="20" rx="0" fill="#f8f8f8" />
<rect x="342.3" y="874" width="1168.7" height="20" rx="0" fill="#e0e4e5" />
<rect x="342.3" y="894" width="1168.7" height="20" rx="0" fill="#f8f8f8" />
<rect x="342.3" y="914" width="1168.7" height="20" rx="0" fill="#e0e4e5" />
<rect x="342.3" y="934" width="1168.7" height="20" rx="0" fill="#f8f8f8" />
<rect x="342.3" y="954" width="1168.7" height="20" rx="0" fill="#f8f8f8" />
<rect x="342.3" y="974" width="1168.7" height="20" rx="0" fill="#e0e4e5" />
<rect x="342.3" y="994" width="1168.7" height="20" rx="0" fill="#f8f8f8" />
<rect x="342.3" y="1014" width="1168.7" height="20" rx="0" fill="#e0e4e5" />
<path d="M342.3 814 H1511 M342.3 953 H1511" stroke="#c9cdce" stroke-width="1.5"/>
<path d="M375.6 777 V1034" stroke="#c3c8ca" stroke-width="1.1"/>
<path d="M461.8 794 V1034" stroke="#c3c8ca" stroke-width="1.1"/>
<path d="M505 777 V1034" stroke="#c3c8ca" stroke-width="1.1"/>
<path d="M634 777 V1034" stroke="#c3c8ca" stroke-width="1.1"/>
<path d="M720.3 794 V1034" stroke="#c3c8ca" stroke-width="1.1"/>
<path d="M763.4 777 V1034" stroke="#c3c8ca" stroke-width="1.1"/>
<path d="M892.6 777 V1034" stroke="#c3c8ca" stroke-width="1.1"/>
<path d="M1151.4 777 V1034" stroke="#c3c8ca" stroke-width="1.1"/>
<path d="M1236.9 794 V1034" stroke="#c3c8ca" stroke-width="1.1"/>
<path d="M1280.6 777 V1034" stroke="#c3c8ca" stroke-width="1.1"/>
<path d="M1409.4 777 V1034" stroke="#c3c8ca" stroke-width="1.1"/>
<path d="M1495.9 794 V1034" stroke="#c3c8ca" stroke-width="1.1"/>
<path d="M1022.7 760 V1034" stroke="#a9b1b4" stroke-width="2"/>
<text x="1027.5" y="777.0" font-size="14.53" textLength="16.0" lengthAdjust="spacingAndGlyphs" fill="#111" stroke="#111" stroke-width="0.0" font-weight="normal" style="font-family:'Liberation Sans',sans-serif;">14</text>
<rect x="377.6" y="797" width="124.29999999999995" height="4" rx="2" fill="#0b7c12"/>
<text x="430.0" y="814.0" font-size="13.81" textLength="20.0" lengthAdjust="spacingAndGlyphs" fill="#0b7c12" stroke="#0b7c12" stroke-width="0.0" font-weight="bold" style="font-family:'Liberation Sans',sans-serif;">3:2</text>
<rect x="636.2" y="797" width="124.09999999999991" height="4" rx="2" fill="#0b7c12"/>
<text x="688.0" y="814.0" font-size="13.81" textLength="20.0" lengthAdjust="spacingAndGlyphs" fill="#0b7c12" stroke="#0b7c12" stroke-width="0.0" font-weight="bold" style="font-family:'Liberation Sans',sans-serif;">3:2</text>
<rect x="1153" y="797" width="124.70000000000005" height="4" rx="2" fill="#0b7c12"/>
<text x="1205.0" y="814.0" font-size="13.81" textLength="20.0" lengthAdjust="spacingAndGlyphs" fill="#0b7c12" stroke="#0b7c12" stroke-width="0.0" font-weight="bold" style="font-family:'Liberation Sans',sans-serif;">3:2</text>
<rect x="1411" y="797" width="100" height="4" rx="2" fill="#0b7c12"/>
<text x="1463.4" y="814.0" font-size="13.81" textLength="20.0" lengthAdjust="spacingAndGlyphs" fill="#0b7c12" stroke="#0b7c12" stroke-width="0.0" font-weight="bold" style="font-family:'Liberation Sans',sans-serif;">3:2</text>
<rect x="375" y="829" width="43" height="5" rx="0" fill="#0c7a14" />
<rect x="368" y="814" width="47" height="15" fill="url(#ng)"/>
<text x="371.5" y="825.5" font-size="11.34" textLength="11.0" lengthAdjust="spacingAndGlyphs" fill="#0b3d12" stroke="#0b3d12" stroke-width="0.0" font-weight="bold" style="font-family:'Liberation Sans',sans-serif;">B4</text>
<rect x="418" y="869" width="43.80000000000001" height="5" rx="0" fill="#0c7a14" />
<rect x="409" y="854" width="29" height="15" fill="url(#ng)"/>
<text x="412.5" y="865.5" font-size="11.34" textLength="11.0" lengthAdjust="spacingAndGlyphs" fill="#0b3d12" stroke="#0b3d12" stroke-width="0.0" font-weight="bold" style="font-family:'Liberation Sans',sans-serif;">A4</text>
<rect x="461.8" y="909" width="42.599999999999966" height="5" rx="0" fill="#0c7a14" />
<rect x="445.8" y="894" width="36.19999999999999" height="15" fill="url(#ng)"/>
<text x="449.3" y="905.5" font-size="11.34" textLength="11.0" lengthAdjust="spacingAndGlyphs" fill="#0b3d12" stroke="#0b3d12" stroke-width="0.0" font-weight="bold" style="font-family:'Liberation Sans',sans-serif;">G4</text>
<rect x="634" y="869" width="42.5" height="5" rx="0" fill="#0c7a14" />
<rect x="632.4" y="854" width="21.600000000000023" height="15" fill="url(#ng)"/>
<text x="635.9" y="865.5" font-size="11.34" textLength="11.0" lengthAdjust="spacingAndGlyphs" fill="#0b3d12" stroke="#0b3d12" stroke-width="0.0" font-weight="bold" style="font-family:'Liberation Sans',sans-serif;">A4</text>
<rect x="676.8" y="909" width="43.200000000000045" height="5" rx="0" fill="#0c7a14" />
<rect x="666" y="894" width="31" height="15" fill="url(#ng)"/>
<text x="669.5" y="905.5" font-size="11.34" textLength="11.0" lengthAdjust="spacingAndGlyphs" fill="#0b3d12" stroke="#0b3d12" stroke-width="0.0" font-weight="bold" style="font-family:'Liberation Sans',sans-serif;">G4</text>
<rect x="720" y="929" width="43" height="5" rx="0" fill="#0c7a14" />
<rect x="704" y="914" width="36" height="15" fill="url(#ng)"/>
<text x="707.5" y="925.5" font-size="11.34" textLength="17.0" lengthAdjust="spacingAndGlyphs" fill="#0b3d12" stroke="#0b3d12" stroke-width="0.0" font-weight="bold" style="font-family:'Liberation Sans',sans-serif;">F♯4</text>
<rect x="1151" y="829" width="42.799999999999955" height="5" rx="0" fill="#0c7a14" />
<rect x="1150.4" y="814" width="40.19999999999982" height="15" fill="url(#ng)"/>
<text x="1153.9" y="825.5" font-size="11.34" textLength="11.0" lengthAdjust="spacingAndGlyphs" fill="#0b3d12" stroke="#0b3d12" stroke-width="0.0" font-weight="bold" style="font-family:'Liberation Sans',sans-serif;">B4</text>
<rect x="1193.8" y="869" width="43.100000000000136" height="5" rx="0" fill="#0c7a14" />
<rect x="1183" y="854" width="30.700000000000045" height="15" fill="url(#ng)"/>
<text x="1186.5" y="865.5" font-size="11.34" textLength="11.0" lengthAdjust="spacingAndGlyphs" fill="#0b3d12" stroke="#0b3d12" stroke-width="0.0" font-weight="bold" style="font-family:'Liberation Sans',sans-serif;">A4</text>
<rect x="1236.9" y="909" width="43.299999999999955" height="5" rx="0" fill="#0c7a14" />
<rect x="1218.5" y="894" width="38.90000000000009" height="15" fill="url(#ng)"/>
<text x="1222.0" y="905.5" font-size="11.34" textLength="11.0" lengthAdjust="spacingAndGlyphs" fill="#0b3d12" stroke="#0b3d12" stroke-width="0.0" font-weight="bold" style="font-family:'Liberation Sans',sans-serif;">G4</text>
<rect x="1409" y="869" width="43.200000000000045" height="5" rx="0" fill="#0c7a14" />
<rect x="1406.9" y="854" width="22.799999999999955" height="15" fill="url(#ng)"/>
<text x="1410.4" y="865.5" font-size="11.34" textLength="11.0" lengthAdjust="spacingAndGlyphs" fill="#0b3d12" stroke="#0b3d12" stroke-width="0.0" font-weight="bold" style="font-family:'Liberation Sans',sans-serif;">A4</text>
<rect x="1452.2" y="909" width="43.700000000000045" height="5" rx="0" fill="#0c7a14" />
<rect x="1439.5" y="894" width="32.90000000000009" height="15" fill="url(#ng)"/>
<text x="1443.0" y="905.5" font-size="11.34" textLength="11.0" lengthAdjust="spacingAndGlyphs" fill="#0b3d12" stroke="#0b3d12" stroke-width="0.0" font-weight="bold" style="font-family:'Liberation Sans',sans-serif;">G4</text>
<rect x="1495.9" y="929" width="15.099999999999909" height="5" rx="0" fill="#0c7a14" />
<rect x="1471.2" y="914" width="39.799999999999955" height="15" fill="url(#ng)"/>
<text x="1474.7" y="925.5" font-size="11.34" textLength="17.0" lengthAdjust="spacingAndGlyphs" fill="#0b3d12" stroke="#0b3d12" stroke-width="0.0" font-weight="bold" style="font-family:'Liberation Sans',sans-serif;">F♯4</text>
<rect x="762.9" y="909" width="129.10000000000002" height="5" rx="0" fill="#8a0d10" />
<rect x="747.7" y="894" width="78.29999999999995" height="15" rx="0" fill="#fd7e0d" />
<path d="M750.2 901.5 L754.7 897.5 V905.5 Z M823.5 901.5 L819 897.5 V905.5 Z" fill="#6a1a05"/>
<text x="761.7" y="905.5" font-size="11.34" textLength="12.0" lengthAdjust="spacingAndGlyphs" fill="#3a1805" stroke="#3a1805" stroke-width="0.0" font-weight="bold" style="font-family:'Liberation Sans',sans-serif;">G4</text>
<rect x="893" y="1009" width="129" height="5" rx="0" fill="#8a0d10" />
<rect x="893.4" y="994" width="62.10000000000002" height="15" rx="0" fill="#fd7e0d" />
<path d="M895.9 1001.5 L900.4 997.5 V1005.5 Z M953.0 1001.5 L948.5 997.5 V1005.5 Z" fill="#6a1a05"/>
<text x="907.4" y="1005.5" font-size="11.34" textLength="12.0" lengthAdjust="spacingAndGlyphs" fill="#3a1805" stroke="#3a1805" stroke-width="0.0" font-weight="bold" style="font-family:'Liberation Sans',sans-serif;">D4</text>
<rect x="1511" y="757" width="25" height="426" rx="0" fill="#191d21" />
<path d="M1511 794 H1536 M1511 940 H1536" stroke="#111" stroke-width="1"/>
<rect x="1517" y="840" width="15" height="16" rx="4" fill="#4a545e" />
<rect x="1517" y="939" width="14" height="15" rx="2" fill="#3a444e" />
<path d="M1520 946.5 H1528" stroke="#eef1f3" stroke-width="2"/>
<rect x="1522" y="963" width="4" height="46" rx="2" fill="#0a0c0e"/><rect x="1522" y="963" width="4" height="22" rx="2" fill="#1aa8f0"/>
<circle cx="1524" cy="986" r="8" fill="#3c4650" stroke="#15181b" stroke-width="1.5"/>
<rect x="1517" y="1017" width="14" height="15" rx="2" fill="#3a444e" />
<path d="M1520 1024.5 H1528 M1524 1020.5 V1028.5" stroke="#eef1f3" stroke-width="2"/>
<rect x="342.3" y="1034" width="1168.7" height="33.5" rx="0" fill="#f1eff1" />
<clipPath id="ptc"><rect x="342.3" y="1030" width="1168.7" height="40"/></clipPath><g clip-path="url(#ptc)">
<rect x="331" y="1037" width="412.79999999999995" height="27.5" rx="4" fill="#72ee8e" stroke="#17832a" stroke-width="2"/>
<rect x="748.3" y="1037" width="269.30000000000007" height="27.5" rx="4" fill="#72ee8e" stroke="#17832a" stroke-width="2"/>
<rect x="1023" y="1037" width="501" height="27.5" rx="4" fill="#72ee8e" stroke="#17832a" stroke-width="2"/>
</g>
<path d="M375.6 1044 V1063" stroke="#5fd37a" stroke-width="1" opacity="0.6"/>
<path d="M461.8 1044 V1063" stroke="#5fd37a" stroke-width="1" opacity="0.6"/>
<path d="M505 1044 V1063" stroke="#5fd37a" stroke-width="1" opacity="0.6"/>
<path d="M634 1044 V1063" stroke="#5fd37a" stroke-width="1" opacity="0.6"/>
<path d="M720.3 1044 V1063" stroke="#5fd37a" stroke-width="1" opacity="0.6"/>
<path d="M763.4 1044 V1063" stroke="#5fd37a" stroke-width="1" opacity="0.6"/>
<path d="M892.6 1044 V1063" stroke="#5fd37a" stroke-width="1" opacity="0.6"/>
<path d="M1151.4 1044 V1063" stroke="#5fd37a" stroke-width="1" opacity="0.6"/>
<path d="M1236.9 1044 V1063" stroke="#5fd37a" stroke-width="1" opacity="0.6"/>
<path d="M1280.6 1044 V1063" stroke="#5fd37a" stroke-width="1" opacity="0.6"/>
<path d="M1409.4 1044 V1063" stroke="#5fd37a" stroke-width="1" opacity="0.6"/>
<path d="M1495.9 1044 V1063" stroke="#5fd37a" stroke-width="1" opacity="0.6"/>
<path d="M1022.7 1044 V1063" stroke="#5fd37a" stroke-width="1" opacity="0.6"/>
<text x="754.6" y="1055.6" font-size="13.52" textLength="52.6" lengthAdjust="spacingAndGlyphs" fill="#0d7a1e" stroke="#0d7a1e" stroke-width="0.6" font-weight="normal" style="font-family:'Liberation Sans',sans-serif;">Staccato</text>
<text x="1028.5" y="1055.6" font-size="13.52" textLength="216.5" lengthAdjust="spacingAndGlyphs" fill="#0d7a1e" stroke="#0d7a1e" stroke-width="0.6" font-weight="normal" style="font-family:'Liberation Sans',sans-serif;">Natural, Note Length &lt;= Very Short</text>
<text x="119.5" y="1057.5" font-size="15.26" textLength="130.5" lengthAdjust="spacingAndGlyphs" fill="#eef1f3" stroke="#eef1f3" stroke-width="0.4" font-weight="normal" style="font-family:'Liberation Sans',sans-serif;">Playing Techniques</text>
<rect x="342.3" y="1067.3" width="1168.7" height="3.400000000000091" rx="0" fill="#0c0c0c" />
<rect x="803.8" y="1067.3" width="2.5" height="3.400000000000091" rx="0" fill="#ffffff" />
<rect x="812.8499999999999" y="1067.3" width="2.5" height="3.400000000000091" rx="0" fill="#ffffff" />
<rect x="821.9" y="1067.3" width="2.5" height="3.400000000000091" rx="0" fill="#ffffff" />
<rect x="830.9499999999999" y="1067.3" width="2.5" height="3.400000000000091" rx="0" fill="#ffffff" />
<rect x="840.0" y="1067.3" width="2.5" height="3.400000000000091" rx="0" fill="#ffffff" />
<rect x="342.3" y="1070.7" width="1168.7" height="112.29999999999995" rx="0" fill="#f8f8f8" />
<rect x="342.3" y="1070.7" width="1168.7" height="6.2999999999999545" rx="0" fill="#e7e7e7" />
<rect x="342.3" y="1177.2" width="1168.7" height="5.7999999999999545" rx="0" fill="#e7e7e7" />
<path d="M375.6 1071 V1183" stroke="#c3c8ca" stroke-width="1.1"/>
<path d="M461.8 1071 V1183" stroke="#c3c8ca" stroke-width="1.1"/>
<path d="M505 1071 V1183" stroke="#c3c8ca" stroke-width="1.1"/>
<path d="M634 1071 V1183" stroke="#c3c8ca" stroke-width="1.1"/>
<path d="M720.3 1071 V1183" stroke="#c3c8ca" stroke-width="1.1"/>
<path d="M763.4 1071 V1183" stroke="#c3c8ca" stroke-width="1.1"/>
<path d="M892.6 1071 V1183" stroke="#c3c8ca" stroke-width="1.1"/>
<path d="M1151.4 1071 V1183" stroke="#c3c8ca" stroke-width="1.1"/>
<path d="M1236.9 1071 V1183" stroke="#c3c8ca" stroke-width="1.1"/>
<path d="M1280.6 1071 V1183" stroke="#c3c8ca" stroke-width="1.1"/>
<path d="M1409.4 1071 V1183" stroke="#c3c8ca" stroke-width="1.1"/>
<path d="M1495.9 1071 V1183" stroke="#c3c8ca" stroke-width="1.1"/>
<path d="M1022.7 1071 V1183" stroke="#a9b1b4" stroke-width="2"/>
<rect x="368.9" y="1127.5" width="30.100000000000023" height="49.700000000000045" fill="#08ea6a" stroke="#12b046" stroke-width="1" stroke-opacity="0.7"/>
<rect x="409.8" y="1127.9" width="30.5" height="49.299999999999955" fill="#08ea6a" stroke="#12b046" stroke-width="1" stroke-opacity="0.7"/>
<rect x="446.5" y="1113.8" width="31" height="63.40000000000009" fill="#00e850" stroke="#12b046" stroke-width="1" stroke-opacity="0.7"/>
<rect x="633.2" y="1136.0" width="31.0" height="41.200000000000045" fill="#4ef07a" stroke="#12b046" stroke-width="1" stroke-opacity="0.7"/>
<rect x="666.5" y="1128.3" width="31" height="48.90000000000009" fill="#30ee70" stroke="#12b046" stroke-width="1" stroke-opacity="0.7"/>
<rect x="704.8" y="1116.8" width="30.5" height="60.40000000000009" fill="#00e850" stroke="#12b046" stroke-width="1" stroke-opacity="0.7"/>
<rect x="748.3" y="1122.3" width="30.200000000000045" height="54.90000000000009" fill="#004a8a" stroke="#1f7fd0" stroke-width="1" stroke-opacity="0.7"/>
<rect x="894.1" y="1099.7" width="30.399999999999977" height="77.5" fill="#004a8a" stroke="#1f7fd0" stroke-width="1" stroke-opacity="0.7"/>
<rect x="1151.4" y="1123.7" width="30.799999999999955" height="53.5" fill="#00ec66" stroke="#12b046" stroke-width="1" stroke-opacity="0.7"/>
<rect x="1183.9" y="1127.3" width="30.399999999999864" height="49.90000000000009" fill="#00ec66" stroke="#12b046" stroke-width="1" stroke-opacity="0.7"/>
<rect x="1219.7" y="1127.7" width="30.399999999999864" height="49.5" fill="#00ec66" stroke="#12b046" stroke-width="1" stroke-opacity="0.7"/>
<rect x="1407.1" y="1127.7" width="30.800000000000182" height="49.5" fill="#00ec66" stroke="#12b046" stroke-width="1" stroke-opacity="0.7"/>
<rect x="1440.8" y="1120.4" width="30.0" height="56.799999999999955" fill="#00ec66" stroke="#12b046" stroke-width="1" stroke-opacity="0.7"/>
<rect x="1472.5" y="1119.5" width="31.200000000000045" height="57.700000000000045" fill="#00ec66" stroke="#12b046" stroke-width="1" stroke-opacity="0.7"/>
<rect x="124" y="1076" width="17.5" height="17" rx="4" fill="#1b2127" />
<path d="M129.5 1081.5 L136 1088 M136 1081.5 L129.5 1088" stroke="#eef1f3" stroke-width="1.7"/>
<rect x="147" y="1075.5" width="175" height="31.200000000000045" rx="7" fill="#3b4853" />
<text x="156.0" y="1096.5" font-size="15.41" textLength="55.0" lengthAdjust="spacingAndGlyphs" fill="#eef1f3" stroke="#eef1f3" stroke-width="0.4" font-weight="normal" style="font-family:'Liberation Sans',sans-serif;">Velocity</text>
<path d="M302 1088 L308.5 1094.5 L315 1088" stroke="#eef1f3" stroke-width="2" fill="none"/>
<rect x="144" y="1128" width="38" height="31" rx="7" fill="#1f262d" />
<path d="M156 1143 V1152 M162.5 1134 V1152 M169 1139 V1152" stroke="#eef1f3" stroke-width="2.8"/>
<rect x="187" y="1121" width="135" height="45" rx="8" fill="#2c3640" />
<rect x="187" y="1121" width="45" height="45" rx="8" fill="#333e49" />
<rect x="277" y="1121" width="45" height="45" rx="8" fill="#333e49" />
<path d="M203 1140.5 H216" stroke="#eef1f3" stroke-width="2.2"/><path d="M292 1140.5 H306 M299 1133.5 V1147.5" stroke="#eef1f3" stroke-width="2.2"/>
<text x="246.0" y="1150.5" font-size="14.53" textLength="16.5" lengthAdjust="spacingAndGlyphs" fill="#e6eaed" stroke="#e6eaed" stroke-width="0.0" font-weight="normal" style="font-family:'Liberation Sans',sans-serif;">70</text>
<rect x="110" y="1183" width="1426" height="24" rx="0" fill="#191d21" />
<rect x="110" y="1185.5" width="187" height="21.5" rx="0" fill="#2f3b47" />
<rect x="299.5" y="1185.5" width="40.5" height="21.5" rx="0" fill="#2f3b47" />
<path d="M116 1196 H126 M121 1191 V1201" stroke="#eef1f3" stroke-width="1.6"/>
<text x="132.0" y="1200.5" font-size="13.08" textLength="61.5" lengthAdjust="spacingAndGlyphs" fill="#eef1f3" stroke="#eef1f3" stroke-width="0.3" font-weight="normal" style="font-family:'Liberation Sans',sans-serif;">Add Editor</text>
<path d="M314 1192 H325 M314 1196 H325 M314 1200 H325" stroke="#eef1f3" stroke-width="1.2"/>
<rect x="342.5" y="1185" width="1168.5" height="22" rx="0" fill="#191d21" />
<rect x="345" y="1189" width="12.699999999999989" height="14" rx="2" fill="#3a444e" />
<path d="M347.5 1196 H355" stroke="#eef1f3" stroke-width="1.8"/>
<rect x="367.5" y="1193.5" width="118" height="4.5" rx="2.2" fill="#0a0c0e"/><rect x="367.5" y="1193.5" width="86" height="4.5" rx="2.2" fill="#1aa8f0"/>
<circle cx="454" cy="1196" r="8.5" fill="#3c4650" stroke="#15181b" stroke-width="1.5"/>
<rect x="495.4" y="1189" width="12.600000000000023" height="14" rx="2" fill="#3a444e" />
<path d="M498 1196 H505.5 M501.7 1192.3 V1199.7" stroke="#eef1f3" stroke-width="1.8"/>
<rect x="738" y="1188" width="20.399999999999977" height="17" rx="5" fill="#3f4a54" />
<path d="M512 1185 V1207" stroke="#111" stroke-width="1"/>
</svg>
<svg class="a" style="left:0;top:0" width="1642" height="1262" viewBox="0 0 1642 1262"><rect x="61" y="59" width="270" height="36" rx="8" fill="#2f3a45" />
<rect x="128.5" y="59" width="63.0" height="36" rx="8" fill="#0d5a89" />
<text x="74.8" y="83.6" font-size="17.88" textLength="39.5" lengthAdjust="spacingAndGlyphs" fill="#e9eef2" stroke="#e9eef2" stroke-width="0.5" font-weight="normal" style="font-family:'Liberation Sans',sans-serif;">Setup</text>
<text x="142.0" y="83.6" font-size="17.88" textLength="35.9" lengthAdjust="spacingAndGlyphs" fill="#ffffff" stroke="#ffffff" stroke-width="0.5" font-weight="normal" style="font-family:'Liberation Sans',sans-serif;">Write</text>
<text x="205.3" y="83.6" font-size="17.88" textLength="54.4" lengthAdjust="spacingAndGlyphs" fill="#e9eef2" stroke="#e9eef2" stroke-width="0.5" font-weight="normal" style="font-family:'Liberation Sans',sans-serif;">Engrave</text>
<text x="287.9" y="83.6" font-size="17.88" textLength="28.8" lengthAdjust="spacingAndGlyphs" fill="#e9eef2" stroke="#e9eef2" stroke-width="0.5" font-weight="normal" style="font-family:'Liberation Sans',sans-serif;">Play</text>
<rect x="344.5" y="57" width="157.5" height="40" rx="8" fill="#2f3a45" />
<text x="353.6" y="83.6" font-size="17.88" textLength="64.0" lengthAdjust="spacingAndGlyphs" fill="#e9eef2" stroke="#e9eef2" stroke-width="0.5" font-weight="normal" style="font-family:'Liberation Sans',sans-serif;">Full score</text>
<path d="M481.5 73.5 L488 80 L494.5 73.5" stroke="#e9eef2" stroke-width="2" fill="none"/>
<rect x="516" y="60" width="39.5" height="34" rx="8" fill="#2f3b47" />
<rect x="559" y="60" width="39.5" height="34" rx="8" fill="#2f3b47" />
<path d="M525.5 72 V85 a1.5 1.5 0 0 0 1.5 1.5 H545 a1.5 1.5 0 0 0 1.5 -1.5 V76" stroke="#f2f4f6" stroke-width="2.2" fill="none"/>
<rect x="525" y="68" width="5" height="4" rx="0" fill="#f2f4f6" />
<rect x="532" y="68" width="6" height="4" rx="0" fill="#f2f4f6" />
<path d="M540 71 H548 M544 67 V75" stroke="#f2f4f6" stroke-width="2"/>
<rect x="568" y="69" width="21" height="17" rx="2.5" stroke="#f2f4f6" stroke-width="2.2" fill="none"/><path d="M568 71 H589" stroke="#f2f4f6" stroke-width="3"/>
<rect x="957" y="60" width="40" height="34" rx="8" fill="#2f3b47" />
<rect x="1000" y="60" width="40" height="34" rx="8" fill="#2f3b47" />
<circle cx="977.4" cy="77" r="11.5" fill="#eceff2"/>
<circle cx="977.4" cy="70.5" r="2.5" fill="#2f3b47"/>
<circle cx="983.6" cy="75" r="2.5" fill="#2f3b47"/>
<circle cx="981.1999999999999" cy="82.3" r="2.5" fill="#2f3b47"/>
<circle cx="973.6" cy="82.3" r="2.5" fill="#2f3b47"/>
<circle cx="971.1999999999999" cy="75" r="2.5" fill="#2f3b47"/>
<circle cx="977.4" cy="77" r="1.1" fill="#2f3b47"/><path d="M978 88.3 H990" stroke="#eceff2" stroke-width="1.8"/>
<path d="M1011 67 V87" stroke="#eceff2" stroke-width="1.8"/><rect x="1008.4" y="78.5" width="5.2" height="7" rx="2.4" fill="#2f3b47" stroke="#eceff2" stroke-width="1.6"/>
<path d="M1019.5 67 V87" stroke="#eceff2" stroke-width="1.8"/><rect x="1016.9" y="68.5" width="5.2" height="7" rx="2.4" fill="#2f3b47" stroke="#eceff2" stroke-width="1.6"/>
<path d="M1028 67 V87" stroke="#eceff2" stroke-width="1.8"/><rect x="1025.4" y="73.5" width="5.2" height="7" rx="2.4" fill="#2f3b47" stroke="#eceff2" stroke-width="1.6"/>
<rect x="1072" y="55.5" width="45" height="44.5" rx="10" fill="#12b0f5" />
<path d="M1088 71.5 A9.3 9.3 0 1 0 1100.2 71.5" stroke="#0a0d10" stroke-width="2.4" fill="none"/><path d="M1094.2 67.5 V77.5" stroke="#0a0d10" stroke-width="2.4"/>
<rect x="1120" y="57" width="101" height="40" rx="8" fill="#141618" />
<text x="1153.0" y="84.0" font-size="18.31" textLength="62.7" lengthAdjust="spacingAndGlyphs" fill="#eef1f3" stroke="#eef1f3" stroke-width="0.3" font-weight="normal" style="font-family:'Liberation Sans',sans-serif;">1.1.1.000</text>
<rect x="1235.5" y="67.5" width="4" height="19" rx="2" fill="#5b6068" stroke="#f0f2f4" stroke-width="1.6"/>
<path d="M1257 68.5 L1242.5 77 L1257 85.5 Z" fill="#5b6068" stroke="#f0f2f4" stroke-width="1.8" stroke-linejoin="round"/>
<path d="M1285.5 68.5 L1301 77 L1285.5 85.5 Z" fill="#0c5326" stroke="#22d02a" stroke-width="2" stroke-linejoin="round"/>
<circle cx="1340.6" cy="77" r="9.6" fill="#5a2a31" stroke="#ef1d24" stroke-width="2"/>
<path d="M1386 68 L1389 68 L1396 85.5 L1380.5 85.5 Z" fill="#50555c" stroke="#f0f2f4" stroke-width="1.7" stroke-linejoin="round"/><path d="M1380.5 67.5 L1390.5 81" stroke="#f0f2f4" stroke-width="1.7"/>
<path d="M1421 57 H1437 V97.5 H1421 A8 8 0 0 1 1413 89.5 V65 A8 8 0 0 1 1421 57 Z" fill="#12b0f5"/>
<rect x="1437" y="57" width="51" height="40" rx="0" fill="#141618" />
<ellipse cx="1426.5" cy="86.5" rx="5.2" ry="3.8" transform="rotate(-25 1426.5 86.5)" fill="#0a0d10"/><path d="M1430.6 85.5 V66" stroke="#0a0d10" stroke-width="1.8"/>
<path d="M1445 67 V85.5 M1441.5 70.5 L1445 67 L1448.5 70.5 M1441.5 82 L1445 85.5 L1448.5 82" stroke="#d8dde0" stroke-width="1.6" fill="none"/>
<text x="1470.4" y="82.8" font-size="15.70" textLength="15.5" lengthAdjust="spacingAndGlyphs" fill="#eef1f3" stroke="#eef1f3" stroke-width="0.0" font-weight="normal" style="font-family:'Liberation Sans',sans-serif;">94</text>
<path d="M1520.5 84 V79 a2 2 0 0 0 -2 -2 H1506 M1511 72 L1506 77 L1511 82" stroke="#f0f2f4" stroke-width="1.8" fill="none"/>
<path d="M1553.5 84 V79 a2 2 0 0 1 2 -2 H1568 M1563 72 L1568 77 L1563 82" stroke="#8c9298" stroke-width="1.8" fill="none"/><rect x="71.5" y="124.5" width="20" height="19" rx="3" stroke="#eef1f3" stroke-width="1.7" fill="none"/><path d="M75.5 127 V141" stroke="#eef1f3" stroke-width="2"/>
<rect x="119.5" y="112" width="40.0" height="34" rx="8" fill="#262d35" />
<rect x="167" y="112" width="40" height="34" rx="8" fill="#262d35" />
<rect x="214" y="112" width="40" height="34" rx="8" fill="#262d35" />
<rect x="261" y="112" width="40" height="34" rx="8" fill="#262d35" />
<path d="M147 129 H132 M137.5 123.5 L132 129 L137.5 134.5" stroke="#eef1f3" stroke-width="1.8" fill="none"/>
<path d="M179 129 H194 M188.5 123.5 L194 129 L188.5 134.5" stroke="#eef1f3" stroke-width="1.8" fill="none"/>
<path d="M234 137 V121 M228.5 126.5 L234 121 L239.5 126.5" stroke="#eef1f3" stroke-width="1.8" fill="none"/>
<path d="M281 121 V137 M275.5 131.5 L281 137 L286.5 131.5" stroke="#eef1f3" stroke-width="1.8" fill="none"/>
<rect x="560" y="112.3" width="39.5" height="33.3" rx="8" fill="#262d35" />
<rect x="607" y="112.3" width="39.5" height="33.3" rx="8" fill="#262d35" />
<rect x="654.5" y="112.3" width="39.5" height="33.3" rx="8" fill="#262d35" />
<path d="M567.5 119.5 H581 M567.5 119 V125 M571 119 V123 M574.5 119 V123 M578 119 V123 M581 119 V125" stroke="#eef1f3" stroke-width="1.5" fill="none"/>
<ellipse cx="582.5" cy="137" rx="4.8" ry="3.8" transform="rotate(-20 582.5 137)" fill="#eef1f3"/><path d="M586.3 136 V118.5 L592 121.5 V125 L587 123" stroke="#eef1f3" stroke-width="1.8" fill="#eef1f3"/>
<path d="M617 124 V119.5 H622 M625 119.5 H630 M633 119.5 H636 V124 M636 127 V130 M617 127 V132 M617 135 V139 H622" stroke="#eef1f3" stroke-width="1.6" fill="none"/>
<rect x="626" y="129.5" width="13" height="12.0" rx="2" fill="#eef1f3" />
<path d="M664.5 124 V119.5 H669.5 M672.5 119.5 H677.5 M680.5 119.5 H683.5 V124 M683.5 127 V130 M664.5 127 V132 M664.5 135 V139 H669.5" stroke="#eef1f3" stroke-width="1.6" fill="none"/>
<rect x="673.5" y="129.5" width="13.0" height="12.0" rx="2" fill="#eef1f3" />
<path d="M630 131.5 V139.5 M626 135.5 H634" stroke="#262d35" stroke-width="2"/>
<path d="M674 135.5 H683 M680 132.5 L683 135.5 L680 138.5" stroke="#262d35" stroke-width="1.6" fill="none"/>
<rect x="951.4" y="112" width="40.0" height="34" rx="8" fill="#262d35" />
<rect x="998.6" y="112" width="39.999999999999886" height="34" rx="8" fill="#262d35" />
<rect x="1093" y="112" width="40" height="34" rx="8" fill="#262d35" />
<rect x="1140.7" y="112" width="40.0" height="34" rx="8" fill="#262d35" />
<rect x="1046.6" y="112" width="38" height="34" rx="8" fill="#15181b" stroke="#231d1b" stroke-width="1.2"/>
<rect x="960" y="119" width="10" height="12" rx="1" stroke="#e9edf0" stroke-width="1.4" fill="none"/><path d="M962 123 H968 M962 126 H968 M962 129 H966" stroke="#e9edf0" stroke-width="1.2"/><path d="M969 129 L981 131 M970 119 L977 137" stroke="#e9edf0" stroke-width="1.4"/><circle cx="981.5" cy="131" r="1.8" stroke="#e9edf0" stroke-width="1.3" fill="none"/><circle cx="976.5" cy="138" r="1.8" stroke="#e9edf0" stroke-width="1.3" fill="none"/>
<rect x="1015" y="118" width="13" height="16" rx="1.5" stroke="#e9edf0" stroke-width="1.5" fill="#262d35"/><rect x="1009" y="123" width="13" height="17" rx="1.5" stroke="#e9edf0" stroke-width="1.5" fill="#262d35"/><path d="M1012 129 H1019 M1012 132.5 H1019 M1012 136 H1019" stroke="#e9edf0" stroke-width="1.3"/>
<rect x="1063" y="118" width="13" height="16" rx="1.5" fill="#8a8f94"/><rect x="1056.5" y="123" width="13" height="17" rx="1.5" stroke="#8a8f94" stroke-width="1.5" fill="#15181b"/><path d="M1059.5 129 H1066.5 M1059.5 132.5 H1066.5 M1059.5 136 H1066.5" stroke="#8a8f94" stroke-width="1.3"/>
<path d="M1109 122 H1106.5 a2 2 0 0 0 -2 2 V134 a2 2 0 0 0 2 2 H1108 M1116 136 H1118.5 a2 2 0 0 0 2 -2 V124 a2 2 0 0 0 -2 -2 H1117" stroke="#e9edf0" stroke-width="1.8" fill="none"/><path d="M1117 118.5 L1113 122 L1117 125.5 Z M1108 132.5 L1112 136 L1108 139.5 Z" fill="#e9edf0" stroke="#e9edf0" stroke-width="1"/>
<path d="M1151.5 121 H1170 M1157 119.5 H1164.5" stroke="#e9edf0" stroke-width="2" stroke-linecap="round"/><path d="M1153.5 123.5 H1168 L1166.5 138 a1.5 1.5 0 0 1 -1.5 1.3 H1156.5 a1.5 1.5 0 0 1 -1.5 -1.3 Z" fill="#e9edf0"/>
<rect x="1439" y="112" width="40" height="34" rx="8" fill="#262d35" />
<rect x="1486" y="112" width="40" height="34" rx="8" fill="#262d35" />
<circle cx="1451.5" cy="129" r="1.6" fill="#e9edf0"/><circle cx="1459" cy="129" r="1.6" fill="#e9edf0"/><circle cx="1466.5" cy="129" r="1.6" fill="#e9edf0"/>
<path d="M1494 129 Q1506 117 1518 129 Q1506 141 1494 129 Z" stroke="#e9edf0" stroke-width="1.8" fill="none"/><circle cx="1506" cy="129" r="3.6" fill="#e9edf0"/><ellipse cx="78" cy="196" rx="5.0" ry="3.8" transform="rotate(-22 78 196)" fill="#eef1f3" stroke="#eef1f3" stroke-width="0"/><path d="M82.2 195.5 V178" stroke="#eef1f3" stroke-width="1.8"/><path d="M82.2 178 C83.2 182 88.2 183 87.2 188" stroke="#eef1f3" stroke-width="2.2" fill="none"/>
<rect x="83.5" y="189" width="9.0" height="11" rx="2" fill="#eef1f3" /><path d="M88 191 V198 M84.5 194.5 H91.5" stroke="#262c33" stroke-width="1.6"/>
<path d="M73.5 229 V250 M69.5 233 L73.5 229 L77.5 233 M69.5 246 L73.5 250 L77.5 246" stroke="#eef1f3" stroke-width="1.6" fill="none"/><circle cx="73.5" cy="239.5" r="1.5" fill="#262c33" stroke="#eef1f3" stroke-width="1.2"/>
<ellipse cx="86" cy="246" rx="5.0" ry="3.8" transform="rotate(-22 86 246)" fill="#eef1f3" stroke="#eef1f3" stroke-width="0"/><path d="M90.2 245.5 V229" stroke="#eef1f3" stroke-width="1.8"/><path d="M90.2 229 C91.2 233 96.2 234 95.2 239" stroke="#eef1f3" stroke-width="2.2" fill="none"/>
<path d="M86 277 V301" stroke="#eef1f3" stroke-width="1.6"/>
<ellipse cx="82.5" cy="287.0" rx="4" ry="2.6" transform="rotate(-22 82.5 287.0)" fill="none" stroke="#eef1f3" stroke-width="1.4"/>
<ellipse cx="82.5" cy="292.5" rx="4" ry="2.6" transform="rotate(-22 82.5 292.5)" fill="none" stroke="#eef1f3" stroke-width="1.4"/>
<ellipse cx="82.5" cy="298.0" rx="4" ry="2.6" transform="rotate(-22 82.5 298.0)" fill="none" stroke="#eef1f3" stroke-width="1.4"/>
<path d="M71 327.5 L75 334 L79 327.5 M75 334 V344 M71 350.5 L75 344 L79 350.5" stroke="#eef1f3" stroke-width="1.6" fill="none"/>
<ellipse cx="86" cy="346" rx="4.3" ry="3.2" transform="rotate(-22 86 346)" fill="#eef1f3" stroke="#eef1f3" stroke-width="0"/><path d="M89.5 345.5 V328" stroke="#eef1f3" stroke-width="1.8"/>
<path d="M103 363 L108 358 V363 Z" fill="#eef1f3"/>
<path d="M78 390 V386.5 a5 5 0 0 1 10 0 V390" stroke="#8a8f94" stroke-width="2" fill="none"/><rect x="75.5" y="389.5" width="15.5" height="10.5" rx="1.5" fill="#8a8f94" />
<path d="M86.5 433 a5 5 0 0 0 -9 0 V444 a5 5 0 0 0 9 0 M83 440 H89 M85.5 440 V452 M78 452 H92" stroke="#eef1f3" stroke-width="1.8" fill="none"/>
<path d="M78 506 V496 a3 3 0 0 1 3 -3 M81 481 V489" stroke="#eef1f3" stroke-width="1.5" fill="none"/><ellipse cx="77.5" cy="490" rx="3.6" ry="2.6" fill="#eef1f3" transform="rotate(-22 77.5 490)"/>
<rect x="83" y="493" width="9" height="10" rx="2" fill="#eef1f3" /><path d="M87.5 495 V501 M84.5 498 H90.5" stroke="#262c33" stroke-width="1.5"/>
<path d="M103 515 L108 510 V515 Z" fill="#eef1f3"/>
<ellipse cx="80" cy="551" rx="4.5" ry="3.4" transform="rotate(-22 80 551)" fill="#eef1f3" stroke="#eef1f3" stroke-width="0"/><path d="M83.7 550.5 V532" stroke="#eef1f3" stroke-width="1.8"/><circle cx="90" cy="551" r="1.5" fill="#eef1f3"/>
<path d="M103 565 L108 560 V565 Z" fill="#eef1f3"/>
<path d="M80 581.5 L85.4 587.8 C82.7 590 81.4 592.6 85.4 596.2 C82.7 595.3 78.4 596.2 82.8 601.8 C76.2 597.8 80.7 594 83.6 597.2 L78.9 591.6 C81.6 588.7 82.4 586.2 80 581.5 Z" fill="#eef1f3" stroke="#eef1f3" stroke-width="0.8"/>
<text x="83" y="646.5" font-size="12" text-anchor="middle" fill="#eef1f3" font-weight="bold" style="font-family:Liberation Sans">3:2</text><path d="M69.5 646 V640 H72 M97 646 V640 H94.5" stroke="#eef1f3" stroke-width="1.2" fill="none"/>
<path d="M103 665 L108 660 V665 Z" fill="#eef1f3"/>
<ellipse cx="79.5" cy="699" rx="5.0" ry="3.8" transform="rotate(-22 79.5 699)" fill="#eef1f3" stroke="#eef1f3" stroke-width="0"/><path d="M83.7 698.5 V680" stroke="#eef1f3" stroke-width="1.8"/><path d="M83.7 680 C84.7 684 89.7 685 88.7 690" stroke="#eef1f3" stroke-width="2.2" fill="none"/><path d="M75 694 L90 683" stroke="#eef1f3" stroke-width="1.5"/>
<path d="M103 715 L108 710 V715 Z" fill="#eef1f3"/>
<ellipse cx="75" cy="738" rx="3.6" ry="2.8" transform="rotate(-22 75 738)" fill="none" stroke="#eef1f3" stroke-width="1.3"/><path d="M77.8 737.5 V724" stroke="#eef1f3" stroke-width="1.8"/><ellipse cx="86" cy="738" rx="3.6" ry="2.8" transform="rotate(-22 86 738)" fill="none" stroke="#eef1f3" stroke-width="1.3"/><path d="M88.8 737.5 V724" stroke="#eef1f3" stroke-width="1.8"/>
<path d="M73 745 Q82 753 91 745" stroke="#eef1f3" stroke-width="2" fill="none"/>
<path d="M74 782 L90 797 M90 782 L79 793" stroke="#eef1f3" stroke-width="1.5"/><circle cx="77" cy="797" r="2.5" fill="none" stroke="#eef1f3" stroke-width="1.4"/><circle cx="89.5" cy="789" r="2.5" fill="none" stroke="#eef1f3" stroke-width="1.4" transform="translate(3 3)"/>
<rect x="72" y="1171" width="20" height="19" rx="3" stroke="#eef1f3" stroke-width="1.6" fill="none"/><path d="M74 1186.5 H90" stroke="#eef1f3" stroke-width="2.5"/>
<rect x="1545" y="111" width="40" height="81" rx="9" fill="#16191c" />
<rect x="1545" y="111" width="40" height="40.5" rx="9" fill="#0d5a89" />
<path d="M1565 120.5 C1576 120 1579 126 1576.5 130.5 C1575 133 1571.5 132 1571 135 C1570.5 138 1574 139 1570.5 141 C1566 142.5 1553 141 1553.5 131 C1554 124.5 1559 120.5 1565 120.5 Z" fill="#eef1f3"/>
<circle cx="1558.5" cy="132.5" r="1.9" fill="#0d5a89"/>
<circle cx="1560.5" cy="126.5" r="1.9" fill="#0d5a89"/>
<circle cx="1566.5" cy="124.5" r="1.9" fill="#0d5a89"/>
<circle cx="1563.5" cy="137.5" r="1.9" fill="#0d5a89"/>
<circle cx="1571" cy="128" r="1.9" fill="#0d5a89"/>
<rect x="1551" y="165.5" width="28.5" height="14" rx="2" fill="#eef1f3"/>
<rect x="1553.0" y="167.5" width="2.2000000000000455" height="2.0" rx="0" fill="#16191c" />
<rect x="1556.3" y="167.5" width="2.2000000000000455" height="2.0" rx="0" fill="#16191c" />
<rect x="1559.6" y="167.5" width="2.2000000000000455" height="2.0" rx="0" fill="#16191c" />
<rect x="1562.9" y="167.5" width="2.2000000000000455" height="2.0" rx="0" fill="#16191c" />
<rect x="1566.2" y="167.5" width="2.2000000000000455" height="2.0" rx="0" fill="#16191c" />
<rect x="1569.5" y="167.5" width="2.2000000000000455" height="2.0" rx="0" fill="#16191c" />
<rect x="1572.8" y="167.5" width="2.2000000000000455" height="2.0" rx="0" fill="#16191c" />
<rect x="1576.1" y="167.5" width="2.2000000000000455" height="2.0" rx="0" fill="#16191c" />
<rect x="1553.0" y="170.9" width="2.2000000000000455" height="2.0" rx="0" fill="#16191c" />
<rect x="1556.3" y="170.9" width="2.2000000000000455" height="2.0" rx="0" fill="#16191c" />
<rect x="1559.6" y="170.9" width="2.2000000000000455" height="2.0" rx="0" fill="#16191c" />
<rect x="1562.9" y="170.9" width="2.2000000000000455" height="2.0" rx="0" fill="#16191c" />
<rect x="1566.2" y="170.9" width="2.2000000000000455" height="2.0" rx="0" fill="#16191c" />
<rect x="1569.5" y="170.9" width="2.2000000000000455" height="2.0" rx="0" fill="#16191c" />
<rect x="1572.8" y="170.9" width="2.2000000000000455" height="2.0" rx="0" fill="#16191c" />
<rect x="1576.1" y="170.9" width="2.2000000000000455" height="2.0" rx="0" fill="#16191c" />
<rect x="1556" y="175" width="18" height="2" rx="0" fill="#16191c" />
<path d="M1566 236 C1562 237 1560 233 1563.5 232 M1566 233 L1563 210 C1563 206 1569 208 1566.5 214 C1564 220 1558 222 1558.5 227 C1559 232 1570 232 1570 226.5 C1570 222 1563 221 1562.5 226" stroke="#eef1f3" stroke-width="2.2" fill="none"/>
<path d="M1558 260.5 L1565 259 M1557.5 265.5 L1565 264 M1559.5 256 V270 M1563 255 V269 M1566 270 L1575 268.5 M1566 275 L1575 273.5 M1568.5 265.5 V283 M1572.5 264.5 V282" stroke="#eef1f3" stroke-width="1.7" fill="none"/>
<text x="1565" y="322" font-size="16" text-anchor="middle" fill="#eef1f3" font-weight="bold" style="font-family:Liberation Serif">3</text><text x="1565" y="334.5" font-size="16" text-anchor="middle" fill="#eef1f3" font-weight="bold" style="font-family:Liberation Serif">4</text>
<ellipse cx="1557.5" cy="377" rx="4.3" ry="3.2" transform="rotate(-22 1557.5 377)" fill="#eef1f3" stroke="#eef1f3" stroke-width="0"/><path d="M1561.0 376.5 V362" stroke="#eef1f3" stroke-width="1.8"/><text x="1562" y="377" font-size="10.5" fill="#eef1f3" style="font-family:Liberation Sans">=72</text>
<text x="1565" y="427" font-size="22" text-anchor="middle" fill="#eef1f3" font-weight="bold" font-style="italic" style="font-family:Liberation Serif">f</text>
<text x="1565" y="479" font-size="19" text-anchor="middle" fill="#eef1f3" font-weight="bold" font-style="italic" style="font-family:Liberation Serif">tr</text>
<path d="M1555.5 528 V516 a3 3 0 0 1 3 -3 H1576 M1559 528 V520 H1562 V528" stroke="#eef1f3" stroke-width="1.6" fill="none"/><circle cx="1566.5" cy="527" r="1.2" fill="#eef1f3"/>
<path d="M1555 561 H1576 M1555 565.5 H1576 M1555 570 H1576 M1555 574.5 H1576 M1555 579 H1576 M1570 560 V580 M1576 560 V580" stroke="#eef1f3" stroke-width="1.5"/>
<path d="M1553.5 623 C1556 608 1574 608 1576.5 623 C1572 614 1558 614 1553.5 623 Z" fill="#eef1f3"/><circle cx="1565" cy="622" r="2.3" fill="#eef1f3"/>
<path d="M1554.5 663 L1557.5 677 L1560.5 663" stroke="#eef1f3" stroke-width="1.8" fill="none"/><path d="M1565 675 V665 H1575 V675" stroke="#eef1f3" stroke-width="2.5" fill="none"/>
<path d="M1555.5 729.5 L1574 711 M1566 711 H1574.5 V719.5" stroke="#eef1f3" stroke-width="1.7" fill="none"/>
<path d="M1557 762.5 H1573 a2 2 0 0 1 2 2 V774 a2 2 0 0 1 -2 2 H1566 L1561 780.5 V776 H1557 a2 2 0 0 1 -2 -2 V764.5 a2 2 0 0 1 2 -2 Z" stroke="#eef1f3" stroke-width="1.6" fill="none"/></svg>
</body></html>
